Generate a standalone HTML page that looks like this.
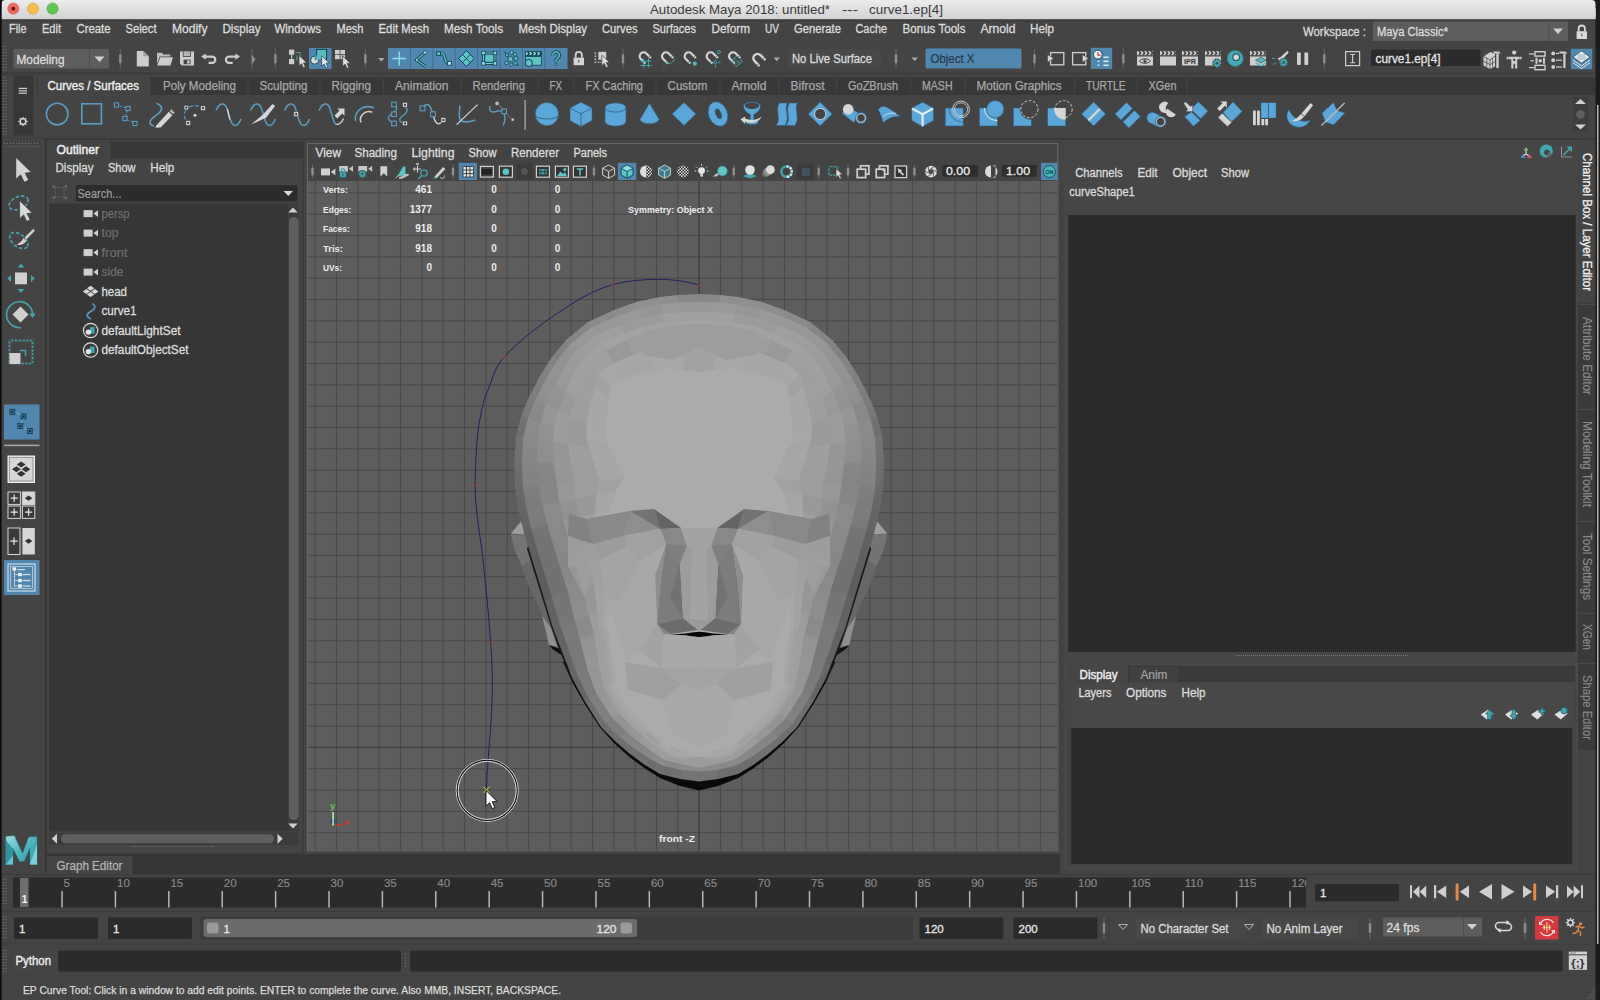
<!DOCTYPE html>
<html><head><meta charset="utf-8"><title>Autodesk Maya 2018</title>
<style>
html,body{margin:0;padding:0;width:1600px;height:1000px;overflow:hidden;background:#444}
svg{display:block;font-family:"Liberation Sans",sans-serif}
text{white-space:pre}
</style></head><body>
<svg width="1600" height="1000" viewBox="0 0 1600 1000">
<defs><linearGradient id="tg" x1="0" y1="0" x2="0" y2="1"><stop offset="0" stop-color="#ececec"/><stop offset="1" stop-color="#d2d2d2"/></linearGradient><linearGradient id="tg2" x1="0" y1="0" x2="0" y2="1"><stop offset="0" stop-color="#e1e1e1"/><stop offset="1" stop-color="#d2d2d2"/></linearGradient></defs>
<rect x="0" y="0" width="1600" height="20" fill="#1c1c1c"/>
<rect x="1.5" y="0" width="1594" height="19.5" fill="url(#tg)" rx="4"/>
<rect x="1.5" y="10" width="1594" height="9.5" fill="#d6d6d6"/>
<rect x="1.5" y="8" width="1594" height="11.5" fill="url(#tg2)"/>
<rect x="0" y="19.3" width="1600" height="1.2" fill="#333"/>
<circle cx="13.3" cy="8.6" r="5.6" fill="#ee6a5f" stroke="#d9554b" stroke-width="0.6"/>
<circle cx="13.3" cy="8.7" r="1.9" fill="#6b0d08"/>
<circle cx="33" cy="8.6" r="5.6" fill="#f5bd4f" stroke="#dca13a" stroke-width="0.6"/>
<circle cx="52.5" cy="8.6" r="5.6" fill="#61c454" stroke="#4aa73c" stroke-width="0.6"/>
<text x="650" y="13.6" font-size="13" fill="#3a3a3a" textLength="180" lengthAdjust="spacingAndGlyphs">Autodesk Maya 2018: untitled*</text>
<text x="842" y="13.6" font-size="13" fill="#3a3a3a" textLength="16" lengthAdjust="spacingAndGlyphs">---</text>
<text x="869" y="13.6" font-size="13" fill="#3a3a3a" textLength="74" lengthAdjust="spacingAndGlyphs">curve1.ep[4]</text>
<text x="9" y="32.6" font-size="12" fill="#dcdcdc" textLength="17.5" lengthAdjust="spacingAndGlyphs" stroke="#dcdcdc" stroke-width="0.3">File</text>
<text x="42" y="32.6" font-size="12" fill="#dcdcdc" textLength="19" lengthAdjust="spacingAndGlyphs" stroke="#dcdcdc" stroke-width="0.3">Edit</text>
<text x="76.5" y="32.6" font-size="12" fill="#dcdcdc" textLength="34" lengthAdjust="spacingAndGlyphs" stroke="#dcdcdc" stroke-width="0.3">Create</text>
<text x="125.5" y="32.6" font-size="12" fill="#dcdcdc" textLength="31" lengthAdjust="spacingAndGlyphs" stroke="#dcdcdc" stroke-width="0.3">Select</text>
<text x="172" y="32.6" font-size="12" fill="#dcdcdc" textLength="35.5" lengthAdjust="spacingAndGlyphs" stroke="#dcdcdc" stroke-width="0.3">Modify</text>
<text x="222.5" y="32.6" font-size="12" fill="#dcdcdc" textLength="38" lengthAdjust="spacingAndGlyphs" stroke="#dcdcdc" stroke-width="0.3">Display</text>
<text x="274.5" y="32.6" font-size="12" fill="#dcdcdc" textLength="46.5" lengthAdjust="spacingAndGlyphs" stroke="#dcdcdc" stroke-width="0.3">Windows</text>
<text x="336.5" y="32.6" font-size="12" fill="#dcdcdc" textLength="27" lengthAdjust="spacingAndGlyphs" stroke="#dcdcdc" stroke-width="0.3">Mesh</text>
<text x="378.5" y="32.6" font-size="12" fill="#dcdcdc" textLength="50.5" lengthAdjust="spacingAndGlyphs" stroke="#dcdcdc" stroke-width="0.3">Edit Mesh</text>
<text x="444" y="32.6" font-size="12" fill="#dcdcdc" textLength="59" lengthAdjust="spacingAndGlyphs" stroke="#dcdcdc" stroke-width="0.3">Mesh Tools</text>
<text x="518.5" y="32.6" font-size="12" fill="#dcdcdc" textLength="68.5" lengthAdjust="spacingAndGlyphs" stroke="#dcdcdc" stroke-width="0.3">Mesh Display</text>
<text x="602" y="32.6" font-size="12" fill="#dcdcdc" textLength="35.5" lengthAdjust="spacingAndGlyphs" stroke="#dcdcdc" stroke-width="0.3">Curves</text>
<text x="652.5" y="32.6" font-size="12" fill="#dcdcdc" textLength="43.5" lengthAdjust="spacingAndGlyphs" stroke="#dcdcdc" stroke-width="0.3">Surfaces</text>
<text x="711.5" y="32.6" font-size="12" fill="#dcdcdc" textLength="38.5" lengthAdjust="spacingAndGlyphs" stroke="#dcdcdc" stroke-width="0.3">Deform</text>
<text x="765" y="32.6" font-size="12" fill="#dcdcdc" textLength="14" lengthAdjust="spacingAndGlyphs" stroke="#dcdcdc" stroke-width="0.3">UV</text>
<text x="794" y="32.6" font-size="12" fill="#dcdcdc" textLength="47" lengthAdjust="spacingAndGlyphs" stroke="#dcdcdc" stroke-width="0.3">Generate</text>
<text x="855.5" y="32.6" font-size="12" fill="#dcdcdc" textLength="31.5" lengthAdjust="spacingAndGlyphs" stroke="#dcdcdc" stroke-width="0.3">Cache</text>
<text x="902.5" y="32.6" font-size="12" fill="#dcdcdc" textLength="63" lengthAdjust="spacingAndGlyphs" stroke="#dcdcdc" stroke-width="0.3">Bonus Tools</text>
<text x="980.5" y="32.6" font-size="12" fill="#dcdcdc" textLength="35" lengthAdjust="spacingAndGlyphs" stroke="#dcdcdc" stroke-width="0.3">Arnold</text>
<text x="1030" y="32.6" font-size="12" fill="#dcdcdc" textLength="24" lengthAdjust="spacingAndGlyphs" stroke="#dcdcdc" stroke-width="0.3">Help</text>
<text x="1303" y="36.3" font-size="12" fill="#dcdcdc" textLength="63" lengthAdjust="spacingAndGlyphs" stroke="#dcdcdc" stroke-width="0.3">Workspace :</text>
<rect x="1373" y="21.5" width="195" height="20.5" fill="#5d5d5d" rx="1.5"/>
<text x="1377" y="36.3" font-size="12" fill="#dcdcdc" textLength="71" lengthAdjust="spacingAndGlyphs" stroke="#dcdcdc" stroke-width="0.3">Maya Classic*</text>
<rect x="1548.5" y="22" width="0.8" height="19.5" fill="#4a4a4a"/>
<path d="M1553 28.5h10l-5 5.5z" fill="#d0d0d0"/>
<path d="M1576.6 31.2h10.4v7.8h-10.4z" fill="#d8d8d8"/>
<path d="M1578.7 31.2v-2.6a3.1 3.1 0 0 1 6.2 0v2.6" fill="none" stroke="#d8d8d8" stroke-width="1.8"/>
<rect x="1581.3" y="33.6" width="1" height="2.6" fill="#444"/>
<rect x="2" y="41" width="1596" height="1" fill="#424242"/>
<rect x="13.5" y="49" width="95.5" height="19.5" fill="#5d5d5d" rx="1.5"/>
<rect x="89" y="49.5" width="0.8" height="18.5" fill="#4a4a4a"/>
<text x="16.5" y="63.6" font-size="12" fill="#dcdcdc" textLength="48" lengthAdjust="spacingAndGlyphs" stroke="#dcdcdc" stroke-width="0.3">Modeling</text>
<path d="M94.5 56.5h10l-5 5.5z" fill="#d0d0d0"/>
<rect x="119.8" y="48.6" width="1" height="19.8" fill="#686868"/>
<rect x="119.1" y="54" width="2.4" height="9.5" fill="#8e8e8e" rx="1.2"/>
<rect x="274.9" y="48.6" width="1" height="19.8" fill="#686868"/>
<rect x="274.2" y="54" width="2.4" height="9.5" fill="#8e8e8e" rx="1.2"/>
<rect x="364.9" y="48.6" width="1" height="19.8" fill="#686868"/>
<rect x="364.2" y="54" width="2.4" height="9.5" fill="#8e8e8e" rx="1.2"/>
<rect x="622.5" y="48.6" width="1" height="19.8" fill="#686868"/>
<rect x="621.8" y="54" width="2.4" height="9.5" fill="#8e8e8e" rx="1.2"/>
<rect x="895.5" y="48.6" width="1" height="19.8" fill="#686868"/>
<rect x="894.8" y="54" width="2.4" height="9.5" fill="#8e8e8e" rx="1.2"/>
<rect x="1034.0" y="48.6" width="1" height="19.8" fill="#686868"/>
<rect x="1033.3" y="54" width="2.4" height="9.5" fill="#8e8e8e" rx="1.2"/>
<rect x="1122.8" y="48.6" width="1" height="19.8" fill="#686868"/>
<rect x="1122.1" y="54" width="2.4" height="9.5" fill="#8e8e8e" rx="1.2"/>
<rect x="1323.8" y="48.6" width="1" height="19.8" fill="#686868"/>
<rect x="1323.1" y="54" width="2.4" height="9.5" fill="#8e8e8e" rx="1.2"/>
<rect x="388" y="48" width="179.5" height="21" fill="#5187ae"/>
<rect x="410.0" y="48" width="0.8" height="21" fill="#3f6a87"/>
<rect x="432.40000000000003" y="48" width="0.8" height="21" fill="#3f6a87"/>
<rect x="454.8" y="48" width="0.8" height="21" fill="#3f6a87"/>
<rect x="477.20000000000005" y="48" width="0.8" height="21" fill="#3f6a87"/>
<rect x="499.6" y="48" width="0.8" height="21" fill="#3f6a87"/>
<rect x="522.0" y="48" width="0.8" height="21" fill="#3f6a87"/>
<rect x="544.4" y="48" width="0.8" height="21" fill="#3f6a87"/>
<rect x="309" y="48" width="22.5" height="21" fill="#5187ae"/>
<rect x="788" y="49" width="93" height="19.5" fill="#494949" rx="1.5"/>
<text x="792" y="63" font-size="12" fill="#dcdcdc" textLength="80" lengthAdjust="spacingAndGlyphs" stroke="#dcdcdc" stroke-width="0.3">No Live Surface</text>
<rect x="925.5" y="48.5" width="96" height="20" fill="#5187ae" rx="1.5"/>
<text x="930.5" y="63" font-size="12" fill="#223a4c" textLength="44" lengthAdjust="spacingAndGlyphs" stroke="#223a4c" stroke-width="0.2">Object X</text>
<rect x="1371" y="49.5" width="109.5" height="16.5" fill="#2b2b2b" rx="1.5"/>
<text x="1375.5" y="62.6" font-size="12" fill="#e4e4e4" textLength="65" lengthAdjust="spacingAndGlyphs" stroke="#e4e4e4" stroke-width="0.3">curve1.ep[4]</text>
<rect x="1570.8" y="48.8" width="21.4" height="20.4" fill="#5187ae"/>
<rect x="2" y="72.6" width="1594" height="1.8" fill="#3b3b3b"/>
<rect x="13.5" y="75.5" width="20" height="60" fill="#373737"/>
<rect x="37" y="77" width="1558.5" height="18" fill="#383838"/>
<rect x="38" y="77" width="112.5" height="19" fill="#444"/>
<text x="47.5" y="90.3" font-size="12" fill="#f0f0f0" textLength="91.5" lengthAdjust="spacingAndGlyphs" stroke="#f0f0f0" stroke-width="0.35">Curves / Surfaces</text>
<text x="163" y="90.3" font-size="12" fill="#a8a8a8" textLength="73" lengthAdjust="spacingAndGlyphs" stroke="#a8a8a8" stroke-width="0.25">Poly Modeling</text>
<text x="259.5" y="90.3" font-size="12" fill="#a8a8a8" textLength="48" lengthAdjust="spacingAndGlyphs" stroke="#a8a8a8" stroke-width="0.25">Sculpting</text>
<text x="331.5" y="90.3" font-size="12" fill="#a8a8a8" textLength="39.5" lengthAdjust="spacingAndGlyphs" stroke="#a8a8a8" stroke-width="0.25">Rigging</text>
<text x="395" y="90.3" font-size="12" fill="#a8a8a8" textLength="53.5" lengthAdjust="spacingAndGlyphs" stroke="#a8a8a8" stroke-width="0.25">Animation</text>
<text x="472.5" y="90.3" font-size="12" fill="#a8a8a8" textLength="52.5" lengthAdjust="spacingAndGlyphs" stroke="#a8a8a8" stroke-width="0.25">Rendering</text>
<text x="549.5" y="90.3" font-size="12" fill="#a8a8a8" textLength="12.5" lengthAdjust="spacingAndGlyphs" stroke="#a8a8a8" stroke-width="0.25">FX</text>
<text x="585.5" y="90.3" font-size="12" fill="#a8a8a8" textLength="57.5" lengthAdjust="spacingAndGlyphs" stroke="#a8a8a8" stroke-width="0.25">FX Caching</text>
<text x="667.5" y="90.3" font-size="12" fill="#a8a8a8" textLength="40" lengthAdjust="spacingAndGlyphs" stroke="#a8a8a8" stroke-width="0.25">Custom</text>
<text x="731.5" y="90.3" font-size="12" fill="#a8a8a8" textLength="35" lengthAdjust="spacingAndGlyphs" stroke="#a8a8a8" stroke-width="0.25">Arnold</text>
<text x="790.5" y="90.3" font-size="12" fill="#a8a8a8" textLength="34" lengthAdjust="spacingAndGlyphs" stroke="#a8a8a8" stroke-width="0.25">Bifrost</text>
<text x="848" y="90.3" font-size="12" fill="#a8a8a8" textLength="50" lengthAdjust="spacingAndGlyphs" stroke="#a8a8a8" stroke-width="0.25">GoZBrush</text>
<text x="922" y="90.3" font-size="12" fill="#a8a8a8" textLength="30.5" lengthAdjust="spacingAndGlyphs" stroke="#a8a8a8" stroke-width="0.25">MASH</text>
<text x="976.5" y="90.3" font-size="12" fill="#a8a8a8" textLength="85" lengthAdjust="spacingAndGlyphs" stroke="#a8a8a8" stroke-width="0.25">Motion Graphics</text>
<text x="1086" y="90.3" font-size="12" fill="#a8a8a8" textLength="39.5" lengthAdjust="spacingAndGlyphs" stroke="#a8a8a8" stroke-width="0.25">TURTLE</text>
<text x="1148.5" y="90.3" font-size="12" fill="#a8a8a8" textLength="28" lengthAdjust="spacingAndGlyphs" stroke="#a8a8a8" stroke-width="0.25">XGen</text>
<rect x="247.5" y="78" width="1" height="16" fill="#444"/>
<rect x="319.5" y="78" width="1" height="16" fill="#444"/>
<rect x="383.0" y="78" width="1" height="16" fill="#444"/>
<rect x="460.5" y="78" width="1" height="16" fill="#444"/>
<rect x="537.5" y="78" width="1" height="16" fill="#444"/>
<rect x="573.5" y="78" width="1" height="16" fill="#444"/>
<rect x="655.5" y="78" width="1" height="16" fill="#444"/>
<rect x="719.5" y="78" width="1" height="16" fill="#444"/>
<rect x="778.5" y="78" width="1" height="16" fill="#444"/>
<rect x="836.0" y="78" width="1" height="16" fill="#444"/>
<rect x="910.0" y="78" width="1" height="16" fill="#444"/>
<rect x="964.5" y="78" width="1" height="16" fill="#444"/>
<rect x="1074.0" y="78" width="1" height="16" fill="#444"/>
<rect x="1136.5" y="78" width="1" height="16" fill="#444"/>
<rect x="1186.5" y="78" width="1" height="16" fill="#444"/>
<rect x="37" y="95" width="1555" height="42" fill="#444"/>
<rect x="2" y="138.2" width="1594" height="1.6" fill="#383838"/>
<rect x="18.7" y="87.8" width="8.3" height="1.2" fill="#cfcfcf"/>
<rect x="18.7" y="90.2" width="8.3" height="1.2" fill="#cfcfcf"/>
<rect x="18.7" y="92.6" width="8.3" height="1.2" fill="#cfcfcf"/>
<circle cx="23" cy="121.5" r="2.8" fill="none" stroke="#cfcfcf" stroke-width="1.5"/>
<line x1="26.2" y1="121.5" x2="27.6" y2="121.5" stroke="#cfcfcf" stroke-width="1.4" />
<line x1="25.26274169979695" y1="123.76274169979695" x2="26.25269119345812" y2="124.75269119345812" stroke="#cfcfcf" stroke-width="1.4" />
<line x1="23.0" y1="124.7" x2="23.0" y2="126.1" stroke="#cfcfcf" stroke-width="1.4" />
<line x1="20.73725830020305" y1="123.76274169979695" x2="19.74730880654188" y2="124.75269119345812" stroke="#cfcfcf" stroke-width="1.4" />
<line x1="19.8" y1="121.5" x2="18.4" y2="121.5" stroke="#cfcfcf" stroke-width="1.4" />
<line x1="20.73725830020305" y1="119.23725830020305" x2="19.74730880654188" y2="118.24730880654188" stroke="#cfcfcf" stroke-width="1.4" />
<line x1="23.0" y1="118.3" x2="23.0" y2="116.9" stroke="#cfcfcf" stroke-width="1.4" />
<line x1="25.26274169979695" y1="119.23725830020305" x2="26.25269119345812" y2="118.24730880654188" stroke="#cfcfcf" stroke-width="1.4" />
<rect x="1573.5" y="97" width="14.5" height="34" fill="#3d3d3d"/>
<path d="M1575 104h11l-5.5-5z" fill="#cfcfcf"/>
<circle cx="1580.5" cy="114.5" r="4.4" fill="#5e5e5e"/>
<path d="M1575 124.5h11l-5.5 5z" fill="#cfcfcf"/>
<rect x="524.2" y="100" width="1.8" height="30" fill="#8c8c8c"/>
<rect x="2.8" y="46" width="1" height="1" fill="#7a7a7a"/>
<rect x="5.4" y="46" width="1" height="1" fill="#7a7a7a"/>
<rect x="2.8" y="49" width="1" height="1" fill="#7a7a7a"/>
<rect x="5.4" y="49" width="1" height="1" fill="#7a7a7a"/>
<rect x="2.8" y="52" width="1" height="1" fill="#7a7a7a"/>
<rect x="5.4" y="52" width="1" height="1" fill="#7a7a7a"/>
<rect x="2.8" y="55" width="1" height="1" fill="#7a7a7a"/>
<rect x="5.4" y="55" width="1" height="1" fill="#7a7a7a"/>
<rect x="2.8" y="58" width="1" height="1" fill="#7a7a7a"/>
<rect x="5.4" y="58" width="1" height="1" fill="#7a7a7a"/>
<rect x="2.8" y="61" width="1" height="1" fill="#7a7a7a"/>
<rect x="5.4" y="61" width="1" height="1" fill="#7a7a7a"/>
<rect x="2.8" y="64" width="1" height="1" fill="#7a7a7a"/>
<rect x="5.4" y="64" width="1" height="1" fill="#7a7a7a"/>
<rect x="2.8" y="67" width="1" height="1" fill="#7a7a7a"/>
<rect x="5.4" y="67" width="1" height="1" fill="#7a7a7a"/>
<rect x="2.8" y="70" width="1" height="1" fill="#7a7a7a"/>
<rect x="5.4" y="70" width="1" height="1" fill="#7a7a7a"/>
<rect x="2.8" y="77" width="1" height="1" fill="#7a7a7a"/>
<rect x="5.4" y="77" width="1" height="1" fill="#7a7a7a"/>
<rect x="2.8" y="80" width="1" height="1" fill="#7a7a7a"/>
<rect x="5.4" y="80" width="1" height="1" fill="#7a7a7a"/>
<rect x="2.8" y="83" width="1" height="1" fill="#7a7a7a"/>
<rect x="5.4" y="83" width="1" height="1" fill="#7a7a7a"/>
<rect x="2.8" y="86" width="1" height="1" fill="#7a7a7a"/>
<rect x="5.4" y="86" width="1" height="1" fill="#7a7a7a"/>
<rect x="2.8" y="89" width="1" height="1" fill="#7a7a7a"/>
<rect x="5.4" y="89" width="1" height="1" fill="#7a7a7a"/>
<rect x="2.8" y="92" width="1" height="1" fill="#7a7a7a"/>
<rect x="5.4" y="92" width="1" height="1" fill="#7a7a7a"/>
<rect x="2.8" y="95" width="1" height="1" fill="#7a7a7a"/>
<rect x="5.4" y="95" width="1" height="1" fill="#7a7a7a"/>
<rect x="2.8" y="98" width="1" height="1" fill="#7a7a7a"/>
<rect x="5.4" y="98" width="1" height="1" fill="#7a7a7a"/>
<rect x="2.8" y="101" width="1" height="1" fill="#7a7a7a"/>
<rect x="5.4" y="101" width="1" height="1" fill="#7a7a7a"/>
<rect x="2.8" y="104" width="1" height="1" fill="#7a7a7a"/>
<rect x="5.4" y="104" width="1" height="1" fill="#7a7a7a"/>
<rect x="2.8" y="107" width="1" height="1" fill="#7a7a7a"/>
<rect x="5.4" y="107" width="1" height="1" fill="#7a7a7a"/>
<rect x="2.8" y="110" width="1" height="1" fill="#7a7a7a"/>
<rect x="5.4" y="110" width="1" height="1" fill="#7a7a7a"/>
<rect x="2.8" y="113" width="1" height="1" fill="#7a7a7a"/>
<rect x="5.4" y="113" width="1" height="1" fill="#7a7a7a"/>
<rect x="2.8" y="116" width="1" height="1" fill="#7a7a7a"/>
<rect x="5.4" y="116" width="1" height="1" fill="#7a7a7a"/>
<rect x="2.8" y="119" width="1" height="1" fill="#7a7a7a"/>
<rect x="5.4" y="119" width="1" height="1" fill="#7a7a7a"/>
<rect x="2.8" y="122" width="1" height="1" fill="#7a7a7a"/>
<rect x="5.4" y="122" width="1" height="1" fill="#7a7a7a"/>
<rect x="2.8" y="125" width="1" height="1" fill="#7a7a7a"/>
<rect x="5.4" y="125" width="1" height="1" fill="#7a7a7a"/>
<rect x="2.8" y="128" width="1" height="1" fill="#7a7a7a"/>
<rect x="5.4" y="128" width="1" height="1" fill="#7a7a7a"/>
<rect x="2.8" y="131" width="1" height="1" fill="#7a7a7a"/>
<rect x="5.4" y="131" width="1" height="1" fill="#7a7a7a"/>
<rect x="2.8" y="134" width="1" height="1" fill="#7a7a7a"/>
<rect x="5.4" y="134" width="1" height="1" fill="#7a7a7a"/>
<rect x="2" y="138.5" width="41.5" height="735" fill="#444"/>
<rect x="43.2" y="140" width="1" height="733" fill="#4e4e4e"/>
<rect x="44.2" y="140" width="2.8" height="733" fill="#3a3a3a"/>
<rect x="4" y="143" width="1" height="1" fill="#777"/>
<rect x="5.5" y="146" width="1" height="1" fill="#777"/>
<rect x="7" y="143" width="1" height="1" fill="#777"/>
<rect x="8.5" y="146" width="1" height="1" fill="#777"/>
<rect x="10" y="143" width="1" height="1" fill="#777"/>
<rect x="11.5" y="146" width="1" height="1" fill="#777"/>
<rect x="13" y="143" width="1" height="1" fill="#777"/>
<rect x="14.5" y="146" width="1" height="1" fill="#777"/>
<rect x="16" y="143" width="1" height="1" fill="#777"/>
<rect x="17.5" y="146" width="1" height="1" fill="#777"/>
<rect x="19" y="143" width="1" height="1" fill="#777"/>
<rect x="20.5" y="146" width="1" height="1" fill="#777"/>
<rect x="22" y="143" width="1" height="1" fill="#777"/>
<rect x="23.5" y="146" width="1" height="1" fill="#777"/>
<rect x="25" y="143" width="1" height="1" fill="#777"/>
<rect x="26.5" y="146" width="1" height="1" fill="#777"/>
<rect x="28" y="143" width="1" height="1" fill="#777"/>
<rect x="29.5" y="146" width="1" height="1" fill="#777"/>
<rect x="31" y="143" width="1" height="1" fill="#777"/>
<rect x="32.5" y="146" width="1" height="1" fill="#777"/>
<rect x="34" y="143" width="1" height="1" fill="#777"/>
<rect x="35.5" y="146" width="1" height="1" fill="#777"/>
<rect x="37" y="143" width="1" height="1" fill="#777"/>
<rect x="38.5" y="146" width="1" height="1" fill="#777"/>
<rect x="4" y="404.5" width="35.5" height="35" fill="#5187ae"/>
<rect x="4" y="444.6" width="35.5" height="1.6" fill="#a9a199"/>
<rect x="4" y="560" width="35.5" height="35" fill="#5187ae"/>
<rect x="47" y="140" width="257" height="712" fill="#444"/>
<rect x="47" y="141.5" width="257" height="17" fill="#383838"/>
<rect x="47" y="141.5" width="63.5" height="17.5" fill="#444"/>
<text x="56.5" y="154.4" font-size="12" fill="#f2f2f2" textLength="42.5" lengthAdjust="spacingAndGlyphs" stroke="#f2f2f2" stroke-width="0.4">Outliner</text>
<text x="55.5" y="172.3" font-size="12" fill="#dcdcdc" textLength="38" lengthAdjust="spacingAndGlyphs" stroke="#dcdcdc" stroke-width="0.3">Display</text>
<text x="108" y="172.3" font-size="12" fill="#dcdcdc" textLength="27.5" lengthAdjust="spacingAndGlyphs" stroke="#dcdcdc" stroke-width="0.3">Show</text>
<text x="150.3" y="172.3" font-size="12" fill="#dcdcdc" textLength="24" lengthAdjust="spacingAndGlyphs" stroke="#dcdcdc" stroke-width="0.3">Help</text>
<rect x="76" y="185" width="221.5" height="16.5" fill="#2c2c2c" rx="1.5"/>
<text x="77.5" y="197.6" font-size="12" fill="#9c9c9c" textLength="44" lengthAdjust="spacingAndGlyphs" stroke="#9c9c9c" stroke-width="0.2">Search...</text>
<path d="M283.5 191h9.5l-4.75 5z" fill="#d8d8d8"/>
<rect x="302.6" y="140" width="4.4" height="713" fill="#3b3b3b"/>
<rect x="49" y="203.5" width="239.5" height="628" fill="#363636"/>
<rect x="288.5" y="203.5" width="10.5" height="628" fill="#3c3c3c"/>
<rect x="289" y="217" width="9.6" height="603" fill="#5e5e5e" rx="4.5"/>
<path d="M288.3 212.5h9.4l-4.7-5z" fill="#cfcfcf"/>
<path d="M288.3 823.5h9.4l-4.7 5z" fill="#cfcfcf"/>
<rect x="49" y="832.5" width="249.5" height="12.5" fill="#3c3c3c"/>
<rect x="61" y="834.3" width="213" height="9" fill="#5e5e5e" rx="4.5"/>
<path d="M57 833.8v10l-5.2-5z" fill="#cfcfcf"/>
<path d="M277.5 833.8v10l5.2-5z" fill="#cfcfcf"/>
<rect x="131" y="846" width="1" height="1" fill="#707070"/>
<rect x="133" y="846" width="1" height="1" fill="#707070"/>
<rect x="135" y="846" width="1" height="1" fill="#707070"/>
<rect x="137" y="846" width="1" height="1" fill="#707070"/>
<rect x="139" y="846" width="1" height="1" fill="#707070"/>
<rect x="141" y="846" width="1" height="1" fill="#707070"/>
<rect x="143" y="846" width="1" height="1" fill="#707070"/>
<rect x="145" y="846" width="1" height="1" fill="#707070"/>
<rect x="147" y="846" width="1" height="1" fill="#707070"/>
<rect x="149" y="846" width="1" height="1" fill="#707070"/>
<rect x="151" y="846" width="1" height="1" fill="#707070"/>
<rect x="153" y="846" width="1" height="1" fill="#707070"/>
<rect x="155" y="846" width="1" height="1" fill="#707070"/>
<rect x="157" y="846" width="1" height="1" fill="#707070"/>
<rect x="159" y="846" width="1" height="1" fill="#707070"/>
<rect x="161" y="846" width="1" height="1" fill="#707070"/>
<rect x="163" y="846" width="1" height="1" fill="#707070"/>
<rect x="165" y="846" width="1" height="1" fill="#707070"/>
<rect x="167" y="846" width="1" height="1" fill="#707070"/>
<rect x="169" y="846" width="1" height="1" fill="#707070"/>
<rect x="171" y="846" width="1" height="1" fill="#707070"/>
<rect x="173" y="846" width="1" height="1" fill="#707070"/>
<rect x="175" y="846" width="1" height="1" fill="#707070"/>
<rect x="177" y="846" width="1" height="1" fill="#707070"/>
<rect x="179" y="846" width="1" height="1" fill="#707070"/>
<rect x="181" y="846" width="1" height="1" fill="#707070"/>
<rect x="183" y="846" width="1" height="1" fill="#707070"/>
<rect x="185" y="846" width="1" height="1" fill="#707070"/>
<rect x="187" y="846" width="1" height="1" fill="#707070"/>
<rect x="189" y="846" width="1" height="1" fill="#707070"/>
<rect x="191" y="846" width="1" height="1" fill="#707070"/>
<rect x="193" y="846" width="1" height="1" fill="#707070"/>
<rect x="195" y="846" width="1" height="1" fill="#707070"/>
<rect x="197" y="846" width="1" height="1" fill="#707070"/>
<rect x="199" y="846" width="1" height="1" fill="#707070"/>
<rect x="201" y="846" width="1" height="1" fill="#707070"/>
<rect x="203" y="846" width="1" height="1" fill="#707070"/>
<rect x="205" y="846" width="1" height="1" fill="#707070"/>
<rect x="207" y="846" width="1" height="1" fill="#707070"/>
<rect x="209" y="846" width="1" height="1" fill="#707070"/>
<rect x="211" y="846" width="1" height="1" fill="#707070"/>
<rect x="213" y="846" width="1" height="1" fill="#707070"/>
<text x="101.5" y="217.7" font-size="12" fill="#6f6f6f" textLength="28" lengthAdjust="spacingAndGlyphs" stroke="#6f6f6f" stroke-width="0.2">persp</text>
<text x="101.5" y="237.2" font-size="12" fill="#6f6f6f" textLength="17" lengthAdjust="spacingAndGlyphs" stroke="#6f6f6f" stroke-width="0.2">top</text>
<text x="101.5" y="256.7" font-size="12" fill="#6f6f6f" textLength="26" lengthAdjust="spacingAndGlyphs" stroke="#6f6f6f" stroke-width="0.2">front</text>
<text x="101.5" y="276.2" font-size="12" fill="#6f6f6f" textLength="22" lengthAdjust="spacingAndGlyphs" stroke="#6f6f6f" stroke-width="0.2">side</text>
<text x="101.5" y="295.7" font-size="12" fill="#dedede" textLength="25.5" lengthAdjust="spacingAndGlyphs" stroke="#dedede" stroke-width="0.3">head</text>
<text x="101.5" y="315.2" font-size="12" fill="#dedede" textLength="35" lengthAdjust="spacingAndGlyphs" stroke="#dedede" stroke-width="0.3">curve1</text>
<text x="101.5" y="334.7" font-size="12" fill="#dedede" textLength="79" lengthAdjust="spacingAndGlyphs" stroke="#dedede" stroke-width="0.3">defaultLightSet</text>
<text x="101.5" y="354.2" font-size="12" fill="#dedede" textLength="87" lengthAdjust="spacingAndGlyphs" stroke="#dedede" stroke-width="0.3">defaultObjectSet</text>
<defs><linearGradient id="mg" x1="0" y1="0" x2="1" y2="1"><stop offset="0" stop-color="#9fdde2"/><stop offset="0.5" stop-color="#4fb6c0"/><stop offset="1" stop-color="#2e93a1"/></linearGradient></defs>
<path d="M5.8 836.2l8.600-0.600 8.200 17.600 6-16.200 8.400-0.400v28h-7v-16.600l-5.800 13.400h-4.900l-6.300-12.800v16h-7.200z" fill="url(#mg)" stroke="#2a6f7a" stroke-width="0.6"/>
<path d="M5.8 840l7.200 9v15.600h-7.200z" fill="#2f93a0"/>
<path d="M5.8 864.600l7.200-9v9z" fill="#63c2cb"/>
<path d="M37 840l-7 9v15.600h7z" fill="#3fa9b5"/>
<path d="M30 864.600l7-20v20z" fill="#7fd0d7"/>
<rect x="47" y="853.5" width="1013" height="21" fill="#353535"/>
<rect x="47" y="856" width="85.5" height="18.5" fill="#444"/>
<text x="56.5" y="869.6" font-size="12" fill="#b4b4b4" textLength="66" lengthAdjust="spacingAndGlyphs" stroke="#b4b4b4" stroke-width="0.25">Graph Editor</text>
<rect x="304" y="140" width="758" height="714" fill="#444"/>
<rect x="307.4" y="143.6" width="750.4" height="707.2" fill="#444" rx="0" stroke="#6c6c6c" stroke-width="1"/>
<text x="315.5" y="156.5" font-size="12" fill="#dcdcdc" textLength="25.5" lengthAdjust="spacingAndGlyphs" stroke="#dcdcdc" stroke-width="0.3">View</text>
<text x="354.5" y="156.5" font-size="12" fill="#dcdcdc" textLength="42.5" lengthAdjust="spacingAndGlyphs" stroke="#dcdcdc" stroke-width="0.3">Shading</text>
<text x="411.5" y="156.5" font-size="12" fill="#dcdcdc" textLength="43" lengthAdjust="spacingAndGlyphs" stroke="#dcdcdc" stroke-width="0.3">Lighting</text>
<text x="468.5" y="156.5" font-size="12" fill="#dcdcdc" textLength="28" lengthAdjust="spacingAndGlyphs" stroke="#dcdcdc" stroke-width="0.3">Show</text>
<text x="511" y="156.5" font-size="12" fill="#dcdcdc" textLength="48" lengthAdjust="spacingAndGlyphs" stroke="#dcdcdc" stroke-width="0.3">Renderer</text>
<text x="573.5" y="156.5" font-size="12" fill="#dcdcdc" textLength="33.5" lengthAdjust="spacingAndGlyphs" stroke="#dcdcdc" stroke-width="0.3">Panels</text>
<rect x="308" y="162" width="749" height="19" fill="#444"/>
<clipPath id="vp"><rect x="308" y="181" width="749.2" height="669.3"/></clipPath>
<g clip-path="url(#vp)">
<rect x="307" y="181" width="752" height="670" fill="#5d5d5d"/>
<path d="M293.83 181V851M315.16 181V851M336.49 181V851M357.82 181V851M379.15 181V851M400.48 181V851M421.81 181V851M443.14 181V851M464.47 181V851M485.80 181V851M507.13 181V851M528.46 181V851M549.79 181V851M571.12 181V851M592.45 181V851M613.78 181V851M635.11 181V851M656.44 181V851M677.77 181V851M699.10 181V851M720.43 181V851M741.76 181V851M763.09 181V851M784.42 181V851M805.75 181V851M827.08 181V851M848.41 181V851M869.74 181V851M891.07 181V851M912.40 181V851M933.73 181V851M955.06 181V851M976.39 181V851M997.72 181V851M1019.05 181V851M1040.38 181V851M1061.71 181V851M307 171.49H1059M307 192.82H1059M307 214.15H1059M307 235.48H1059M307 256.81H1059M307 278.14H1059M307 299.47H1059M307 320.80H1059M307 342.13H1059M307 363.46H1059M307 384.79H1059M307 406.12H1059M307 427.45H1059M307 448.78H1059M307 470.11H1059M307 491.44H1059M307 512.77H1059M307 534.10H1059M307 555.43H1059M307 576.76H1059M307 598.09H1059M307 619.42H1059M307 640.75H1059M307 662.08H1059M307 683.41H1059M307 704.74H1059M307 726.07H1059M307 747.40H1059M307 768.73H1059M307 790.06H1059M307 811.39H1059M307 832.72H1059M307 854.05H1059" fill="none" stroke="#484848" stroke-width="1"/>
<path d="M699.1 181V851M307 747.4H1059" fill="none" stroke="#404040" stroke-width="1.25"/>
<defs><linearGradient id="h0" gradientUnits="userSpaceOnUse" x1="0" y1="294" x2="0" y2="782"><stop offset="0.000" stop-color="#8e8e8e"/><stop offset="0.094" stop-color="#888888"/><stop offset="0.217" stop-color="#7c7c7c"/><stop offset="0.320" stop-color="#6e6e6e"/><stop offset="0.463" stop-color="#646464"/><stop offset="0.627" stop-color="#5f5f5f"/><stop offset="0.832" stop-color="#6a6a6a"/><stop offset="1.000" stop-color="#727272"/></linearGradient><linearGradient id="h1" gradientUnits="userSpaceOnUse" x1="0" y1="302" x2="0" y2="772"><stop offset="0.000" stop-color="#999999"/><stop offset="0.123" stop-color="#939393"/><stop offset="0.251" stop-color="#8b8b8b"/><stop offset="0.379" stop-color="#808080"/><stop offset="0.506" stop-color="#767676"/><stop offset="0.634" stop-color="#747474"/><stop offset="0.847" stop-color="#7c7c7c"/><stop offset="1.000" stop-color="#8a8a8a"/></linearGradient><linearGradient id="h2" gradientUnits="userSpaceOnUse" x1="0" y1="312" x2="0" y2="767"><stop offset="0.000" stop-color="#a0a0a0"/><stop offset="0.149" stop-color="#999999"/><stop offset="0.303" stop-color="#8e8e8e"/><stop offset="0.369" stop-color="#8a8a8a"/><stop offset="0.545" stop-color="#878787"/><stop offset="0.743" stop-color="#929292"/><stop offset="1.000" stop-color="#9c9c9c"/></linearGradient><linearGradient id="h3" gradientUnits="userSpaceOnUse" x1="0" y1="320" x2="0" y2="763"><stop offset="0.000" stop-color="#a2a2a2"/><stop offset="0.181" stop-color="#9d9d9d"/><stop offset="0.361" stop-color="#959595"/><stop offset="0.542" stop-color="#959595"/><stop offset="0.677" stop-color="#9c9c9c"/><stop offset="1.000" stop-color="#a2a2a2"/></linearGradient><linearGradient id="h4" gradientUnits="userSpaceOnUse" x1="0" y1="324" x2="0" y2="761"><stop offset="0.000" stop-color="#9d9d9d"/><stop offset="0.174" stop-color="#9e9e9e"/><stop offset="0.357" stop-color="#9d9d9d"/><stop offset="0.540" stop-color="#9e9e9e"/><stop offset="0.677" stop-color="#a3a3a3"/><stop offset="1.000" stop-color="#a6a6a6"/></linearGradient><linearGradient id="h5" gradientUnits="userSpaceOnUse" x1="0" y1="347" x2="0" y2="758"><stop offset="0.000" stop-color="#a7a7a7"/><stop offset="0.324" stop-color="#a5a5a5"/><stop offset="0.518" stop-color="#a5a5a5"/><stop offset="0.664" stop-color="#a8a8a8"/><stop offset="1.000" stop-color="#a9a9a9"/></linearGradient></defs>
<polygon points="521.0,521.0 511.0,533.5 514.0,548.0 521.0,566.0 529.0,587.0 541.0,612.0 547.0,634.0 549.0,645.5 559.0,648.5 566.0,660.0 545.0,600.0 530.0,555.0" fill="#676767"/>
<polygon points="877.2,521.0 887.2,533.5 884.2,548.0 877.2,566.0 869.2,587.0 857.2,612.0 851.2,634.0 849.2,645.5 839.2,648.5 832.2,660.0 853.2,600.0 868.2,555.0" fill="#676767"/>
<polygon points="521.0,521.5 511.0,533.5 526.0,534.5" fill="#9e9e9e"/>
<polygon points="877.2,521.5 887.2,533.5 872.2,534.5" fill="#9e9e9e"/>
<polygon points="511.0,534.5 526.0,535.5 531.0,560.0 522.0,566.0 514.0,548.0" fill="#747474"/>
<polygon points="887.2,534.5 872.2,535.5 867.2,560.0 876.2,566.0 884.2,548.0" fill="#747474"/>
<polygon points="542.0,616.0 546.0,632.0 549.0,645.5 557.0,646.5 551.0,628.0" fill="#8f8f8f"/>
<polygon points="856.2,616.0 852.2,632.0 849.2,645.5 841.2,646.5 847.2,628.0" fill="#8f8f8f"/>
<polygon points="549.0,645.0 559.0,648.5 563.0,656.0 553.0,649.5" fill="#111"/>
<polygon points="849.2,645.0 839.2,648.5 835.2,656.0 845.2,649.5" fill="#111"/>
<polygon points="563.0,662.0 573.0,683.5 585.0,704.5 600.0,727.5 614.0,743.0 630.0,757.5 645.0,768.5 660.0,778.0 680.0,786.0 699.3,790.5 699.3,770.0 620.0,730.0 592.0,700.0 570.0,660.0" fill="#0a0a0a"/>
<polygon points="835.2,662.0 825.2,683.5 813.2,704.5 798.2,727.5 784.2,743.0 768.2,757.5 753.2,768.5 738.2,778.0 718.2,786.0 698.9,790.5 698.9,770.0 778.2,730.0 806.2,700.0 828.2,660.0" fill="#0a0a0a"/>
<polygon points="699.3,294.0 678.0,295.0 660.0,297.0 636.0,302.0 614.0,310.0 588.0,322.0 566.0,340.0 552.0,357.0 540.0,376.0 529.0,397.0 521.2,416.0 516.0,436.0 514.2,462.0 515.0,488.0 518.5,510.0 523.8,532.0 532.0,560.0 544.0,599.0 553.0,628.0 560.0,646.0 572.0,678.0 584.0,700.0 601.0,727.0 616.0,742.0 630.0,754.0 645.0,765.0 660.0,774.0 680.0,779.0 699.3,781.5" fill="url(#h0)"/>
<polygon points="698.9,294.0 720.2,295.0 738.2,297.0 762.2,302.0 784.2,310.0 810.2,322.0 832.2,340.0 846.2,357.0 858.2,376.0 869.2,397.0 877.0,416.0 882.2,436.0 884.0,462.0 883.2,488.0 879.7,510.0 874.4,532.0 866.2,560.0 854.2,599.0 845.2,628.0 838.2,646.0 826.2,678.0 814.2,700.0 797.2,727.0 782.2,742.0 768.2,754.0 753.2,765.0 738.2,774.0 718.2,779.0 698.9,781.5" fill="url(#h0)"/>
<polygon points="699.3,302.0 678.6,302.6 661.2,304.2 637.9,308.7 616.6,316.2 591.4,327.4 570.2,344.3 557.1,360.7 545.7,379.3 535.2,399.9 528.0,418.3 523.3,437.1 521.9,462.1 523.0,487.3 526.3,508.4 531.5,529.9 539.7,557.7 551.6,596.6 560.1,625.6 566.5,643.5 577.5,675.6 588.3,697.5 605.5,723.6 620.3,737.4 634.3,748.5 649.3,758.6 663.2,766.1 681.7,769.9 699.3,771.5" fill="url(#h1)"/>
<polygon points="698.9,302.0 719.6,302.6 737.0,304.2 760.3,308.7 781.6,316.2 806.8,327.4 828.0,344.3 841.1,360.7 852.5,379.3 863.0,399.9 870.2,418.3 874.9,437.1 876.3,462.1 875.2,487.3 871.9,508.4 866.7,529.9 858.5,557.7 846.6,596.6 838.1,625.6 831.7,643.5 820.7,675.6 809.9,697.5 792.7,723.6 777.9,737.4 763.9,748.5 748.9,758.6 735.0,766.1 716.5,769.9 698.9,771.5" fill="url(#h1)"/>
<polygon points="699.3,312.0 679.3,312.4 662.8,313.8 640.5,317.9 620.2,324.8 596.2,335.1 576.5,350.8 565.2,366.5 555.2,384.8 546.1,405.0 540.3,422.4 537.2,439.2 536.9,462.4 538.9,485.9 542.3,505.2 547.5,525.6 555.7,552.9 567.9,591.6 574.8,620.6 579.6,638.5 588.0,670.9 596.0,692.9 612.4,718.3 626.0,731.3 639.3,742.2 653.3,752.6 665.5,760.3 682.7,764.6 699.3,767.0" fill="url(#h2)"/>
<polygon points="698.9,312.0 718.9,312.4 735.4,313.8 757.7,317.9 778.0,324.8 802.0,335.1 821.7,350.8 833.0,366.5 843.0,384.8 852.1,405.0 857.9,422.4 861.0,439.2 861.3,462.4 859.3,485.9 855.9,505.2 850.7,525.6 842.5,552.9 830.3,591.6 823.4,620.6 818.6,638.5 810.2,670.9 802.2,692.9 785.8,718.3 772.2,731.3 758.9,742.2 744.9,752.6 732.7,760.3 715.5,764.6 698.9,767.0" fill="url(#h2)"/>
<polygon points="699.3,320.0 680.0,320.8 664.2,322.3 642.9,326.5 623.7,333.4 601.3,343.3 583.4,357.9 574.2,373.1 565.9,390.9 558.2,410.7 554.1,427.0 552.7,441.6 553.8,462.8 556.8,484.3 559.2,501.9 563.4,521.3 570.8,548.3 582.2,587.2 589.0,615.8 593.7,633.2 599.0,666.0 603.8,688.3 619.0,713.3 631.2,725.7 643.7,736.8 656.7,747.4 667.5,755.2 683.6,760.0 699.3,763.0" fill="url(#h3)"/>
<polygon points="698.9,320.0 718.2,320.8 734.0,322.3 755.3,326.5 774.5,333.4 796.9,343.3 814.8,357.9 824.0,373.1 832.3,390.9 840.0,410.7 844.1,427.0 845.5,441.6 844.4,462.8 841.4,484.3 839.0,501.9 834.8,521.3 827.4,548.3 816.0,587.2 809.2,615.8 804.5,633.2 799.2,666.0 794.4,688.3 779.2,713.3 767.0,725.7 754.5,736.8 741.5,747.4 730.7,755.2 714.6,760.0 698.9,763.0" fill="url(#h3)"/>
<polygon points="699.3,324.0 680.3,325.6 665.2,327.9 644.7,332.8 626.6,340.2 605.7,350.3 589.7,364.4 582.6,379.1 575.9,396.7 569.9,416.2 567.5,431.4 568.0,443.9 570.5,463.1 574.8,482.6 575.4,498.6 577.9,517.4 583.7,544.4 593.7,583.7 597.5,612.9 599.3,631.1 603.5,664.0 607.2,686.2 621.9,711.0 633.5,723.2 645.5,734.4 658.2,745.1 668.4,752.9 684.1,757.8 699.3,761.0" fill="url(#h4)"/>
<polygon points="698.9,324.0 717.9,325.6 733.0,327.9 753.5,332.8 771.6,340.2 792.5,350.3 808.5,364.4 815.6,379.1 822.3,396.7 828.3,416.2 830.7,431.4 830.2,443.9 827.7,463.1 823.4,482.6 822.8,498.6 820.3,517.4 814.5,544.4 804.5,583.7 800.7,612.9 798.9,631.1 794.7,664.0 791.0,686.2 776.3,711.0 764.7,723.2 752.7,734.4 740.0,745.1 729.8,752.9 714.1,757.8 698.9,761.0" fill="url(#h4)"/>
<polygon points="699.3,347.0 682.0,346.8 668.4,347.3 649.6,350.1 632.8,355.2 613.4,362.7 598.8,373.7 594.5,387.7 590.2,404.8 586.3,423.9 586.4,437.7 589.3,447.2 593.8,463.5 599.7,480.4 596.2,494.5 594.8,512.8 596.9,540.4 603.2,580.7 604.6,610.4 603.9,629.3 608.1,662.0 611.5,683.7 625.7,708.2 636.4,720.0 648.0,731.3 660.3,742.0 669.7,749.6 684.7,754.6 699.3,758.0" fill="url(#h5)"/>
<polygon points="698.9,347.0 716.2,346.8 729.8,347.3 748.6,350.1 765.4,355.2 784.8,362.7 799.4,373.7 803.7,387.7 808.0,404.8 811.9,423.9 811.8,437.7 808.9,447.2 804.4,463.5 798.5,480.4 802.0,494.5 803.4,512.8 801.3,540.4 795.0,580.7 793.6,610.4 794.3,629.3 790.1,662.0 786.7,683.7 772.5,708.2 761.8,720.0 750.2,731.3 737.9,742.0 728.5,749.6 713.5,754.6 698.9,758.0" fill="url(#h5)"/>
<polygon points="699.3,372.0 683.8,370.4 672.1,369.3 655.3,370.3 640.4,373.4 623.2,378.3 610.6,385.9 609.2,398.3 606.9,414.5 604.8,432.6 606.9,444.6 611.8,450.6 617.6,464.0 624.6,478.2 616.1,490.5 609.7,508.8 607.2,537.3 609.0,578.9 609.3,608.8 607.7,627.9 611.8,660.3 615.0,681.7 628.8,705.8 639.2,717.1 650.5,728.1 662.4,738.9 671.0,746.4 685.3,751.4 699.3,755.0" fill="#ababab"/>
<polygon points="698.9,372.0 714.4,370.4 726.1,369.3 742.9,370.3 757.8,373.4 775.0,378.3 787.6,385.9 789.0,398.3 791.3,414.5 793.4,432.6 791.3,444.6 786.4,450.6 780.6,464.0 773.6,478.2 782.1,490.5 788.5,508.8 791.0,537.3 789.2,578.9 788.9,608.8 790.5,627.9 786.4,660.3 783.2,681.7 769.4,705.8 759.0,717.1 747.7,728.1 735.8,738.9 727.2,746.4 712.9,751.4 698.9,755.0" fill="#ababab"/>
<polygon points="699.3,294.0 678.0,295.0 678.6,302.6 699.3,302.0" fill="#000" fill-opacity="0.03"/>
<polygon points="698.9,294.0 720.2,295.0 719.6,302.6 698.9,302.0" fill="#000" fill-opacity="0.03"/>
<polygon points="678.0,295.0 660.0,297.0 661.2,304.2 678.6,302.6" fill="#fff" fill-opacity="0.025"/>
<polygon points="720.2,295.0 738.2,297.0 737.0,304.2 719.6,302.6" fill="#fff" fill-opacity="0.025"/>
<polygon points="660.0,297.0 636.0,302.0 637.9,308.7 661.2,304.2" fill="#fff" fill-opacity="0.02"/>
<polygon points="738.2,297.0 762.2,302.0 760.3,308.7 737.0,304.2" fill="#fff" fill-opacity="0.02"/>
<polygon points="636.0,302.0 614.0,310.0 616.6,316.2 637.9,308.7" fill="#fff" fill-opacity="0.012"/>
<polygon points="762.2,302.0 784.2,310.0 781.6,316.2 760.3,308.7" fill="#fff" fill-opacity="0.012"/>
<polygon points="588.0,322.0 566.0,340.0 570.2,344.3 591.4,327.4" fill="#000" fill-opacity="0.02"/>
<polygon points="810.2,322.0 832.2,340.0 828.0,344.3 806.8,327.4" fill="#000" fill-opacity="0.02"/>
<polygon points="566.0,340.0 552.0,357.0 557.1,360.7 570.2,344.3" fill="#000" fill-opacity="0.025"/>
<polygon points="832.2,340.0 846.2,357.0 841.1,360.7 828.0,344.3" fill="#000" fill-opacity="0.025"/>
<polygon points="552.0,357.0 540.0,376.0 545.7,379.3 557.1,360.7" fill="#fff" fill-opacity="0.015"/>
<polygon points="846.2,357.0 858.2,376.0 852.5,379.3 841.1,360.7" fill="#fff" fill-opacity="0.015"/>
<polygon points="521.2,416.0 516.0,436.0 523.3,437.1 528.0,418.3" fill="#000" fill-opacity="0.03"/>
<polygon points="877.0,416.0 882.2,436.0 874.9,437.1 870.2,418.3" fill="#000" fill-opacity="0.03"/>
<polygon points="516.0,436.0 514.2,462.0 521.9,462.1 523.3,437.1" fill="#fff" fill-opacity="0.025"/>
<polygon points="882.2,436.0 884.0,462.0 876.3,462.1 874.9,437.1" fill="#fff" fill-opacity="0.025"/>
<polygon points="514.2,462.0 515.0,488.0 523.0,487.3 521.9,462.1" fill="#fff" fill-opacity="0.02"/>
<polygon points="884.0,462.0 883.2,488.0 875.2,487.3 876.3,462.1" fill="#fff" fill-opacity="0.02"/>
<polygon points="515.0,488.0 518.5,510.0 526.3,508.4 523.0,487.3" fill="#fff" fill-opacity="0.012"/>
<polygon points="883.2,488.0 879.7,510.0 871.9,508.4 875.2,487.3" fill="#fff" fill-opacity="0.012"/>
<polygon points="523.8,532.0 532.0,560.0 539.7,557.7 531.5,529.9" fill="#000" fill-opacity="0.02"/>
<polygon points="874.4,532.0 866.2,560.0 858.5,557.7 866.7,529.9" fill="#000" fill-opacity="0.02"/>
<polygon points="532.0,560.0 544.0,599.0 551.6,596.6 539.7,557.7" fill="#000" fill-opacity="0.025"/>
<polygon points="866.2,560.0 854.2,599.0 846.6,596.6 858.5,557.7" fill="#000" fill-opacity="0.025"/>
<polygon points="544.0,599.0 553.0,628.0 560.1,625.6 551.6,596.6" fill="#fff" fill-opacity="0.015"/>
<polygon points="854.2,599.0 845.2,628.0 838.1,625.6 846.6,596.6" fill="#fff" fill-opacity="0.015"/>
<polygon points="572.0,678.0 584.0,700.0 588.3,697.5 577.5,675.6" fill="#000" fill-opacity="0.03"/>
<polygon points="826.2,678.0 814.2,700.0 809.9,697.5 820.7,675.6" fill="#000" fill-opacity="0.03"/>
<polygon points="584.0,700.0 601.0,727.0 605.5,723.6 588.3,697.5" fill="#fff" fill-opacity="0.025"/>
<polygon points="814.2,700.0 797.2,727.0 792.7,723.6 809.9,697.5" fill="#fff" fill-opacity="0.025"/>
<polygon points="601.0,727.0 616.0,742.0 620.3,737.4 605.5,723.6" fill="#fff" fill-opacity="0.02"/>
<polygon points="797.2,727.0 782.2,742.0 777.9,737.4 792.7,723.6" fill="#fff" fill-opacity="0.02"/>
<polygon points="616.0,742.0 630.0,754.0 634.3,748.5 620.3,737.4" fill="#fff" fill-opacity="0.012"/>
<polygon points="782.2,742.0 768.2,754.0 763.9,748.5 777.9,737.4" fill="#fff" fill-opacity="0.012"/>
<polygon points="645.0,765.0 660.0,774.0 663.2,766.1 649.3,758.6" fill="#000" fill-opacity="0.02"/>
<polygon points="753.2,765.0 738.2,774.0 735.0,766.1 748.9,758.6" fill="#000" fill-opacity="0.02"/>
<polygon points="660.0,774.0 680.0,779.0 681.7,769.9 663.2,766.1" fill="#000" fill-opacity="0.025"/>
<polygon points="738.2,774.0 718.2,779.0 716.5,769.9 735.0,766.1" fill="#000" fill-opacity="0.025"/>
<polygon points="680.0,779.0 699.3,781.5 699.3,771.5 681.7,769.9" fill="#fff" fill-opacity="0.015"/>
<polygon points="718.2,779.0 698.9,781.5 698.9,771.5 716.5,769.9" fill="#fff" fill-opacity="0.015"/>
<polygon points="678.6,302.6 661.2,304.2 662.8,313.8 679.3,312.4" fill="#fff" fill-opacity="0.015"/>
<polygon points="719.6,302.6 737.0,304.2 735.4,313.8 718.9,312.4" fill="#fff" fill-opacity="0.015"/>
<polygon points="661.2,304.2 637.9,308.7 640.5,317.9 662.8,313.8" fill="#000" fill-opacity="0.02"/>
<polygon points="737.0,304.2 760.3,308.7 757.7,317.9 735.4,313.8" fill="#000" fill-opacity="0.02"/>
<polygon points="637.9,308.7 616.6,316.2 620.2,324.8 640.5,317.9" fill="#fff" fill-opacity="0.012"/>
<polygon points="760.3,308.7 781.6,316.2 778.0,324.8 757.7,317.9" fill="#fff" fill-opacity="0.012"/>
<polygon points="616.6,316.2 591.4,327.4 596.2,335.1 620.2,324.8" fill="#fff" fill-opacity="0.012"/>
<polygon points="781.6,316.2 806.8,327.4 802.0,335.1 778.0,324.8" fill="#fff" fill-opacity="0.012"/>
<polygon points="591.4,327.4 570.2,344.3 576.5,350.8 596.2,335.1" fill="#fff" fill-opacity="0.025"/>
<polygon points="806.8,327.4 828.0,344.3 821.7,350.8 802.0,335.1" fill="#fff" fill-opacity="0.025"/>
<polygon points="557.1,360.7 545.7,379.3 555.2,384.8 565.2,366.5" fill="#fff" fill-opacity="0.015"/>
<polygon points="841.1,360.7 852.5,379.3 843.0,384.8 833.0,366.5" fill="#fff" fill-opacity="0.015"/>
<polygon points="545.7,379.3 535.2,399.9 546.1,405.0 555.2,384.8" fill="#fff" fill-opacity="0.015"/>
<polygon points="852.5,379.3 863.0,399.9 852.1,405.0 843.0,384.8" fill="#fff" fill-opacity="0.015"/>
<polygon points="535.2,399.9 528.0,418.3 540.3,422.4 546.1,405.0" fill="#000" fill-opacity="0.02"/>
<polygon points="863.0,399.9 870.2,418.3 857.9,422.4 852.1,405.0" fill="#000" fill-opacity="0.02"/>
<polygon points="528.0,418.3 523.3,437.1 537.2,439.2 540.3,422.4" fill="#fff" fill-opacity="0.012"/>
<polygon points="870.2,418.3 874.9,437.1 861.0,439.2 857.9,422.4" fill="#fff" fill-opacity="0.012"/>
<polygon points="523.3,437.1 521.9,462.1 536.9,462.4 537.2,439.2" fill="#fff" fill-opacity="0.025"/>
<polygon points="874.9,437.1 876.3,462.1 861.3,462.4 861.0,439.2" fill="#fff" fill-opacity="0.025"/>
<polygon points="521.9,462.1 523.0,487.3 538.9,485.9 536.9,462.4" fill="#fff" fill-opacity="0.025"/>
<polygon points="876.3,462.1 875.2,487.3 859.3,485.9 861.3,462.4" fill="#fff" fill-opacity="0.025"/>
<polygon points="526.3,508.4 531.5,529.9 547.5,525.6 542.3,505.2" fill="#fff" fill-opacity="0.015"/>
<polygon points="871.9,508.4 866.7,529.9 850.7,525.6 855.9,505.2" fill="#fff" fill-opacity="0.015"/>
<polygon points="531.5,529.9 539.7,557.7 555.7,552.9 547.5,525.6" fill="#000" fill-opacity="0.02"/>
<polygon points="866.7,529.9 858.5,557.7 842.5,552.9 850.7,525.6" fill="#000" fill-opacity="0.02"/>
<polygon points="539.7,557.7 551.6,596.6 567.9,591.6 555.7,552.9" fill="#000" fill-opacity="0.02"/>
<polygon points="858.5,557.7 846.6,596.6 830.3,591.6 842.5,552.9" fill="#000" fill-opacity="0.02"/>
<polygon points="551.6,596.6 560.1,625.6 574.8,620.6 567.9,591.6" fill="#fff" fill-opacity="0.012"/>
<polygon points="846.6,596.6 838.1,625.6 823.4,620.6 830.3,591.6" fill="#fff" fill-opacity="0.012"/>
<polygon points="560.1,625.6 566.5,643.5 579.6,638.5 574.8,620.6" fill="#fff" fill-opacity="0.025"/>
<polygon points="838.1,625.6 831.7,643.5 818.6,638.5 823.4,620.6" fill="#fff" fill-opacity="0.025"/>
<polygon points="588.3,697.5 605.5,723.6 612.4,718.3 596.0,692.9" fill="#fff" fill-opacity="0.015"/>
<polygon points="809.9,697.5 792.7,723.6 785.8,718.3 802.2,692.9" fill="#fff" fill-opacity="0.015"/>
<polygon points="605.5,723.6 620.3,737.4 626.0,731.3 612.4,718.3" fill="#000" fill-opacity="0.02"/>
<polygon points="792.7,723.6 777.9,737.4 772.2,731.3 785.8,718.3" fill="#000" fill-opacity="0.02"/>
<polygon points="620.3,737.4 634.3,748.5 639.3,742.2 626.0,731.3" fill="#fff" fill-opacity="0.012"/>
<polygon points="777.9,737.4 763.9,748.5 758.9,742.2 772.2,731.3" fill="#fff" fill-opacity="0.012"/>
<polygon points="634.3,748.5 649.3,758.6 653.3,752.6 639.3,742.2" fill="#fff" fill-opacity="0.012"/>
<polygon points="763.9,748.5 748.9,758.6 744.9,752.6 758.9,742.2" fill="#fff" fill-opacity="0.012"/>
<polygon points="649.3,758.6 663.2,766.1 665.5,760.3 653.3,752.6" fill="#fff" fill-opacity="0.025"/>
<polygon points="748.9,758.6 735.0,766.1 732.7,760.3 744.9,752.6" fill="#fff" fill-opacity="0.025"/>
<polygon points="681.7,769.9 699.3,771.5 699.3,767.0 682.7,764.6" fill="#fff" fill-opacity="0.015"/>
<polygon points="716.5,769.9 698.9,771.5 698.9,767.0 715.5,764.6" fill="#fff" fill-opacity="0.015"/>
<polygon points="679.3,312.4 662.8,313.8 664.2,322.3 680.0,320.8" fill="#fff" fill-opacity="0.012"/>
<polygon points="718.9,312.4 735.4,313.8 734.0,322.3 718.2,320.8" fill="#fff" fill-opacity="0.012"/>
<polygon points="662.8,313.8 640.5,317.9 642.9,326.5 664.2,322.3" fill="#000" fill-opacity="0.03"/>
<polygon points="735.4,313.8 757.7,317.9 755.3,326.5 734.0,322.3" fill="#000" fill-opacity="0.03"/>
<polygon points="640.5,317.9 620.2,324.8 623.7,333.4 642.9,326.5" fill="#000" fill-opacity="0.02"/>
<polygon points="757.7,317.9 778.0,324.8 774.5,333.4 755.3,326.5" fill="#000" fill-opacity="0.02"/>
<polygon points="620.2,324.8 596.2,335.1 601.3,343.3 623.7,333.4" fill="#fff" fill-opacity="0.02"/>
<polygon points="778.0,324.8 802.0,335.1 796.9,343.3 774.5,333.4" fill="#fff" fill-opacity="0.02"/>
<polygon points="596.2,335.1 576.5,350.8 583.4,357.9 601.3,343.3" fill="#fff" fill-opacity="0.015"/>
<polygon points="802.0,335.1 821.7,350.8 814.8,357.9 796.9,343.3" fill="#fff" fill-opacity="0.015"/>
<polygon points="555.2,384.8 546.1,405.0 558.2,410.7 565.9,390.9" fill="#000" fill-opacity="0.025"/>
<polygon points="843.0,384.8 852.1,405.0 840.0,410.7 832.3,390.9" fill="#000" fill-opacity="0.025"/>
<polygon points="546.1,405.0 540.3,422.4 554.1,427.0 558.2,410.7" fill="#fff" fill-opacity="0.025"/>
<polygon points="852.1,405.0 857.9,422.4 844.1,427.0 840.0,410.7" fill="#fff" fill-opacity="0.025"/>
<polygon points="537.2,439.2 536.9,462.4 553.8,462.8 552.7,441.6" fill="#fff" fill-opacity="0.012"/>
<polygon points="861.0,439.2 861.3,462.4 844.4,462.8 845.5,441.6" fill="#fff" fill-opacity="0.012"/>
<polygon points="536.9,462.4 538.9,485.9 556.8,484.3 553.8,462.8" fill="#000" fill-opacity="0.03"/>
<polygon points="861.3,462.4 859.3,485.9 841.4,484.3 844.4,462.8" fill="#000" fill-opacity="0.03"/>
<polygon points="538.9,485.9 542.3,505.2 559.2,501.9 556.8,484.3" fill="#000" fill-opacity="0.02"/>
<polygon points="859.3,485.9 855.9,505.2 839.0,501.9 841.4,484.3" fill="#000" fill-opacity="0.02"/>
<polygon points="542.3,505.2 547.5,525.6 563.4,521.3 559.2,501.9" fill="#fff" fill-opacity="0.02"/>
<polygon points="855.9,505.2 850.7,525.6 834.8,521.3 839.0,501.9" fill="#fff" fill-opacity="0.02"/>
<polygon points="547.5,525.6 555.7,552.9 570.8,548.3 563.4,521.3" fill="#fff" fill-opacity="0.015"/>
<polygon points="850.7,525.6 842.5,552.9 827.4,548.3 834.8,521.3" fill="#fff" fill-opacity="0.015"/>
<polygon points="574.8,620.6 579.6,638.5 593.7,633.2 589.0,615.8" fill="#000" fill-opacity="0.025"/>
<polygon points="823.4,620.6 818.6,638.5 804.5,633.2 809.2,615.8" fill="#000" fill-opacity="0.025"/>
<polygon points="579.6,638.5 588.0,670.9 599.0,666.0 593.7,633.2" fill="#fff" fill-opacity="0.025"/>
<polygon points="818.6,638.5 810.2,670.9 799.2,666.0 804.5,633.2" fill="#fff" fill-opacity="0.025"/>
<polygon points="596.0,692.9 612.4,718.3 619.0,713.3 603.8,688.3" fill="#fff" fill-opacity="0.012"/>
<polygon points="802.2,692.9 785.8,718.3 779.2,713.3 794.4,688.3" fill="#fff" fill-opacity="0.012"/>
<polygon points="612.4,718.3 626.0,731.3 631.2,725.7 619.0,713.3" fill="#000" fill-opacity="0.03"/>
<polygon points="785.8,718.3 772.2,731.3 767.0,725.7 779.2,713.3" fill="#000" fill-opacity="0.03"/>
<polygon points="626.0,731.3 639.3,742.2 643.7,736.8 631.2,725.7" fill="#000" fill-opacity="0.02"/>
<polygon points="772.2,731.3 758.9,742.2 754.5,736.8 767.0,725.7" fill="#000" fill-opacity="0.02"/>
<polygon points="639.3,742.2 653.3,752.6 656.7,747.4 643.7,736.8" fill="#fff" fill-opacity="0.02"/>
<polygon points="758.9,742.2 744.9,752.6 741.5,747.4 754.5,736.8" fill="#fff" fill-opacity="0.02"/>
<polygon points="653.3,752.6 665.5,760.3 667.5,755.2 656.7,747.4" fill="#fff" fill-opacity="0.015"/>
<polygon points="744.9,752.6 732.7,760.3 730.7,755.2 741.5,747.4" fill="#fff" fill-opacity="0.015"/>
<polygon points="699.3,320.0 680.0,320.8 680.3,325.6 699.3,324.0" fill="#fff" fill-opacity="0.015"/>
<polygon points="698.9,320.0 718.2,320.8 717.9,325.6 698.9,324.0" fill="#fff" fill-opacity="0.015"/>
<polygon points="664.2,322.3 642.9,326.5 644.7,332.8 665.2,327.9" fill="#fff" fill-opacity="0.012"/>
<polygon points="734.0,322.3 755.3,326.5 753.5,332.8 733.0,327.9" fill="#fff" fill-opacity="0.012"/>
<polygon points="642.9,326.5 623.7,333.4 626.6,340.2 644.7,332.8" fill="#fff" fill-opacity="0.015"/>
<polygon points="755.3,326.5 774.5,333.4 771.6,340.2 753.5,332.8" fill="#fff" fill-opacity="0.015"/>
<polygon points="623.7,333.4 601.3,343.3 605.7,350.3 626.6,340.2" fill="#fff" fill-opacity="0.025"/>
<polygon points="774.5,333.4 796.9,343.3 792.5,350.3 771.6,340.2" fill="#fff" fill-opacity="0.025"/>
<polygon points="601.3,343.3 583.4,357.9 589.7,364.4 605.7,350.3" fill="#fff" fill-opacity="0.012"/>
<polygon points="796.9,343.3 814.8,357.9 808.5,364.4 792.5,350.3" fill="#fff" fill-opacity="0.012"/>
<polygon points="583.4,357.9 574.2,373.1 582.6,379.1 589.7,364.4" fill="#fff" fill-opacity="0.015"/>
<polygon points="814.8,357.9 824.0,373.1 815.6,379.1 808.5,364.4" fill="#fff" fill-opacity="0.015"/>
<polygon points="574.2,373.1 565.9,390.9 575.9,396.7 582.6,379.1" fill="#fff" fill-opacity="0.025"/>
<polygon points="824.0,373.1 832.3,390.9 822.3,396.7 815.6,379.1" fill="#fff" fill-opacity="0.025"/>
<polygon points="565.9,390.9 558.2,410.7 569.9,416.2 575.9,396.7" fill="#000" fill-opacity="0.02"/>
<polygon points="832.3,390.9 840.0,410.7 828.3,416.2 822.3,396.7" fill="#000" fill-opacity="0.02"/>
<polygon points="558.2,410.7 554.1,427.0 567.5,431.4 569.9,416.2" fill="#fff" fill-opacity="0.015"/>
<polygon points="840.0,410.7 844.1,427.0 830.7,431.4 828.3,416.2" fill="#fff" fill-opacity="0.015"/>
<polygon points="554.1,427.0 552.7,441.6 568.0,443.9 567.5,431.4" fill="#fff" fill-opacity="0.025"/>
<polygon points="844.1,427.0 845.5,441.6 830.2,443.9 830.7,431.4" fill="#fff" fill-opacity="0.025"/>
<polygon points="552.7,441.6 553.8,462.8 570.5,463.1 568.0,443.9" fill="#000" fill-opacity="0.02"/>
<polygon points="845.5,441.6 844.4,462.8 827.7,463.1 830.2,443.9" fill="#000" fill-opacity="0.02"/>
<polygon points="556.8,484.3 559.2,501.9 575.4,498.6 574.8,482.6" fill="#fff" fill-opacity="0.025"/>
<polygon points="841.4,484.3 839.0,501.9 822.8,498.6 823.4,482.6" fill="#fff" fill-opacity="0.025"/>
<polygon points="559.2,501.9 563.4,521.3 577.9,517.4 575.4,498.6" fill="#000" fill-opacity="0.02"/>
<polygon points="839.0,501.9 834.8,521.3 820.3,517.4 822.8,498.6" fill="#000" fill-opacity="0.02"/>
<polygon points="570.8,548.3 582.2,587.2 593.7,583.7 583.7,544.4" fill="#fff" fill-opacity="0.012"/>
<polygon points="827.4,548.3 816.0,587.2 804.5,583.7 814.5,544.4" fill="#fff" fill-opacity="0.012"/>
<polygon points="582.2,587.2 589.0,615.8 597.5,612.9 593.7,583.7" fill="#000" fill-opacity="0.02"/>
<polygon points="816.0,587.2 809.2,615.8 800.7,612.9 804.5,583.7" fill="#000" fill-opacity="0.02"/>
<polygon points="593.7,633.2 599.0,666.0 603.5,664.0 599.3,631.1" fill="#fff" fill-opacity="0.012"/>
<polygon points="804.5,633.2 799.2,666.0 794.7,664.0 798.9,631.1" fill="#fff" fill-opacity="0.012"/>
<polygon points="599.0,666.0 603.8,688.3 607.2,686.2 603.5,664.0" fill="#fff" fill-opacity="0.015"/>
<polygon points="799.2,666.0 794.4,688.3 791.0,686.2 794.7,664.0" fill="#fff" fill-opacity="0.015"/>
<polygon points="619.0,713.3 631.2,725.7 633.5,723.2 621.9,711.0" fill="#fff" fill-opacity="0.012"/>
<polygon points="779.2,713.3 767.0,725.7 764.7,723.2 776.3,711.0" fill="#fff" fill-opacity="0.012"/>
<polygon points="631.2,725.7 643.7,736.8 645.5,734.4 633.5,723.2" fill="#fff" fill-opacity="0.015"/>
<polygon points="767.0,725.7 754.5,736.8 752.7,734.4 764.7,723.2" fill="#fff" fill-opacity="0.015"/>
<polygon points="643.7,736.8 656.7,747.4 658.2,745.1 645.5,734.4" fill="#fff" fill-opacity="0.025"/>
<polygon points="754.5,736.8 741.5,747.4 740.0,745.1 752.7,734.4" fill="#fff" fill-opacity="0.025"/>
<polygon points="656.7,747.4 667.5,755.2 668.4,752.9 658.2,745.1" fill="#fff" fill-opacity="0.012"/>
<polygon points="741.5,747.4 730.7,755.2 729.8,752.9 740.0,745.1" fill="#fff" fill-opacity="0.012"/>
<polygon points="667.5,755.2 683.6,760.0 684.1,757.8 668.4,752.9" fill="#fff" fill-opacity="0.015"/>
<polygon points="730.7,755.2 714.6,760.0 714.1,757.8 729.8,752.9" fill="#fff" fill-opacity="0.015"/>
<polygon points="683.6,760.0 699.3,763.0 699.3,761.0 684.1,757.8" fill="#fff" fill-opacity="0.025"/>
<polygon points="714.6,760.0 698.9,763.0 698.9,761.0 714.1,757.8" fill="#fff" fill-opacity="0.025"/>
<polygon points="699.3,324.0 680.3,325.6 682.0,346.8 699.3,347.0" fill="#000" fill-opacity="0.025"/>
<polygon points="698.9,324.0 717.9,325.6 716.2,346.8 698.9,347.0" fill="#000" fill-opacity="0.025"/>
<polygon points="680.3,325.6 665.2,327.9 668.4,347.3 682.0,346.8" fill="#fff" fill-opacity="0.015"/>
<polygon points="717.9,325.6 733.0,327.9 729.8,347.3 716.2,346.8" fill="#fff" fill-opacity="0.015"/>
<polygon points="626.6,340.2 605.7,350.3 613.4,362.7 632.8,355.2" fill="#000" fill-opacity="0.03"/>
<polygon points="771.6,340.2 792.5,350.3 784.8,362.7 765.4,355.2" fill="#000" fill-opacity="0.03"/>
<polygon points="605.7,350.3 589.7,364.4 598.8,373.7 613.4,362.7" fill="#fff" fill-opacity="0.025"/>
<polygon points="792.5,350.3 808.5,364.4 799.4,373.7 784.8,362.7" fill="#fff" fill-opacity="0.025"/>
<polygon points="589.7,364.4 582.6,379.1 594.5,387.7 598.8,373.7" fill="#fff" fill-opacity="0.02"/>
<polygon points="808.5,364.4 815.6,379.1 803.7,387.7 799.4,373.7" fill="#fff" fill-opacity="0.02"/>
<polygon points="582.6,379.1 575.9,396.7 590.2,404.8 594.5,387.7" fill="#fff" fill-opacity="0.012"/>
<polygon points="815.6,379.1 822.3,396.7 808.0,404.8 803.7,387.7" fill="#fff" fill-opacity="0.012"/>
<polygon points="569.9,416.2 567.5,431.4 586.4,437.7 586.3,423.9" fill="#000" fill-opacity="0.02"/>
<polygon points="828.3,416.2 830.7,431.4 811.8,437.7 811.9,423.9" fill="#000" fill-opacity="0.02"/>
<polygon points="567.5,431.4 568.0,443.9 589.3,447.2 586.4,437.7" fill="#000" fill-opacity="0.025"/>
<polygon points="830.7,431.4 830.2,443.9 808.9,447.2 811.8,437.7" fill="#000" fill-opacity="0.025"/>
<polygon points="568.0,443.9 570.5,463.1 593.8,463.5 589.3,447.2" fill="#fff" fill-opacity="0.015"/>
<polygon points="830.2,443.9 827.7,463.1 804.4,463.5 808.9,447.2" fill="#fff" fill-opacity="0.015"/>
<polygon points="575.4,498.6 577.9,517.4 594.8,512.8 596.2,494.5" fill="#000" fill-opacity="0.03"/>
<polygon points="822.8,498.6 820.3,517.4 803.4,512.8 802.0,494.5" fill="#000" fill-opacity="0.03"/>
<polygon points="577.9,517.4 583.7,544.4 596.9,540.4 594.8,512.8" fill="#fff" fill-opacity="0.025"/>
<polygon points="820.3,517.4 814.5,544.4 801.3,540.4 803.4,512.8" fill="#fff" fill-opacity="0.025"/>
<polygon points="583.7,544.4 593.7,583.7 603.2,580.7 596.9,540.4" fill="#fff" fill-opacity="0.02"/>
<polygon points="814.5,544.4 804.5,583.7 795.0,580.7 801.3,540.4" fill="#fff" fill-opacity="0.02"/>
<polygon points="593.7,583.7 597.5,612.9 604.6,610.4 603.2,580.7" fill="#fff" fill-opacity="0.012"/>
<polygon points="804.5,583.7 800.7,612.9 793.6,610.4 795.0,580.7" fill="#fff" fill-opacity="0.012"/>
<polygon points="599.3,631.1 603.5,664.0 608.1,662.0 603.9,629.3" fill="#000" fill-opacity="0.02"/>
<polygon points="798.9,631.1 794.7,664.0 790.1,662.0 794.3,629.3" fill="#000" fill-opacity="0.02"/>
<polygon points="603.5,664.0 607.2,686.2 611.5,683.7 608.1,662.0" fill="#000" fill-opacity="0.025"/>
<polygon points="794.7,664.0 791.0,686.2 786.7,683.7 790.1,662.0" fill="#000" fill-opacity="0.025"/>
<polygon points="607.2,686.2 621.9,711.0 625.7,708.2 611.5,683.7" fill="#fff" fill-opacity="0.015"/>
<polygon points="791.0,686.2 776.3,711.0 772.5,708.2 786.7,683.7" fill="#fff" fill-opacity="0.015"/>
<polygon points="645.5,734.4 658.2,745.1 660.3,742.0 648.0,731.3" fill="#000" fill-opacity="0.03"/>
<polygon points="752.7,734.4 740.0,745.1 737.9,742.0 750.2,731.3" fill="#000" fill-opacity="0.03"/>
<polygon points="658.2,745.1 668.4,752.9 669.7,749.6 660.3,742.0" fill="#fff" fill-opacity="0.025"/>
<polygon points="740.0,745.1 729.8,752.9 728.5,749.6 737.9,742.0" fill="#fff" fill-opacity="0.025"/>
<polygon points="668.4,752.9 684.1,757.8 684.7,754.6 669.7,749.6" fill="#fff" fill-opacity="0.02"/>
<polygon points="729.8,752.9 714.1,757.8 713.5,754.6 728.5,749.6" fill="#fff" fill-opacity="0.02"/>
<polygon points="684.1,757.8 699.3,761.0 699.3,758.0 684.7,754.6" fill="#fff" fill-opacity="0.012"/>
<polygon points="714.1,757.8 698.9,761.0 698.9,758.0 713.5,754.6" fill="#fff" fill-opacity="0.012"/>
<polygon points="699.3,347.0 682.0,346.8 683.8,370.4 699.3,372.0" fill="#000" fill-opacity="0.02"/>
<polygon points="698.9,347.0 716.2,346.8 714.4,370.4 698.9,372.0" fill="#000" fill-opacity="0.02"/>
<polygon points="682.0,346.8 668.4,347.3 672.1,369.3 683.8,370.4" fill="#fff" fill-opacity="0.012"/>
<polygon points="716.2,346.8 729.8,347.3 726.1,369.3 714.4,370.4" fill="#fff" fill-opacity="0.012"/>
<polygon points="668.4,347.3 649.6,350.1 655.3,370.3 672.1,369.3" fill="#fff" fill-opacity="0.025"/>
<polygon points="729.8,347.3 748.6,350.1 742.9,370.3 726.1,369.3" fill="#fff" fill-opacity="0.025"/>
<polygon points="613.4,362.7 598.8,373.7 610.6,385.9 623.2,378.3" fill="#fff" fill-opacity="0.015"/>
<polygon points="784.8,362.7 799.4,373.7 787.6,385.9 775.0,378.3" fill="#fff" fill-opacity="0.015"/>
<polygon points="598.8,373.7 594.5,387.7 609.2,398.3 610.6,385.9" fill="#000" fill-opacity="0.02"/>
<polygon points="799.4,373.7 803.7,387.7 789.0,398.3 787.6,385.9" fill="#000" fill-opacity="0.02"/>
<polygon points="594.5,387.7 590.2,404.8 606.9,414.5 609.2,398.3" fill="#fff" fill-opacity="0.012"/>
<polygon points="803.7,387.7 808.0,404.8 791.3,414.5 789.0,398.3" fill="#fff" fill-opacity="0.012"/>
<polygon points="590.2,404.8 586.3,423.9 604.8,432.6 606.9,414.5" fill="#fff" fill-opacity="0.012"/>
<polygon points="808.0,404.8 811.9,423.9 793.4,432.6 791.3,414.5" fill="#fff" fill-opacity="0.012"/>
<polygon points="586.3,423.9 586.4,437.7 606.9,444.6 604.8,432.6" fill="#fff" fill-opacity="0.025"/>
<polygon points="811.9,423.9 811.8,437.7 791.3,444.6 793.4,432.6" fill="#fff" fill-opacity="0.025"/>
<polygon points="589.3,447.2 593.8,463.5 617.6,464.0 611.8,450.6" fill="#fff" fill-opacity="0.015"/>
<polygon points="808.9,447.2 804.4,463.5 780.6,464.0 786.4,450.6" fill="#fff" fill-opacity="0.015"/>
<polygon points="593.8,463.5 599.7,480.4 624.6,478.2 617.6,464.0" fill="#fff" fill-opacity="0.015"/>
<polygon points="804.4,463.5 798.5,480.4 773.6,478.2 780.6,464.0" fill="#fff" fill-opacity="0.015"/>
<polygon points="599.7,480.4 596.2,494.5 616.1,490.5 624.6,478.2" fill="#000" fill-opacity="0.02"/>
<polygon points="798.5,480.4 802.0,494.5 782.1,490.5 773.6,478.2" fill="#000" fill-opacity="0.02"/>
<polygon points="596.2,494.5 594.8,512.8 609.7,508.8 616.1,490.5" fill="#fff" fill-opacity="0.012"/>
<polygon points="802.0,494.5 803.4,512.8 788.5,508.8 782.1,490.5" fill="#fff" fill-opacity="0.012"/>
<polygon points="594.8,512.8 596.9,540.4 607.2,537.3 609.7,508.8" fill="#fff" fill-opacity="0.025"/>
<polygon points="803.4,512.8 801.3,540.4 791.0,537.3 788.5,508.8" fill="#fff" fill-opacity="0.025"/>
<polygon points="596.9,540.4 603.2,580.7 609.0,578.9 607.2,537.3" fill="#fff" fill-opacity="0.025"/>
<polygon points="801.3,540.4 795.0,580.7 789.2,578.9 791.0,537.3" fill="#fff" fill-opacity="0.025"/>
<polygon points="604.6,610.4 603.9,629.3 607.7,627.9 609.3,608.8" fill="#fff" fill-opacity="0.015"/>
<polygon points="793.6,610.4 794.3,629.3 790.5,627.9 788.9,608.8" fill="#fff" fill-opacity="0.015"/>
<polygon points="603.9,629.3 608.1,662.0 611.8,660.3 607.7,627.9" fill="#000" fill-opacity="0.02"/>
<polygon points="794.3,629.3 790.1,662.0 786.4,660.3 790.5,627.9" fill="#000" fill-opacity="0.02"/>
<polygon points="608.1,662.0 611.5,683.7 615.0,681.7 611.8,660.3" fill="#000" fill-opacity="0.02"/>
<polygon points="790.1,662.0 786.7,683.7 783.2,681.7 786.4,660.3" fill="#000" fill-opacity="0.02"/>
<polygon points="611.5,683.7 625.7,708.2 628.8,705.8 615.0,681.7" fill="#fff" fill-opacity="0.012"/>
<polygon points="786.7,683.7 772.5,708.2 769.4,705.8 783.2,681.7" fill="#fff" fill-opacity="0.012"/>
<polygon points="625.7,708.2 636.4,720.0 639.2,717.1 628.8,705.8" fill="#fff" fill-opacity="0.025"/>
<polygon points="772.5,708.2 761.8,720.0 759.0,717.1 769.4,705.8" fill="#fff" fill-opacity="0.025"/>
<polygon points="660.3,742.0 669.7,749.6 671.0,746.4 662.4,738.9" fill="#fff" fill-opacity="0.015"/>
<polygon points="737.9,742.0 728.5,749.6 727.2,746.4 735.8,738.9" fill="#fff" fill-opacity="0.015"/>
<polygon points="669.7,749.6 684.7,754.6 685.3,751.4 671.0,746.4" fill="#000" fill-opacity="0.02"/>
<polygon points="728.5,749.6 713.5,754.6 712.9,751.4 727.2,746.4" fill="#000" fill-opacity="0.02"/>
<polygon points="684.7,754.6 699.3,758.0 699.3,755.0 685.3,751.4" fill="#fff" fill-opacity="0.012"/>
<polygon points="713.5,754.6 698.9,758.0 698.9,755.0 712.9,751.4" fill="#fff" fill-opacity="0.012"/>
<polygon points="699.3,324.0 699.3,347.5 672.5,360.0 642.5,355.0 646.0,330.0 670.0,327.0" fill="#9d9d9d"/>
<polygon points="698.9,324.0 698.9,347.5 725.7,360.0 755.7,355.0 752.2,330.0 728.2,327.0" fill="#9d9d9d"/>
<polygon points="528.0,546.0 540.0,585.0 553.0,628.0 560.0,646.0 572.0,678.0 571.0,679.0 558.6,648.0 551.5,628.0 538.8,587.0 527.0,549.0" fill="#1a1a1a"/>
<polygon points="870.2,546.0 858.2,585.0 845.2,628.0 838.2,646.0 826.2,678.0 827.2,679.0 839.6,648.0 846.7,628.0 859.4,587.0 871.2,549.0" fill="#1a1a1a"/>
<polygon points="569.0,514.0 587.0,519.0 593.0,544.0 568.0,536.0" fill="#828282"/>
<polygon points="829.2,514.0 811.2,519.0 805.2,544.0 830.2,536.0" fill="#828282"/>
<polygon points="587.0,519.0 630.0,511.0 660.0,529.0 624.0,536.0 593.0,544.0" fill="#8e8e8e"/>
<polygon points="811.2,519.0 768.2,511.0 738.2,529.0 774.2,536.0 805.2,544.0" fill="#8e8e8e"/>
<polygon points="587.0,519.0 630.0,511.0 624.0,536.0 593.0,544.0" fill="#898989"/>
<polygon points="811.2,519.0 768.2,511.0 774.2,536.0 805.2,544.0" fill="#898989"/>
<polygon points="593.0,544.0 624.0,536.0 628.0,546.0 600.0,560.0 568.0,566.0 568.0,536.0" fill="#9c9c9c"/>
<polygon points="805.2,544.0 774.2,536.0 770.2,546.0 798.2,560.0 830.2,566.0 830.2,536.0" fill="#9c9c9c"/>
<polygon points="593.0,544.0 600.0,560.0 584.0,596.0 568.0,566.0" fill="#a0a0a0" fill-opacity="0.7"/>
<polygon points="805.2,544.0 798.2,560.0 814.2,596.0 830.2,566.0" fill="#a0a0a0" fill-opacity="0.7"/>
<polygon points="630.0,511.0 654.0,509.0 660.0,529.0" fill="#737373"/>
<polygon points="768.2,511.0 744.2,509.0 738.2,529.0" fill="#737373"/>
<polygon points="654.0,509.0 681.0,528.0 660.0,529.0" fill="#646464"/>
<polygon points="744.2,509.0 717.2,528.0 738.2,529.0" fill="#646464"/>
<polygon points="660.0,529.0 681.0,528.0 687.0,546.0 680.0,564.0 666.0,544.0" fill="#888888"/>
<polygon points="738.2,529.0 717.2,528.0 711.2,546.0 718.2,564.0 732.2,544.0" fill="#888888"/>
<polygon points="666.0,544.0 687.0,546.0 680.0,564.0" fill="#7f7f7f"/>
<polygon points="732.2,544.0 711.2,546.0 718.2,564.0" fill="#7f7f7f"/>
<polygon points="666.0,544.0 680.0,564.0 683.0,618.0 657.0,624.0 660.0,586.0" fill="#7c7c7c"/>
<polygon points="732.2,544.0 718.2,564.0 715.2,618.0 741.2,624.0 738.2,586.0" fill="#7c7c7c"/>
<polygon points="666.0,544.0 660.0,586.0 657.0,624.0 655.0,575.0" fill="#8e8e8e"/>
<polygon points="732.2,544.0 738.2,586.0 741.2,624.0 743.2,575.0" fill="#8e8e8e"/>
<polygon points="680.0,564.0 683.0,618.0 670.0,598.0" fill="#727272"/>
<polygon points="718.2,564.0 715.2,618.0 728.2,598.0" fill="#727272"/>
<polygon points="681.0,528.0 699.3,528.0 699.3,620.0 683.0,618.0 680.0,564.0 687.0,546.0" fill="#9c9c9c"/>
<polygon points="717.2,528.0 698.9,528.0 698.9,620.0 715.2,618.0 718.2,564.0 711.2,546.0" fill="#9c9c9c"/>
<polygon points="692.0,548.0 699.3,543.0 699.3,620.0 690.0,619.0" fill="#a3a3a3"/>
<polygon points="706.2,548.0 698.9,543.0 698.9,620.0 708.2,619.0" fill="#a3a3a3"/>
<polygon points="681.0,528.0 699.3,528.0 699.3,543.0 692.0,548.0 687.0,546.0" fill="#a2a2a2"/>
<polygon points="717.2,528.0 698.9,528.0 698.9,543.0 706.2,548.0 711.2,546.0" fill="#a2a2a2"/>
<polygon points="657.0,624.0 683.0,618.0 698.0,630.0 670.0,634.0" fill="#6c6c6c"/>
<polygon points="741.2,624.0 715.2,618.0 700.2,630.0 728.2,634.0" fill="#6c6c6c"/>
<polygon points="657.0,624.0 670.0,634.0 664.0,634.5" fill="#858585"/>
<polygon points="741.2,624.0 728.2,634.0 734.2,634.5" fill="#858585"/>
<polygon points="683.0,618.0 699.3,620.0 699.3,631.0" fill="#9a9a9a"/>
<polygon points="715.2,618.0 698.9,620.0 698.9,631.0" fill="#9a9a9a"/>
<polygon points="624.0,536.0 660.0,529.0 666.0,544.0 655.0,575.0 657.0,624.0 640.0,650.0 628.0,660.0 606.0,598.0 600.0,560.0 628.0,546.0" fill="#a8a8a8"/>
<polygon points="774.2,536.0 738.2,529.0 732.2,544.0 743.2,575.0 741.2,624.0 758.2,650.0 770.2,660.0 792.2,598.0 798.2,560.0 770.2,546.0" fill="#a8a8a8"/>
<polygon points="624.0,536.0 660.0,529.0 666.0,544.0 640.0,560.0 628.0,546.0" fill="#a1a1a1"/>
<polygon points="774.2,536.0 738.2,529.0 732.2,544.0 758.2,560.0 770.2,546.0" fill="#a1a1a1"/>
<polygon points="600.0,560.0 628.0,546.0 640.0,560.0 620.0,600.0 606.0,598.0" fill="#a4a4a4"/>
<polygon points="798.2,560.0 770.2,546.0 758.2,560.0 778.2,600.0 792.2,598.0" fill="#a4a4a4"/>
<path d="M670 634.4L686 633.5L692 632.5L699.3 631.7L706.6 632.5L712.6 633.5L728.6 634.4L712.6 635.3L706 636.4L699.3 637.3L692.6 636.4L686 635.3Z" fill="#050505"/>
<polygon points="657.0,624.0 664.0,634.5 662.0,668.0 640.0,650.0" fill="#a3a3a3"/>
<polygon points="741.2,624.0 734.2,634.5 736.2,668.0 758.2,650.0" fill="#a3a3a3"/>
<polygon points="664.0,634.5 699.3,637.0 699.3,668.0 662.0,668.0" fill="#a9a9a9"/>
<polygon points="734.2,634.5 698.9,637.0 698.9,668.0 736.2,668.0" fill="#a9a9a9"/>
<polygon points="625.0,662.0 662.0,668.0 682.0,684.0 664.0,700.0 628.0,690.0" fill="#9e9e9e" fill-opacity="0.8"/>
<polygon points="773.2,662.0 736.2,668.0 716.2,684.0 734.2,700.0 770.2,690.0" fill="#9e9e9e" fill-opacity="0.8"/>
<polygon points="662.0,668.0 699.3,668.0 699.3,690.0 682.0,684.0" fill="#a4a4a4"/>
<polygon points="736.2,668.0 698.9,668.0 698.9,690.0 716.2,684.0" fill="#a4a4a4"/>
<polygon points="664.0,700.0 682.0,684.0 699.3,690.0 699.3,748.0 672.0,735.0" fill="#a9a9a9" fill-opacity="0.9"/>
<polygon points="734.2,700.0 716.2,684.0 698.9,690.0 698.9,748.0 726.2,735.0" fill="#a9a9a9" fill-opacity="0.9"/>
<polygon points="673.8,761.0 699.3,756.5 699.3,768.0" fill="#9b9b9b"/>
<polygon points="724.5,761.0 698.9,756.5 698.9,768.0" fill="#9b9b9b"/>
</g>
<text x="323" y="193.2" font-size="9.3" fill="#ececec" textLength="25" lengthAdjust="spacingAndGlyphs" font-weight="bold">Verts:</text>
<text x="432" y="193.3" font-size="10" fill="#ececec" font-weight="bold" text-anchor="end">461</text>
<text x="494" y="193.3" font-size="10" fill="#ececec" font-weight="bold" text-anchor="middle">0</text>
<text x="557.5" y="193.3" font-size="10" fill="#ececec" font-weight="bold" text-anchor="middle">0</text>
<text x="323" y="212.7" font-size="9.3" fill="#ececec" textLength="28.4" lengthAdjust="spacingAndGlyphs" font-weight="bold">Edges:</text>
<text x="432" y="212.8" font-size="10" fill="#ececec" font-weight="bold" text-anchor="end">1377</text>
<text x="494" y="212.8" font-size="10" fill="#ececec" font-weight="bold" text-anchor="middle">0</text>
<text x="557.5" y="212.8" font-size="10" fill="#ececec" font-weight="bold" text-anchor="middle">0</text>
<text x="323" y="232.2" font-size="9.3" fill="#ececec" textLength="26.8" lengthAdjust="spacingAndGlyphs" font-weight="bold">Faces:</text>
<text x="432" y="232.3" font-size="10" fill="#ececec" font-weight="bold" text-anchor="end">918</text>
<text x="494" y="232.3" font-size="10" fill="#ececec" font-weight="bold" text-anchor="middle">0</text>
<text x="557.5" y="232.3" font-size="10" fill="#ececec" font-weight="bold" text-anchor="middle">0</text>
<text x="323" y="251.7" font-size="9.3" fill="#ececec" textLength="20" lengthAdjust="spacingAndGlyphs" font-weight="bold">Tris:</text>
<text x="432" y="251.8" font-size="10" fill="#ececec" font-weight="bold" text-anchor="end">918</text>
<text x="494" y="251.8" font-size="10" fill="#ececec" font-weight="bold" text-anchor="middle">0</text>
<text x="557.5" y="251.8" font-size="10" fill="#ececec" font-weight="bold" text-anchor="middle">0</text>
<text x="323" y="271.2" font-size="9.3" fill="#ececec" textLength="19" lengthAdjust="spacingAndGlyphs" font-weight="bold">UVs:</text>
<text x="432" y="271.3" font-size="10" fill="#ececec" font-weight="bold" text-anchor="end">0</text>
<text x="494" y="271.3" font-size="10" fill="#ececec" font-weight="bold" text-anchor="middle">0</text>
<text x="557.5" y="271.3" font-size="10" fill="#ececec" font-weight="bold" text-anchor="middle">0</text>
<text x="628" y="212.6" font-size="9.6" fill="#ececec" textLength="85" lengthAdjust="spacingAndGlyphs" font-weight="bold">Symmetry: Object X</text>
<text x="659" y="841.6" font-size="9.6" fill="#ececec" textLength="36" lengthAdjust="spacingAndGlyphs" font-weight="bold">front -Z</text>
<path d="M698.75 285C685 281 670 279 655.6 279.4C641 279.5 627 281 613.4 284.4C597 289 580 298 565 308.4C545 321 522 338 504 357C496 366 493 376 490 385C485 396 482 406 480.6 416C477 430 475.5 460 475 485C475.5 510 479 530 482 550.6C485 580 488.5 610 490.6 642.4C492.5 665 493 690 491.2 719C489.5 745 487 770 486.4 789.7" fill="none" stroke="#202062" stroke-width="1"/>
<path d="M696.75 283l4 4M700.75 283l-4 4" fill="none" stroke="#a33" stroke-width="0.7"/>
<path d="M611.4 282.4l4 4M615.4 282.4l-4 4" fill="none" stroke="#a33" stroke-width="0.7"/>
<path d="M502 355l4 4M506 355l-4 4" fill="none" stroke="#a33" stroke-width="0.7"/>
<path d="M473 483l4 4M477 483l-4 4" fill="none" stroke="#a33" stroke-width="0.7"/>
<path d="M488.6 640.4l4 4M492.6 640.4l-4 4" fill="none" stroke="#a33" stroke-width="0.7"/>
<path d="M483.5 786.8l6 6M489.5 786.8l-6 6" fill="none" stroke="#d8d83a" stroke-width="1"/>
<circle cx="487.2" cy="790.4" r="31" fill="none" stroke="#ececec" stroke-width="0.9"/>
<circle cx="487.2" cy="790.4" r="30" fill="none" stroke="#151515" stroke-width="1.1"/>
<circle cx="487.2" cy="790.4" r="29" fill="none" stroke="#ececec" stroke-width="0.9"/>
<path d="M486 790.5v15.5l3.6-3.3 2.6 6 2.6-1.1-2.6-5.9 4.9-0.2z" fill="#fff" stroke="#111" stroke-width="0.9"/>
<rect x="332.2" y="812" width="1.8" height="13.5" fill="#a8e0a0"/>
<rect x="331.2" y="819" width="1" height="4.5" fill="#1f3f9a"/>
<rect x="334" y="819" width="1" height="4.5" fill="#1f3f9a"/>
<path d="M334.500 825.200l11.500-1.200" fill="none" stroke="#c8352a" stroke-width="1.3"/>
<text x="330" y="808.5" font-size="9.5" fill="#62c552" font-weight="bold">y</text>
<text x="345" y="823.5" font-size="8" fill="#d8382c" font-weight="bold">x</text>
<rect x="1062" y="139" width="536" height="1" fill="#3a3a3a"/>
<rect x="1064" y="140" width="514" height="730" fill="#464646"/>
<text x="1075.2" y="176.5" font-size="12" fill="#dcdcdc" textLength="47.5" lengthAdjust="spacingAndGlyphs" stroke="#dcdcdc" stroke-width="0.3">Channels</text>
<text x="1137.5" y="176.5" font-size="12" fill="#dcdcdc" textLength="20" lengthAdjust="spacingAndGlyphs" stroke="#dcdcdc" stroke-width="0.3">Edit</text>
<text x="1172.5" y="176.5" font-size="12" fill="#dcdcdc" textLength="34.5" lengthAdjust="spacingAndGlyphs" stroke="#dcdcdc" stroke-width="0.3">Object</text>
<text x="1221" y="176.5" font-size="12" fill="#dcdcdc" textLength="28" lengthAdjust="spacingAndGlyphs" stroke="#dcdcdc" stroke-width="0.3">Show</text>
<text x="1069.3" y="195.8" font-size="12" fill="#dcdcdc" textLength="65.5" lengthAdjust="spacingAndGlyphs" stroke="#dcdcdc" stroke-width="0.3">curveShape1</text>
<rect x="1068.2" y="215" width="507.5" height="437" fill="#2b2b2b"/>
<rect x="1235" y="655" width="1" height="1" fill="#777"/>
<rect x="1237" y="655" width="1" height="1" fill="#777"/>
<rect x="1239" y="655" width="1" height="1" fill="#777"/>
<rect x="1241" y="655" width="1" height="1" fill="#777"/>
<rect x="1243" y="655" width="1" height="1" fill="#777"/>
<rect x="1245" y="655" width="1" height="1" fill="#777"/>
<rect x="1247" y="655" width="1" height="1" fill="#777"/>
<rect x="1249" y="655" width="1" height="1" fill="#777"/>
<rect x="1251" y="655" width="1" height="1" fill="#777"/>
<rect x="1253" y="655" width="1" height="1" fill="#777"/>
<rect x="1255" y="655" width="1" height="1" fill="#777"/>
<rect x="1257" y="655" width="1" height="1" fill="#777"/>
<rect x="1259" y="655" width="1" height="1" fill="#777"/>
<rect x="1261" y="655" width="1" height="1" fill="#777"/>
<rect x="1263" y="655" width="1" height="1" fill="#777"/>
<rect x="1265" y="655" width="1" height="1" fill="#777"/>
<rect x="1267" y="655" width="1" height="1" fill="#777"/>
<rect x="1269" y="655" width="1" height="1" fill="#777"/>
<rect x="1271" y="655" width="1" height="1" fill="#777"/>
<rect x="1273" y="655" width="1" height="1" fill="#777"/>
<rect x="1275" y="655" width="1" height="1" fill="#777"/>
<rect x="1277" y="655" width="1" height="1" fill="#777"/>
<rect x="1279" y="655" width="1" height="1" fill="#777"/>
<rect x="1281" y="655" width="1" height="1" fill="#777"/>
<rect x="1283" y="655" width="1" height="1" fill="#777"/>
<rect x="1285" y="655" width="1" height="1" fill="#777"/>
<rect x="1287" y="655" width="1" height="1" fill="#777"/>
<rect x="1289" y="655" width="1" height="1" fill="#777"/>
<rect x="1291" y="655" width="1" height="1" fill="#777"/>
<rect x="1293" y="655" width="1" height="1" fill="#777"/>
<rect x="1295" y="655" width="1" height="1" fill="#777"/>
<rect x="1297" y="655" width="1" height="1" fill="#777"/>
<rect x="1299" y="655" width="1" height="1" fill="#777"/>
<rect x="1301" y="655" width="1" height="1" fill="#777"/>
<rect x="1303" y="655" width="1" height="1" fill="#777"/>
<rect x="1305" y="655" width="1" height="1" fill="#777"/>
<rect x="1307" y="655" width="1" height="1" fill="#777"/>
<rect x="1309" y="655" width="1" height="1" fill="#777"/>
<rect x="1311" y="655" width="1" height="1" fill="#777"/>
<rect x="1313" y="655" width="1" height="1" fill="#777"/>
<rect x="1315" y="655" width="1" height="1" fill="#777"/>
<rect x="1317" y="655" width="1" height="1" fill="#777"/>
<rect x="1319" y="655" width="1" height="1" fill="#777"/>
<rect x="1321" y="655" width="1" height="1" fill="#777"/>
<rect x="1323" y="655" width="1" height="1" fill="#777"/>
<rect x="1325" y="655" width="1" height="1" fill="#777"/>
<rect x="1327" y="655" width="1" height="1" fill="#777"/>
<rect x="1329" y="655" width="1" height="1" fill="#777"/>
<rect x="1331" y="655" width="1" height="1" fill="#777"/>
<rect x="1333" y="655" width="1" height="1" fill="#777"/>
<rect x="1335" y="655" width="1" height="1" fill="#777"/>
<rect x="1337" y="655" width="1" height="1" fill="#777"/>
<rect x="1339" y="655" width="1" height="1" fill="#777"/>
<rect x="1341" y="655" width="1" height="1" fill="#777"/>
<rect x="1343" y="655" width="1" height="1" fill="#777"/>
<rect x="1345" y="655" width="1" height="1" fill="#777"/>
<rect x="1347" y="655" width="1" height="1" fill="#777"/>
<rect x="1349" y="655" width="1" height="1" fill="#777"/>
<rect x="1351" y="655" width="1" height="1" fill="#777"/>
<rect x="1353" y="655" width="1" height="1" fill="#777"/>
<rect x="1355" y="655" width="1" height="1" fill="#777"/>
<rect x="1357" y="655" width="1" height="1" fill="#777"/>
<rect x="1359" y="655" width="1" height="1" fill="#777"/>
<rect x="1361" y="655" width="1" height="1" fill="#777"/>
<rect x="1363" y="655" width="1" height="1" fill="#777"/>
<rect x="1365" y="655" width="1" height="1" fill="#777"/>
<rect x="1367" y="655" width="1" height="1" fill="#777"/>
<rect x="1369" y="655" width="1" height="1" fill="#777"/>
<rect x="1371" y="655" width="1" height="1" fill="#777"/>
<rect x="1373" y="655" width="1" height="1" fill="#777"/>
<rect x="1375" y="655" width="1" height="1" fill="#777"/>
<rect x="1377" y="655" width="1" height="1" fill="#777"/>
<rect x="1379" y="655" width="1" height="1" fill="#777"/>
<rect x="1381" y="655" width="1" height="1" fill="#777"/>
<rect x="1383" y="655" width="1" height="1" fill="#777"/>
<rect x="1385" y="655" width="1" height="1" fill="#777"/>
<rect x="1387" y="655" width="1" height="1" fill="#777"/>
<rect x="1389" y="655" width="1" height="1" fill="#777"/>
<rect x="1391" y="655" width="1" height="1" fill="#777"/>
<rect x="1393" y="655" width="1" height="1" fill="#777"/>
<rect x="1395" y="655" width="1" height="1" fill="#777"/>
<rect x="1397" y="655" width="1" height="1" fill="#777"/>
<rect x="1399" y="655" width="1" height="1" fill="#777"/>
<rect x="1401" y="655" width="1" height="1" fill="#777"/>
<rect x="1403" y="655" width="1" height="1" fill="#777"/>
<rect x="1405" y="655" width="1" height="1" fill="#777"/>
<rect x="1407" y="655" width="1" height="1" fill="#777"/>
<rect x="1066" y="664" width="511" height="204" fill="#444" stroke="#4f4f4f" stroke-width="1"/>
<rect x="1068" y="666" width="507" height="16" fill="#3a3a3a"/>
<rect x="1068" y="666" width="60" height="16.5" fill="#464646"/>
<rect x="1129.5" y="667" width="48.5" height="15" fill="#404040"/>
<text x="1079.6" y="679.2" font-size="12" fill="#f0f0f0" textLength="38" lengthAdjust="spacingAndGlyphs" stroke="#f0f0f0" stroke-width="0.4">Display</text>
<text x="1140.4" y="679.2" font-size="12" fill="#a4a4a4" textLength="27" lengthAdjust="spacingAndGlyphs" stroke="#a4a4a4" stroke-width="0.2">Anim</text>
<rect x="1068" y="682.5" width="507" height="45" fill="#484848"/>
<text x="1078.4" y="697" font-size="12" fill="#dcdcdc" textLength="33" lengthAdjust="spacingAndGlyphs" stroke="#dcdcdc" stroke-width="0.3">Layers</text>
<text x="1126" y="697" font-size="12" fill="#dcdcdc" textLength="40.5" lengthAdjust="spacingAndGlyphs" stroke="#dcdcdc" stroke-width="0.3">Options</text>
<text x="1181.6" y="697" font-size="12" fill="#dcdcdc" textLength="24" lengthAdjust="spacingAndGlyphs" stroke="#dcdcdc" stroke-width="0.3">Help</text>
<rect x="1071.2" y="728" width="501" height="136" fill="#2b2b2b"/>
<rect x="1578" y="139" width="20" height="735" fill="#3c3c3c"/>
<rect x="1578" y="140" width="19" height="163" fill="#444"/>
<rect x="1578.5" y="305" width="18" height="102.5" fill="#3a3a3a"/>
<rect x="1578.5" y="304" width="18" height="1" fill="#4a4a4a"/>
<rect x="1578.5" y="410" width="18" height="109.5" fill="#3a3a3a"/>
<rect x="1578.5" y="409" width="18" height="1" fill="#4a4a4a"/>
<rect x="1578.5" y="522" width="18" height="89.5" fill="#3a3a3a"/>
<rect x="1578.5" y="521" width="18" height="1" fill="#4a4a4a"/>
<rect x="1578.5" y="614" width="18" height="47.5" fill="#3a3a3a"/>
<rect x="1578.5" y="613" width="18" height="1" fill="#4a4a4a"/>
<rect x="1578.5" y="664" width="18" height="85.5" fill="#3a3a3a"/>
<rect x="1578.5" y="663" width="18" height="1" fill="#4a4a4a"/>
<rect x="1578" y="750" width="20" height="124" fill="#444"/>
<text transform="translate(1582.8 153) rotate(90)" font-size="12" fill="#eeeeee" stroke="#eeeeee" stroke-width="0.3" textLength="138" lengthAdjust="spacingAndGlyphs">Channel Box / Layer Editor</text>
<text transform="translate(1582.8 317) rotate(90)" font-size="12" fill="#8a8a8a" stroke="#8a8a8a" stroke-width="0.15" textLength="78" lengthAdjust="spacingAndGlyphs">Attribute Editor</text>
<text transform="translate(1582.8 421) rotate(90)" font-size="12" fill="#8a8a8a" stroke="#8a8a8a" stroke-width="0.15" textLength="86" lengthAdjust="spacingAndGlyphs">Modeling Toolkit</text>
<text transform="translate(1582.8 533) rotate(90)" font-size="12" fill="#8a8a8a" stroke="#8a8a8a" stroke-width="0.15" textLength="67" lengthAdjust="spacingAndGlyphs">Tool Settings</text>
<text transform="translate(1582.8 624) rotate(90)" font-size="12" fill="#8a8a8a" stroke="#8a8a8a" stroke-width="0.15" textLength="26" lengthAdjust="spacingAndGlyphs">XGen</text>
<text transform="translate(1582.8 675) rotate(90)" font-size="12" fill="#8a8a8a" stroke="#8a8a8a" stroke-width="0.15" textLength="65" lengthAdjust="spacingAndGlyphs">Shape Editor</text>
<rect x="2" y="874" width="1596" height="1" fill="#3a3a3a"/>
<rect x="13" y="877.5" width="1293" height="30" fill="#2b2b2b"/>
<rect x="20" y="878" width="8.5" height="29" fill="#6e6e6e"/>
<text x="21.5" y="903" font-size="11" fill="#f0f0f0" font-weight="bold">1</text>
<rect x="61.3" y="891" width="1.5" height="16.5" fill="#b8b8b8"/>
<text x="63.6" y="887.4" font-size="11.5" fill="#8c8c8c" stroke="#8c8c8c" stroke-width="0.15">5</text>
<rect x="114.69" y="891" width="1.5" height="16.5" fill="#b8b8b8"/>
<text x="116.99" y="887.4" font-size="11.5" fill="#8c8c8c" stroke="#8c8c8c" stroke-width="0.15">10</text>
<rect x="168.08" y="891" width="1.5" height="16.5" fill="#b8b8b8"/>
<text x="170.38" y="887.4" font-size="11.5" fill="#8c8c8c" stroke="#8c8c8c" stroke-width="0.15">15</text>
<rect x="221.47000000000003" y="891" width="1.5" height="16.5" fill="#b8b8b8"/>
<text x="223.77" y="887.4" font-size="11.5" fill="#8c8c8c" stroke="#8c8c8c" stroke-width="0.15">20</text>
<rect x="274.86" y="891" width="1.5" height="16.5" fill="#b8b8b8"/>
<text x="277.16" y="887.4" font-size="11.5" fill="#8c8c8c" stroke="#8c8c8c" stroke-width="0.15">25</text>
<rect x="328.25" y="891" width="1.5" height="16.5" fill="#b8b8b8"/>
<text x="330.55" y="887.4" font-size="11.5" fill="#8c8c8c" stroke="#8c8c8c" stroke-width="0.15">30</text>
<rect x="381.64000000000004" y="891" width="1.5" height="16.5" fill="#b8b8b8"/>
<text x="383.94000000000005" y="887.4" font-size="11.5" fill="#8c8c8c" stroke="#8c8c8c" stroke-width="0.15">35</text>
<rect x="435.03000000000003" y="891" width="1.5" height="16.5" fill="#b8b8b8"/>
<text x="437.33000000000004" y="887.4" font-size="11.5" fill="#8c8c8c" stroke="#8c8c8c" stroke-width="0.15">40</text>
<rect x="488.42" y="891" width="1.5" height="16.5" fill="#b8b8b8"/>
<text x="490.72" y="887.4" font-size="11.5" fill="#8c8c8c" stroke="#8c8c8c" stroke-width="0.15">45</text>
<rect x="541.81" y="891" width="1.5" height="16.5" fill="#b8b8b8"/>
<text x="544.11" y="887.4" font-size="11.5" fill="#8c8c8c" stroke="#8c8c8c" stroke-width="0.15">50</text>
<rect x="595.1999999999999" y="891" width="1.5" height="16.5" fill="#b8b8b8"/>
<text x="597.5" y="887.4" font-size="11.5" fill="#8c8c8c" stroke="#8c8c8c" stroke-width="0.15">55</text>
<rect x="648.5899999999999" y="891" width="1.5" height="16.5" fill="#b8b8b8"/>
<text x="650.89" y="887.4" font-size="11.5" fill="#8c8c8c" stroke="#8c8c8c" stroke-width="0.15">60</text>
<rect x="701.98" y="891" width="1.5" height="16.5" fill="#b8b8b8"/>
<text x="704.2800000000001" y="887.4" font-size="11.5" fill="#8c8c8c" stroke="#8c8c8c" stroke-width="0.15">65</text>
<rect x="755.37" y="891" width="1.5" height="16.5" fill="#b8b8b8"/>
<text x="757.6700000000001" y="887.4" font-size="11.5" fill="#8c8c8c" stroke="#8c8c8c" stroke-width="0.15">70</text>
<rect x="808.76" y="891" width="1.5" height="16.5" fill="#b8b8b8"/>
<text x="811.0600000000001" y="887.4" font-size="11.5" fill="#8c8c8c" stroke="#8c8c8c" stroke-width="0.15">75</text>
<rect x="862.15" y="891" width="1.5" height="16.5" fill="#b8b8b8"/>
<text x="864.45" y="887.4" font-size="11.5" fill="#8c8c8c" stroke="#8c8c8c" stroke-width="0.15">80</text>
<rect x="915.54" y="891" width="1.5" height="16.5" fill="#b8b8b8"/>
<text x="917.84" y="887.4" font-size="11.5" fill="#8c8c8c" stroke="#8c8c8c" stroke-width="0.15">85</text>
<rect x="968.93" y="891" width="1.5" height="16.5" fill="#b8b8b8"/>
<text x="971.23" y="887.4" font-size="11.5" fill="#8c8c8c" stroke="#8c8c8c" stroke-width="0.15">90</text>
<rect x="1022.3199999999999" y="891" width="1.5" height="16.5" fill="#b8b8b8"/>
<text x="1024.62" y="887.4" font-size="11.5" fill="#8c8c8c" stroke="#8c8c8c" stroke-width="0.15">95</text>
<rect x="1075.7099999999998" y="891" width="1.5" height="16.5" fill="#b8b8b8"/>
<text x="1078.0099999999998" y="887.4" font-size="11.5" fill="#8c8c8c" stroke="#8c8c8c" stroke-width="0.15">100</text>
<rect x="1129.1" y="891" width="1.5" height="16.5" fill="#b8b8b8"/>
<text x="1131.3999999999999" y="887.4" font-size="11.5" fill="#8c8c8c" stroke="#8c8c8c" stroke-width="0.15">105</text>
<rect x="1182.49" y="891" width="1.5" height="16.5" fill="#b8b8b8"/>
<text x="1184.79" y="887.4" font-size="11.5" fill="#8c8c8c" stroke="#8c8c8c" stroke-width="0.15">110</text>
<rect x="1235.8799999999999" y="891" width="1.5" height="16.5" fill="#b8b8b8"/>
<text x="1238.1799999999998" y="887.4" font-size="11.5" fill="#8c8c8c" stroke="#8c8c8c" stroke-width="0.15">115</text>
<rect x="1289.27" y="891" width="1.5" height="16.5" fill="#b8b8b8"/>
<clipPath id="c120"><rect x="1280" y="870" width="26" height="30"/></clipPath><g clip-path="url(#c120)">
<text x="1291.57" y="887.4" font-size="11.5" fill="#8c8c8c" stroke="#8c8c8c" stroke-width="0.15">120</text>
</g>
<rect x="2.8" y="879" width="1" height="1" fill="#7a7a7a"/>
<rect x="5.4" y="879" width="1" height="1" fill="#7a7a7a"/>
<rect x="2.8" y="882" width="1" height="1" fill="#7a7a7a"/>
<rect x="5.4" y="882" width="1" height="1" fill="#7a7a7a"/>
<rect x="2.8" y="885" width="1" height="1" fill="#7a7a7a"/>
<rect x="5.4" y="885" width="1" height="1" fill="#7a7a7a"/>
<rect x="2.8" y="888" width="1" height="1" fill="#7a7a7a"/>
<rect x="5.4" y="888" width="1" height="1" fill="#7a7a7a"/>
<rect x="2.8" y="891" width="1" height="1" fill="#7a7a7a"/>
<rect x="5.4" y="891" width="1" height="1" fill="#7a7a7a"/>
<rect x="2.8" y="894" width="1" height="1" fill="#7a7a7a"/>
<rect x="5.4" y="894" width="1" height="1" fill="#7a7a7a"/>
<rect x="2.8" y="897" width="1" height="1" fill="#7a7a7a"/>
<rect x="5.4" y="897" width="1" height="1" fill="#7a7a7a"/>
<rect x="2.8" y="900" width="1" height="1" fill="#7a7a7a"/>
<rect x="5.4" y="900" width="1" height="1" fill="#7a7a7a"/>
<rect x="2.8" y="903" width="1" height="1" fill="#7a7a7a"/>
<rect x="5.4" y="903" width="1" height="1" fill="#7a7a7a"/>
<rect x="1315" y="884" width="84" height="17.5" fill="#2b2b2b" rx="1.5"/>
<text x="1320" y="896.6" font-size="11.5" fill="#e8e8e8" stroke="#e8e8e8" stroke-width="0.3">1</text>
<rect x="14" y="917.5" width="84" height="21.5" fill="#2b2b2b" rx="1.5"/>
<text x="19" y="932.5" font-size="11.5" fill="#e8e8e8" stroke="#e8e8e8" stroke-width="0.3">1</text>
<rect x="108" y="917.5" width="84" height="21.5" fill="#2b2b2b" rx="1.5"/>
<text x="113" y="932.5" font-size="11.5" fill="#e8e8e8" stroke="#e8e8e8" stroke-width="0.3">1</text>
<rect x="919.5" y="917.5" width="84" height="21.5" fill="#2b2b2b" rx="1.5"/>
<text x="924.5" y="932.5" font-size="11.5" fill="#e8e8e8" stroke="#e8e8e8" stroke-width="0.3">120</text>
<rect x="1013.5" y="917.5" width="84" height="21.5" fill="#2b2b2b" rx="1.5"/>
<text x="1018.5" y="932.5" font-size="11.5" fill="#e8e8e8" stroke="#e8e8e8" stroke-width="0.3">200</text>
<rect x="200" y="916.5" width="713" height="23.5" fill="#3d3d3d"/>
<rect x="203.5" y="919" width="433.5" height="18" fill="#6b6b6b" rx="3"/>
<rect x="207" y="922.5" width="11.5" height="11" fill="#9a9a9a" rx="2.5"/>
<rect x="620.5" y="922.5" width="11.5" height="11" fill="#9a9a9a" rx="2.5"/>
<text x="223.5" y="932.8" font-size="11.5" fill="#e8e8e8" stroke="#e8e8e8" stroke-width="0.3">1</text>
<text x="596.5" y="932.8" font-size="11.5" fill="#e8e8e8" textLength="20" lengthAdjust="spacingAndGlyphs" stroke="#e8e8e8" stroke-width="0.3">120</text>
<rect x="1103.5" y="918" width="1" height="21" fill="#686868"/>
<rect x="1102.8" y="923" width="2.4" height="10" fill="#8e8e8e" rx="1.2"/>
<rect x="1369.5" y="918" width="1" height="21" fill="#686868"/>
<rect x="1368.8" y="923" width="2.4" height="10" fill="#8e8e8e" rx="1.2"/>
<rect x="1524.5" y="918" width="1" height="21" fill="#686868"/>
<rect x="1523.8" y="923" width="2.4" height="10" fill="#8e8e8e" rx="1.2"/>
<rect x="1136" y="918" width="110" height="21" fill="#484848"/>
<rect x="1262" y="918" width="96" height="21" fill="#484848"/>
<path d="M1118.5 924.5h9l-4.5 5z" fill="none" stroke="#b0b0b0" stroke-width="1"/>
<path d="M1244.5 924.5h9l-4.5 5z" fill="none" stroke="#b0b0b0" stroke-width="1"/>
<text x="1140.5" y="932.5" font-size="12" fill="#dcdcdc" textLength="88" lengthAdjust="spacingAndGlyphs" stroke="#dcdcdc" stroke-width="0.3">No Character Set</text>
<text x="1266.5" y="932.5" font-size="12" fill="#dcdcdc" textLength="76" lengthAdjust="spacingAndGlyphs" stroke="#dcdcdc" stroke-width="0.3">No Anim Layer</text>
<rect x="1383" y="917.5" width="99" height="19" fill="#5d5d5d" rx="1.5"/>
<rect x="1463" y="918" width="0.8" height="18" fill="#4a4a4a"/>
<text x="1386.5" y="931.5" font-size="12" fill="#dcdcdc" textLength="33" lengthAdjust="spacingAndGlyphs" stroke="#dcdcdc" stroke-width="0.3">24 fps</text>
<path d="M1467 924h10l-5 5.5z" fill="#d0d0d0"/>
<rect x="1535" y="916" width="23.5" height="23.5" fill="#d33a3f"/>
<text x="15.5" y="964.6" font-size="12" fill="#efefef" textLength="35.5" lengthAdjust="spacingAndGlyphs" stroke="#efefef" stroke-width="0.35">Python</text>
<rect x="58" y="950.5" width="343" height="21" fill="#2b2b2b" rx="1.5"/>
<rect x="410" y="950.5" width="1152.5" height="21" fill="#2b2b2b" rx="1.5"/>
<rect x="405" y="954" width="1" height="1" fill="#777"/>
<rect x="405" y="957" width="1" height="1" fill="#777"/>
<rect x="405" y="960" width="1" height="1" fill="#777"/>
<rect x="405" y="963" width="1" height="1" fill="#777"/>
<rect x="405" y="966" width="1" height="1" fill="#777"/>
<rect x="2" y="975.5" width="1596" height="1" fill="#3c3c3c"/>
<text x="23" y="993.5" font-size="11" fill="#dcdcdc" textLength="538" lengthAdjust="spacingAndGlyphs" stroke="#dcdcdc" stroke-width="0.25">EP Curve Tool: Click in a window to add edit points. ENTER to complete the curve. Also MMB, INSERT, BACKSPACE.</text>
<rect x="2.8" y="916" width="1" height="1" fill="#7a7a7a"/>
<rect x="5.4" y="916" width="1" height="1" fill="#7a7a7a"/>
<rect x="2.8" y="919" width="1" height="1" fill="#7a7a7a"/>
<rect x="5.4" y="919" width="1" height="1" fill="#7a7a7a"/>
<rect x="2.8" y="922" width="1" height="1" fill="#7a7a7a"/>
<rect x="5.4" y="922" width="1" height="1" fill="#7a7a7a"/>
<rect x="2.8" y="925" width="1" height="1" fill="#7a7a7a"/>
<rect x="5.4" y="925" width="1" height="1" fill="#7a7a7a"/>
<rect x="2.8" y="928" width="1" height="1" fill="#7a7a7a"/>
<rect x="5.4" y="928" width="1" height="1" fill="#7a7a7a"/>
<rect x="2.8" y="931" width="1" height="1" fill="#7a7a7a"/>
<rect x="5.4" y="931" width="1" height="1" fill="#7a7a7a"/>
<rect x="2.8" y="934" width="1" height="1" fill="#7a7a7a"/>
<rect x="5.4" y="934" width="1" height="1" fill="#7a7a7a"/>
<rect x="2.8" y="937" width="1" height="1" fill="#7a7a7a"/>
<rect x="5.4" y="937" width="1" height="1" fill="#7a7a7a"/>
<rect x="2.8" y="950" width="1" height="1" fill="#7a7a7a"/>
<rect x="5.4" y="950" width="1" height="1" fill="#7a7a7a"/>
<rect x="2.8" y="953" width="1" height="1" fill="#7a7a7a"/>
<rect x="5.4" y="953" width="1" height="1" fill="#7a7a7a"/>
<rect x="2.8" y="956" width="1" height="1" fill="#7a7a7a"/>
<rect x="5.4" y="956" width="1" height="1" fill="#7a7a7a"/>
<rect x="2.8" y="959" width="1" height="1" fill="#7a7a7a"/>
<rect x="5.4" y="959" width="1" height="1" fill="#7a7a7a"/>
<rect x="2.8" y="962" width="1" height="1" fill="#7a7a7a"/>
<rect x="5.4" y="962" width="1" height="1" fill="#7a7a7a"/>
<rect x="2.8" y="965" width="1" height="1" fill="#7a7a7a"/>
<rect x="5.4" y="965" width="1" height="1" fill="#7a7a7a"/>
<rect x="2.8" y="968" width="1" height="1" fill="#7a7a7a"/>
<rect x="5.4" y="968" width="1" height="1" fill="#7a7a7a"/>
<rect x="2.8" y="971" width="1" height="1" fill="#7a7a7a"/>
<rect x="5.4" y="971" width="1" height="1" fill="#7a7a7a"/>
<rect x="2" y="911" width="1594" height="1" fill="#3c3c3c"/>
<rect x="2" y="943.5" width="1594" height="1" fill="#3c3c3c"/>
<rect x="0" y="0" width="1.6" height="1000" fill="#0c0c0c"/>
<rect x="1595.5" y="19.5" width="4.5" height="981" fill="#1c1c1c"/>
<rect x="1597" y="105" width="1.5" height="839" fill="#b4b4b4"/>
<path d="M136.8 51h6.4l5.6 5.2v10.3h-12z" fill="#cdcdcd"/>
<path d="M143.2 51v5.2h5.6z" fill="#9e9e9e"/>
<path d="M157 52.8h5l1.3 1.6h7v2.2h-10.6l-2.7 7.4z" fill="#bdbdbd"/>
<path d="M160.2 57.2h12.8l-2.6 8.4h-13.2z" fill="#cdcdcd"/>
<path d="M180 51.5h14v14h-12.2l-1.8-1.8z" fill="#cdcdcd"/>
<rect x="182.8" y="51.5" width="8.2" height="5.4" fill="#444"/>
<rect x="183.6" y="51.5" width="6.6" height="4.6" fill="#b5b5b5"/>
<rect x="183.6" y="59.6" width="7" height="4.6" fill="#444"/>
<rect x="187.2" y="60.4" width="2.4" height="3.2" fill="#cdcdcd"/>
<path d="M205.800 53.500v2h6.400a4.200 4.200 0 0 1 0 8.400h-3.600v-2.200h3.600a2 2 0 0 0 0-4h-6.400v2l-4.600-3.100z" fill="#cdcdcd"/>
<path d="M235.400 53.500v2h-6.400a4.200 4.200 0 0 0 0 8.400h3.600v-2.200h-3.600a2 2 0 0 1 0-4h6.400v2l4.600-3.100z" fill="#cdcdcd"/>
<rect x="251.6" y="48.6" width="1" height="19.8" fill="#686868"/>
<path d="M251.6 54.5l4 5-4 5z" fill="#8e8e8e"/>
<rect x="289" y="49.6" width="5.2" height="5.2" fill="#cdcdcd"/>
<rect x="289" y="59" width="5.2" height="5.2" fill="#cdcdcd"/>
<rect x="291" y="55" width="1.2" height="3.6" fill="#cdcdcd"/>
<path d="M295.5 52.5h4.5v6M297 55.5v5" fill="none" stroke="#4f9ea3" stroke-width="1.1"/>
<path d="M299 55.5v10.5l2.5 -2.3 1.9 4.2 2 -0.9 -1.9 -4.1 3.3 -0.2z" fill="#dcdcdc" stroke="#3a3a3a" stroke-width="0.7"/>
<rect x="316.6" y="49.4" width="10" height="10.2" fill="#5bbcc0" stroke="#12414f" stroke-width="1"/>
<circle cx="314.6" cy="60.2" r="4" fill="#d8d8d8" stroke="#12414f" stroke-width="0.9"/>
<path d="M314.6 60.2v-4.6h2.2v4.6z" fill="#5187ae"/>
<rect x="316.6" y="55.2" width="4.4" height="4.4" fill="#5bbcc0"/>
<path d="M321.6 55.8v10.5l2.5 -2.3 1.9 4.2 2 -0.9 -1.9 -4.1 3.3 -0.2z" fill="#e2e2e2" stroke="#12414f" stroke-width="0.7"/>
<rect x="335" y="50" width="4.6" height="4.2" fill="#d4cccc"/>
<rect x="335" y="55" width="4.6" height="4.2" fill="#d4cccc"/>
<rect x="340.4" y="50" width="4.6" height="4.2" fill="#d4cccc"/>
<rect x="340.4" y="55" width="4.6" height="4.2" fill="#d4cccc"/>
<path d="M340.5 56h3" fill="none" stroke="#4f9ea3" stroke-width="1.2"/>
<path d="M342.6 56v10.5l2.5 -2.3 1.9 4.2 2 -0.9 -1.9 -4.1 3.3 -0.2z" fill="#dcdcdc" stroke="#3a3a3a" stroke-width="0.7"/>
<path d="M378.2 58h6.4l-3.2 3.8z" fill="#a8a8a8"/>
<path d="M911.5 57.5h6.4l-3.2 3.8z" fill="#a8a8a8"/>
<path d="M773.5 57.5h6.4l-3.2 3.8z" fill="#a8a8a8"/>
<path d="M399.2 51.5v14M392.5 58.5h13.4" fill="none" stroke="#8fe3e6" stroke-width="1.3"/>
<path d="M425 52.5l-8.5 7.5 9 6.5" fill="none" stroke="#12414f" stroke-width="3"/>
<path d="M425 52.5l-8.5 7.5 9 6.5" fill="none" stroke="#5ec4c6" stroke-width="1.2"/>
<circle cx="425" cy="52.5" r="1.7" fill="#bfe9ea" stroke="#12414f" stroke-width="0.8"/>
<circle cx="416.8" cy="60" r="1.5" fill="#bfe9ea" stroke="#12414f" stroke-width="0.8"/>
<path d="M438.5 53.5h3.5c4 0 2 9.5 5.5 9.5h2.5" fill="none" stroke="#12414f" stroke-width="3.2"/>
<path d="M438.5 53.5h3.5c4 0 2 9.5 5.5 9.5h2.5" fill="none" stroke="#5ec4c6" stroke-width="1.4"/>
<rect x="436.7" y="51.8" width="3.8" height="3.8" fill="#5ec4c6" stroke="#12414f" stroke-width="0.9"/>
<rect x="447.6" y="61.4" width="3.8" height="3.8" fill="#bfe9ea" stroke="#12414f" stroke-width="0.9"/>
<path d="M466.4 50.5l7.8 8-7.8 8-7.8-8z" fill="#5ec4c6" stroke="#12414f" stroke-width="1"/>
<path d="M462.5 54.5l7.8 8M470.3 54.5l-7.8 8" fill="none" stroke="#12414f" stroke-width="0.9"/>
<rect x="483.5" y="53" width="11.5" height="10.5" fill="none" stroke="#12414f" stroke-width="2.6"/>
<rect x="483.5" y="53" width="11.5" height="10.5" fill="none" stroke="#79c9cb" stroke-width="1"/>
<rect x="485.5" y="55" width="7.5" height="6.5" fill="#5ec4c6"/>
<rect x="481.6" y="51.2" width="3.6" height="3.6" fill="#8fd8da" stroke="#12414f" stroke-width="0.8"/>
<rect x="493.2" y="51.2" width="3.6" height="3.6" fill="#8fd8da" stroke="#12414f" stroke-width="0.8"/>
<rect x="481.6" y="61.6" width="3.6" height="3.6" fill="#8fd8da" stroke="#12414f" stroke-width="0.8"/>
<rect x="493.2" y="61.6" width="3.6" height="3.6" fill="#8fd8da" stroke="#12414f" stroke-width="0.8"/>
<circle cx="507" cy="55" r="1.6" fill="#5ec4c6" stroke="#12414f" stroke-width="0.8"/>
<circle cx="511.5" cy="52.5" r="1.9" fill="#5ec4c6" stroke="#12414f" stroke-width="0.8"/>
<circle cx="515" cy="54.5" r="1.7" fill="#5ec4c6" stroke="#12414f" stroke-width="0.8"/>
<circle cx="510.5" cy="59" r="2.6" fill="#5ec4c6" stroke="#12414f" stroke-width="0.8"/>
<circle cx="516" cy="58.5" r="2" fill="#5ec4c6" stroke="#12414f" stroke-width="0.8"/>
<circle cx="506.5" cy="63" r="1.8" fill="#5ec4c6" stroke="#12414f" stroke-width="0.8"/>
<circle cx="511.5" cy="64.5" r="1.5" fill="#5ec4c6" stroke="#12414f" stroke-width="0.8"/>
<circle cx="515.5" cy="63.5" r="1.7" fill="#5ec4c6" stroke="#12414f" stroke-width="0.8"/>
<path d="M504 51.5l2 2M516.5 64l2.2 2" fill="none" stroke="#12414f" stroke-width="1"/>
<rect x="525.6" y="51.4" width="16" height="4" fill="#8fd8da" stroke="#12414f" stroke-width="0.8"/>
<path d="M526.6 51.4h2l1.5 2-1.5 2h-2l1.5-2z" fill="#12414f"/>
<path d="M530.6 51.4h2l1.5 2-1.5 2h-2l1.5-2z" fill="#12414f"/>
<path d="M534.6 51.4h2l1.5 2-1.5 2h-2l1.5-2z" fill="#12414f"/>
<path d="M538.6 51.4h2l1.5 2-1.5 2h-2l1.5-2z" fill="#12414f"/>
<rect x="525.6" y="56.6" width="16" height="8.6" fill="#5ec4c6" stroke="#12414f" stroke-width="0.8"/>
<circle cx="528.8" cy="63" r="3.6" fill="#5ec4c6" stroke="#12414f" stroke-width="1"/>
<path d="M552.8 55.2a3.3 3.3 0 1 1 5 2.8c-1.3 0.9-1.8 1.4-1.8 3.2" fill="none" stroke="#12414f" stroke-width="3.3"/>
<path d="M552.8 55.2a3.3 3.3 0 1 1 5 2.8c-1.3 0.9-1.8 1.4-1.8 3.2" fill="none" stroke="#5ec4c6" stroke-width="1.5"/>
<circle cx="556" cy="64.3" r="1.3" fill="#5ec4c6" stroke="#12414f" stroke-width="0.8"/>
<path d="M573.6 57.6h10.4v7.6h-10.4z" fill="#d4d4d4"/>
<path d="M575.7 57.6v-2.7a3.1 3.1 0 0 1 6.2 0v2.7" fill="none" stroke="#d4d4d4" stroke-width="1.8"/>
<rect x="578.3" y="59.8" width="1" height="2.6" fill="#444"/>
<rect x="598.4" y="51.8" width="7.8" height="8" fill="#cfcfcf"/>
<rect x="594.6" y="52.5" width="1.6" height="1.6" fill="#bdbdbd"/>
<rect x="594.6" y="55.5" width="1.6" height="1.6" fill="#bdbdbd"/>
<rect x="594.6" y="58.5" width="1.6" height="1.6" fill="#bdbdbd"/>
<rect x="594.6" y="61.5" width="1.6" height="1.6" fill="#bdbdbd"/>
<rect x="597.6" y="61.5" width="1.6" height="1.6" fill="#bdbdbd"/>
<rect x="600.6" y="61.5" width="1.6" height="1.6" fill="#bdbdbd"/>
<path d="M601.8 55.2v10.5l2.5 -2.3 1.9 4.2 2 -0.9 -1.9 -4.1 3.3 -0.2z" fill="#dcdcdc" stroke="#444" stroke-width="0.7"/>
<g transform="translate(643.6 56.2) rotate(-45) scale(1)"><path d="M-3.9 6.4V0A3.9 3.9 0 0 1 3.9 0V6.4" fill="none" stroke="#d2d2d2" stroke-width="2.3"/><path d="M-5.1 4.4h2.4M2.7 4.4h2.4" stroke="#444" stroke-width="0.7"/></g>
<g transform="translate(666 56.2) rotate(-45) scale(1)"><path d="M-3.9 6.4V0A3.9 3.9 0 0 1 3.9 0V6.4" fill="none" stroke="#d2d2d2" stroke-width="2.3"/><path d="M-5.1 4.4h2.4M2.7 4.4h2.4" stroke="#444" stroke-width="0.7"/></g>
<g transform="translate(688.6 56.2) rotate(-45) scale(1)"><path d="M-3.9 6.4V0A3.9 3.9 0 0 1 3.9 0V6.4" fill="none" stroke="#d2d2d2" stroke-width="2.3"/><path d="M-5.1 4.4h2.4M2.7 4.4h2.4" stroke="#444" stroke-width="0.7"/></g>
<g transform="translate(710.6 56.2) rotate(-45) scale(1)"><path d="M-3.9 6.4V0A3.9 3.9 0 0 1 3.9 0V6.4" fill="none" stroke="#d2d2d2" stroke-width="2.3"/><path d="M-5.1 4.4h2.4M2.7 4.4h2.4" stroke="#444" stroke-width="0.7"/></g>
<g transform="translate(733 56.2) rotate(-45) scale(1)"><path d="M-3.9 6.4V0A3.9 3.9 0 0 1 3.9 0V6.4" fill="none" stroke="#d2d2d2" stroke-width="2.3"/><path d="M-5.1 4.4h2.4M2.7 4.4h2.4" stroke="#444" stroke-width="0.7"/></g>
<g transform="translate(757.6 58.2) rotate(-45) scale(1.08)"><path d="M-3.9 6.4V0A3.9 3.9 0 0 1 3.9 0V6.4" fill="none" stroke="#d2d2d2" stroke-width="2.3"/><path d="M-5.1 4.4h2.4M2.7 4.4h2.4" stroke="#444" stroke-width="0.7"/></g>
<path d="M643.5 58.5v9M648.5 58.5v9M640.5 61h11M640.5 65.5h11" fill="none" stroke="#3fa7b0" stroke-width="1"/>
<path d="M663.5 66l1 1M667 63.5c3 0.6 6-1 7.4-4.6" fill="none" stroke="#3fa7b0" stroke-width="1"/>
<circle cx="694.8" cy="63.6" r="2.2" fill="#49b4b8"/>
<circle cx="718.8" cy="52" r="1.6" fill="none" stroke="#3fa7b0" stroke-width="1"/>
<circle cx="715.3" cy="62.2" r="1.6" fill="none" stroke="#3fa7b0" stroke-width="1"/>
<path d="M715.3 64.5v3M718 62.2h2.5" fill="none" stroke="#3fa7b0" stroke-width="1"/>
<path d="M731 60.5l6-4.5 5.5 5.5-6.5 5z" fill="none" stroke="#3fa7b0" stroke-width="0.9"/>
<path d="M734 58.3l5.6 5.4M736.5 63.5l3-2.4" fill="none" stroke="#3fa7b0" stroke-width="0.8"/>
<rect x="1050.6" y="52.6" width="13.2" height="12.2" fill="none" stroke="#d0d0d0" stroke-width="1.3"/>
<path d="M1047.6 54.8l6 3.7-6 3.7z" fill="#d8d8d8" stroke="#444" stroke-width="0.5"/>
<rect x="1072.6" y="52.6" width="13.2" height="12.2" fill="none" stroke="#d0d0d0" stroke-width="1.3"/>
<path d="M1082.4 54.8l6 3.7-6 3.7z" fill="#d8d8d8" stroke="#444" stroke-width="0.5"/>
<rect x="1090.8" y="47.8" width="21.4" height="21.2" fill="#5187ae"/>
<circle cx="1097.8" cy="54.6" r="4.4" fill="#ececec" stroke="#12414f" stroke-width="0.9"/>
<path d="M1098 52.3v2.8h2.4" fill="none" stroke="#c0392b" stroke-width="1.1"/>
<rect x="1103.4" y="56.5" width="5.2" height="1.6" fill="#cfe6ea"/>
<rect x="1103.4" y="60.5" width="5.2" height="1.6" fill="#cfe6ea"/>
<rect x="1103.4" y="64.5" width="5.2" height="1.6" fill="#cfe6ea"/>
<rect x="1097.5" y="60.5" width="1.8" height="1.6" fill="#cfe6ea"/>
<rect x="1097.5" y="64.4" width="1.8" height="1.6" fill="#cfe6ea"/>
<path d="M1137 51.0h16v4.2h-16z" fill="#cfcfcf"/>
<path d="M1138 51.0h2l1.6 2.1-1.6 2.1h-2l1.6-2.1z" fill="#444"/>
<path d="M1142 51.0h2l1.6 2.1-1.6 2.1h-2l1.6-2.1z" fill="#444"/>
<path d="M1146 51.0h2l1.6 2.1-1.6 2.1h-2l1.6-2.1z" fill="#444"/>
<path d="M1150 51.0h2l1.6 2.1-1.6 2.1h-2l1.6-2.1z" fill="#444"/>
<rect x="1137" y="56.5" width="16" height="9" fill="#cfcfcf"/>
<path d="M1139.5 61c1.8-3 9.2-3 11 0c-1.8 3-9.2 3-11 0z" fill="#cfcfcf" stroke="#333" stroke-width="0.9"/>
<circle cx="1145" cy="61" r="1.7" fill="#333"/>
<circle cx="1145.6" cy="60.4" r="0.6" fill="#cfcfcf"/>
<path d="M1160 51.0h16v4.2h-16z" fill="#cfcfcf"/>
<path d="M1161 51.0h2l1.6 2.1-1.6 2.1h-2l1.6-2.1z" fill="#444"/>
<path d="M1165 51.0h2l1.6 2.1-1.6 2.1h-2l1.6-2.1z" fill="#444"/>
<path d="M1169 51.0h2l1.6 2.1-1.6 2.1h-2l1.6-2.1z" fill="#444"/>
<path d="M1173 51.0h2l1.6 2.1-1.6 2.1h-2l1.6-2.1z" fill="#444"/>
<rect x="1160" y="56.5" width="16" height="9" fill="#cfcfcf"/>
<path d="M1182 51.0h16v4.2h-16z" fill="#cfcfcf"/>
<path d="M1183 51.0h2l1.6 2.1-1.6 2.1h-2l1.6-2.1z" fill="#444"/>
<path d="M1187 51.0h2l1.6 2.1-1.6 2.1h-2l1.6-2.1z" fill="#444"/>
<path d="M1191 51.0h2l1.6 2.1-1.6 2.1h-2l1.6-2.1z" fill="#444"/>
<path d="M1195 51.0h2l1.6 2.1-1.6 2.1h-2l1.6-2.1z" fill="#444"/>
<rect x="1182" y="56.5" width="16" height="9" fill="#cfcfcf"/>
<text x="1184" y="64.2" font-size="8" fill="#333" textLength="12" lengthAdjust="spacingAndGlyphs" font-weight="bold">IPR</text>
<path d="M1205 51.0h16v4.2h-16z" fill="#cfcfcf"/>
<path d="M1206 51.0h2l1.6 2.1-1.6 2.1h-2l1.6-2.1z" fill="#444"/>
<path d="M1210 51.0h2l1.6 2.1-1.6 2.1h-2l1.6-2.1z" fill="#444"/>
<path d="M1214 51.0h2l1.6 2.1-1.6 2.1h-2l1.6-2.1z" fill="#444"/>
<path d="M1218 51.0h2l1.6 2.1-1.6 2.1h-2l1.6-2.1z" fill="#444"/>
<rect x="1205" y="56.5" width="16" height="9" fill="#cfcfcf"/>
<circle cx="1217" cy="63.2" r="4.6" fill="#444"/>
<path d="M1219.32 63.20L1221.20 63.20M1218.64 64.84L1219.97 66.17M1217.00 65.52L1217.00 67.40M1215.36 64.84L1214.03 66.17M1214.68 63.20L1212.80 63.20M1215.36 61.56L1214.03 60.23M1217.00 60.88L1217.00 59.00M1218.64 61.56L1219.97 60.23" fill="none" stroke="#3fa7b0" stroke-width="1.7"/>
<circle cx="1217" cy="63.2" r="2.9" fill="#3fa7b0"/>
<circle cx="1217" cy="63.2" r="1.305" fill="#444"/>
<circle cx="1235.2" cy="58.4" r="8" fill="#45aab6" stroke="#2b7c88" stroke-width="0.8"/>
<circle cx="1236.2" cy="57.2" r="3.9" fill="#1f5f6b"/>
<circle cx="1236.2" cy="57.2" r="2.7" fill="#d9d2cf"/>
<path d="M1250 51.0h16v4.2h-16z" fill="#cfcfcf"/>
<path d="M1251 51.0h2l1.6 2.1-1.6 2.1h-2l1.6-2.1z" fill="#444"/>
<path d="M1255 51.0h2l1.6 2.1-1.6 2.1h-2l1.6-2.1z" fill="#444"/>
<path d="M1259 51.0h2l1.6 2.1-1.6 2.1h-2l1.6-2.1z" fill="#444"/>
<path d="M1263 51.0h2l1.6 2.1-1.6 2.1h-2l1.6-2.1z" fill="#444"/>
<rect x="1250" y="56.5" width="16" height="9" fill="#cfcfcf"/>
<path d="M1261 57.2l5.6 3-5.6 3-5.6-3z" fill="#4fb3bb" stroke="#444" stroke-width="0.6"/>
<path d="M1255.4 62.8l5.6 3 5.6-3" fill="none" stroke="#4fb3bb" stroke-width="1.3"/>
<path d="M1280.2 57.6l7-6.6 1.6 1.6-6.6 7z" fill="#d4d4d4"/>
<path d="M1277.6 58.4l2.8-1.2 2 2-1.8 2.6z" fill="#d4d4d4"/>
<circle cx="1283.6" cy="62.4" r="4.4" fill="#444"/>
<path d="M1285.84 62.40L1287.70 62.40M1285.18 63.98L1286.50 65.30M1283.60 64.64L1283.60 66.50M1282.02 63.98L1280.70 65.30M1281.36 62.40L1279.50 62.40M1282.02 60.82L1280.70 59.50M1283.60 60.16L1283.60 58.30M1285.18 60.82L1286.50 59.50" fill="none" stroke="#3fa7b0" stroke-width="1.7"/>
<circle cx="1283.6" cy="62.4" r="2.8" fill="#3fa7b0"/>
<circle cx="1283.6" cy="62.4" r="1.26" fill="#444"/>
<path d="M1272 58.5h2.6M1273.4 65l2.4-2.8" fill="none" stroke="#3fa7b0" stroke-width="1"/>
<rect x="1297" y="52.6" width="3.8" height="12.4" fill="#d2d2d2" rx="0.8"/>
<rect x="1304.4" y="52.6" width="3.8" height="12.4" fill="#d2d2d2" rx="0.8"/>
<rect x="1345.6" y="51.6" width="14" height="14" fill="none" stroke="#cfcfcf" stroke-width="1.2"/>
<path d="M1350.2 54.5h4.8M1350.2 62.8h4.8M1352.6 54.5v8.3" fill="none" stroke="#cfcfcf" stroke-width="1.1"/>
<circle cx="57.2" cy="114" r="10.8" fill="none" stroke="#5c9cc4" stroke-width="1.5"/>
<rect x="81.8" y="103.8" width="19.6" height="20" fill="none" stroke="#5c9cc4" stroke-width="1.6"/>
<path d="M116.5 105l11.5 3.5-3 10 10 5" fill="none" stroke="#5c9cc4" stroke-width="1" stroke-dasharray="2 1.6"/>
<rect x="114.4" y="102.9" width="4.2" height="4.2" fill="#444" stroke="#5c9cc4" stroke-width="1.1"/>
<rect x="125.9" y="106.4" width="4.2" height="4.2" fill="#444" stroke="#5c9cc4" stroke-width="1.1"/>
<rect x="122.9" y="116.4" width="4.2" height="4.2" fill="#444" stroke="#5c9cc4" stroke-width="1.1"/>
<rect x="132.9" y="121.4" width="4.2" height="4.2" fill="#444" stroke="#5c9cc4" stroke-width="1.1"/>
<path d="M156.5 103.2c8 3.5 5.5 8-1 12.5c-6 4.5-8 8.5-1.5 10.2" fill="none" stroke="#5c9cc4" stroke-width="1.6"/>
<path d="M157.2 124.4l11.6-12.6 3.6 3.4-11.8 12.4z" fill="#d6d6d6"/>
<path d="M155 127.6l2.2-3.2 3.4 3.2z" fill="#e8e8e8"/>
<path d="M169.6 110.9l1.5-1.6 3.6 3.4-1.5 1.6z" fill="#bcbcbc"/>
<path d="M186 110c-2.5 4-2.5 8 1.5 11M189 107c4-1.8 8-1.8 11.5-0.2" fill="none" stroke="#5c9cc4" stroke-width="1.2" stroke-dasharray="4 2"/>
<rect x="184.1" y="105.3" width="4.6" height="4.6" fill="#d9d9d9" stroke="#444" stroke-width="0.6"/>
<rect x="185.5" y="106.69999999999999" width="1.8" height="1.8" fill="#222"/>
<rect x="200.7" y="105.9" width="4.6" height="4.6" fill="#d9d9d9" stroke="#444" stroke-width="0.6"/>
<rect x="202.1" y="107.3" width="1.8" height="1.8" fill="#222"/>
<rect x="185.89999999999998" y="120.7" width="4.6" height="4.6" fill="#d9d9d9" stroke="#444" stroke-width="0.6"/>
<rect x="187.29999999999998" y="122.1" width="1.8" height="1.8" fill="#222"/>
<circle cx="195" cy="115.2" r="1.5" fill="#d6d6d6"/>
<path d="M216 110.5c3-7 8.5-9.5 11-2c2 6 3 12.5 5.5 15.5c3 3.5 6.5 0.5 8.5-5" fill="none" stroke="#5c9cc4" stroke-width="1.5"/>
<path d="M227.3 109l2.6 10.6" fill="none" stroke="#d6d6d6" stroke-width="1.3"/>
<path d="M250.5 110.5c3-7 8.5-9.5 11-2c2 6 3 12.5 5.5 15.5c3 3.5 6.5 0.5 8.5-5" fill="none" stroke="#5c9cc4" stroke-width="1.5"/>
<path d="M251 124.6l11.5-9.5 10-11.2 2.6 2.2-9 11.6z" fill="#d6d6d6"/>
<path d="M284.5 110.5c3-7 8.5-9.5 11-2c2 6 3 12.5 5.5 15.5c3 3.5 6.5 0.5 8.5-5" fill="none" stroke="#5c9cc4" stroke-width="1.5"/>
<rect x="293.8" y="111.8" width="4.8" height="4.8" fill="#d9d9d9" stroke="#444" stroke-width="0.6"/>
<rect x="295.3" y="113.3" width="1.8" height="1.8" fill="#222"/>
<path d="M319 110.5c3-7 8.5-9.5 11-2c2 6 3 12.5 5.5 15.5" fill="none" stroke="#5c9cc4" stroke-width="1.5"/>
<path d="M335.5 124c3 1.5 6.5-1.5 8-5.5" fill="none" stroke="#d6d6d6" stroke-width="1.3"/>
<path d="M334.5 115.6l5-5-2.3-2.2h7.3v7.3l-2.3-2.3-5 5z" fill="#d6d6d6"/>
<path d="M355.5 121c-1.5-9 7-17.5 18.5-13" fill="none" stroke="#5c9cc4" stroke-width="1.6"/>
<path d="M360.8 122.4c-2-6.5 4-12.6 11.4-10.2" fill="none" stroke="#d6d6d6" stroke-width="1.5"/>
<path d="M394 105c5 3 2 6-2 8.5c-5 3.5-5 6.5 2 10M404 106c6 4 2 7.5-1.5 10c-4 3-4 5.5 2 8" fill="none" stroke="#5c9cc4" stroke-width="1.3"/>
<rect x="391.7" y="102.2" width="4.6" height="4.6" fill="#444" stroke="#5c9cc4" stroke-width="1.1"/>
<rect x="391.7" y="111.9" width="4.6" height="4.6" fill="#444" stroke="#5c9cc4" stroke-width="1.1"/>
<rect x="391.7" y="121.2" width="4.6" height="4.6" fill="#444" stroke="#5c9cc4" stroke-width="1.1"/>
<rect x="402.7" y="102.5" width="4.6" height="4.6" fill="#d9d9d9" stroke="#444" stroke-width="0.6"/>
<rect x="404.1" y="103.89999999999999" width="1.8" height="1.8" fill="#222"/>
<rect x="402.7" y="121.10000000000001" width="4.6" height="4.6" fill="#d9d9d9" stroke="#444" stroke-width="0.6"/>
<rect x="404.1" y="122.5" width="1.8" height="1.8" fill="#222"/>
<path d="M422 108.5c5-7 8-4.5 10.5 4.5" fill="none" stroke="#5c9cc4" stroke-width="1.5"/>
<path d="M433 114.5c1.5 7 4.5 13 9.5 6.5" fill="none" stroke="#d6d6d6" stroke-width="1.3"/>
<rect x="420.1" y="106.0" width="4.8" height="4.8" fill="#444" stroke="#5c9cc4" stroke-width="1.1"/>
<rect x="430.6" y="111.8" width="4.8" height="4.8" fill="#444" stroke="#5c9cc4" stroke-width="1.1"/>
<rect x="441.0" y="117.6" width="4.8" height="4.8" fill="#d9d9d9" stroke="#444" stroke-width="0.6"/>
<rect x="442.5" y="119.1" width="1.8" height="1.8" fill="#222"/>
<path d="M460 105.5c-1 8-1.5 13 0.5 15c3 2 9 1.5 15-0.5" fill="none" stroke="#5c9cc4" stroke-width="1.6"/>
<path d="M456.6 124.6l21-20" fill="none" stroke="#d6d6d6" stroke-width="1.2"/>
<path d="M490 106c-1.5 5 1.5 7 6 5.5c4-1.6 7.5-0.5 8.5 3.5c1 4 0.5 7-1.5 10.5" fill="none" stroke="#5c9cc4" stroke-width="1.4"/>
<circle cx="497" cy="103.4" r="1.8" fill="#bdbdbd"/>
<path d="M498 104.5l6 5.5M506.5 113.5l5 5.5" fill="none" stroke="#bdbdbd" stroke-width="0.8" stroke-dasharray="1.5 1"/>
<rect x="501.9" y="109.10000000000001" width="4.6" height="4.6" fill="#444" stroke="#5c9cc4" stroke-width="1.1"/>
<rect x="511.1" y="118.1" width="3" height="3" fill="#d9d9d9" stroke="#444" stroke-width="0.6"/>
<circle cx="546.9" cy="114" r="11.6" fill="#5ba6d9" stroke="#2f5f80" stroke-width="0.6"/>
<path d="M535.6 116c3 4 19.5 4 22.6 0" fill="none" stroke="#2f5f80" stroke-width="0.9"/>
<path d="M581 102.2l11 5.8v12.5l-11 6-11-6v-12.5z" fill="#5ba6d9" stroke="#2f5f80" stroke-width="0.6"/>
<path d="M570 108l11 5.8 11-5.8M581 113.8v12.7" fill="none" stroke="#2f5f80" stroke-width="0.8"/>
<path d="M605 107.5a10.5 4.6 0 0 1 21 0v14a10.5 4.6 0 0 1-21 0z" fill="#5ba6d9" stroke="#2f5f80" stroke-width="0.6"/>
<path d="M605 107.5a10.5 4.6 0 0 0 21 0" fill="none" stroke="#2f5f80" stroke-width="0.8"/>
<path d="M649.5 103.2l9.6 16.3a9.8 5.2 0 0 1-19.2 0z" fill="#5ba6d9" stroke="#2f5f80" stroke-width="0.6"/>
<path d="M684 102.4l11.8 11.6-11.8 11.6-11.8-11.6z" fill="#5ba6d9" stroke="#2f5f80" stroke-width="0.6"/>
<g transform="translate(718 114) rotate(-22)"><ellipse rx="9.4" ry="12.6" fill="#5ba6d9" stroke="#2f5f80" stroke-width="0.6"/><ellipse cx="0.4" cy="0" rx="2.6" ry="5.2" fill="#444" stroke="#2f5f80" stroke-width="0.7"/></g>
<path d="M743.5 106a8.5 4 0 0 1 17 0c0 5-5 7.5-6.7 8.5v5.5c3 0.3 4.5 1.2 4.5 2.2 0 1.3-3 2.3-6.3 2.3s-6.3-1-6.3-2.3c0-1 1.5-1.9 4.5-2.2v-5.5c-1.700-1-6.7-3.500-6.7-8.500z" fill="#5ba6d9" stroke="#2f5f80" stroke-width="0.6"/>
<path d="M744.8 105.8a7.2 3.2 0 0 1 14.4 0a7.2 3.2 0 0 1-14.4 0z" fill="#444"/>
<path d="M740.5 119.2l4.6-2.700v2c6 2.5 12 1.5 16.5-2-2 5-8 8-16.5 5.2v2.200z" fill="#d6d6d6"/>
<path d="M779.5 103h8c-4 6 3 14-2.5 22.500h-9c6-7-1.500-15 3.500-22.500z" fill="#5ba6d9" stroke="#2f5f80" stroke-width="0.5"/>
<path d="M789.5 103h8c-4 6 3 14-2.5 22.500h-9c6-7-1.500-15 3.500-22.500z" fill="#5ba6d9" stroke="#2f5f80" stroke-width="0.5"/>
<path d="M820.2 102l12 12-12 12-12-12z" fill="#5ba6d9" stroke="#2f5f80" stroke-width="0.6"/>
<circle cx="820.2" cy="114" r="5.6" fill="#444" stroke="#d6d6d6" stroke-width="0.9"/>
<path d="M845 104.5l13 8.500-4 9.500-11.500-9z" fill="#5ba6d9"/>
<circle cx="848.2" cy="109.2" r="5.2" fill="#d6d6d6"/>
<circle cx="861" cy="118" r="5.6" fill="#5ba6d9" stroke="#2f5f80" stroke-width="0.6"/>
<circle cx="861" cy="118" r="4.2" fill="#444" stroke="#d6d6d6" stroke-width="0.8"/>
<path d="M851.5 104.8l12.5 8.400" fill="none" stroke="#2f5f80" stroke-width="0.7"/>
<path d="M878.2 109.6c2-4 6-3.500 8-2.500c5 2.500 9 5.500 14.5 9.700-6-1-12 0.500-17.500 6-1.500-5-2.500-9-5-13.200z" fill="#5ba6d9" stroke="#2f5f80" stroke-width="0.5"/>
<path d="M883.5 116.500c4-3.500 9-4 12.5-2.800" fill="none" stroke="#cfe4f2" stroke-width="0.9"/>
<path d="M922.6 102l11 6v12.500l-11 6.200-11-6.200v-12.500z" fill="#5ba6d9" stroke="#2f5f80" stroke-width="0.6"/>
<path d="M911.8 108.4l10.800 5.800 10.800-5.800M922.600 114.200v12.200" fill="none" stroke="#e6eef4" stroke-width="2.2"/>
<path d="M922.6 102l11 6v12.500l-11 6.200-11-6.200v-12.500z" fill="none" stroke="#2f5f80" stroke-width="0.6"/>
<rect x="945.2" y="108" width="18" height="18" fill="#5ba6d9" stroke="#2f5f80" stroke-width="0.6"/>
<path d="M949 108c0 8 6 14 14.200 14M952.500 108c0 6 4.500 10.500 10.700 10.500" fill="none" stroke="#2f5f80" stroke-width="0.7"/>
<circle cx="961" cy="109.4" r="8.4" fill="none" stroke="#d6d6d6" stroke-width="0.9"/>
<circle cx="961" cy="109.4" r="6.6" fill="none" stroke="#d6d6d6" stroke-width="0.8"/>
<rect x="979.4" y="108" width="18" height="18" fill="#5ba6d9" stroke="#2f5f80" stroke-width="0.6"/>
<circle cx="995.2" cy="109.2" r="8.6" fill="#5ba6d9" stroke="#2f5f80" stroke-width="0.6"/>
<path d="M984.5 108c0 7 5 12.500 12.900 12.500" fill="none" stroke="#dfeaf2" stroke-width="1"/>
<path d="M1013.4 108h6.500c0 7 4.500 11.500 11.500 11.500v6.500h-18z" fill="#5ba6d9" stroke="#2f5f80" stroke-width="0.6"/>
<circle cx="1029.4" cy="109.2" r="8.6" fill="none" stroke="#d6d6d6" stroke-width="1" stroke-dasharray="2.6 1.800"/>
<rect x="1047.6" y="108" width="18" height="18" fill="#5ba6d9" stroke="#2f5f80" stroke-width="0.6"/>
<path d="M1054 108h11.600v11.600c-7 0-11.600-4.600-11.600-11.600z" fill="#d6d6d6"/>
<circle cx="1063.6" cy="109.2" r="8.6" fill="none" stroke="#d6d6d6" stroke-width="1" stroke-dasharray="2.6 1.800"/>
<path d="M1093.6 102l12 12-12 12-12-12z" fill="#5ba6d9" stroke="#2f5f80" stroke-width="0.5"/>
<path d="M1087.6 119.6l11.400-11.400 1.600 1.600-11.400 11.400z" fill="#d6d6d6"/>
<path d="M1126.5 102.500l6 6-11.500 11.500-6-6z" fill="#5ba6d9" stroke="#2f5f80" stroke-width="0.5"/>
<path d="M1134.4 110.400l6 6-11.500 11.500-6-6z" fill="#5ba6d9" stroke="#2f5f80" stroke-width="0.5"/>
<path d="M1168.500 103.200a5.600 5.600 0 1 0-1.500 9.300a6.500 6.500 0 0 1 1.500-9.300z" fill="#d6d6d6"/>
<path d="M1167 108.600l8.800 5.800a5.600 5.600 0 0 1-9.600 0.200a7 7 0 0 1 0.800-6z" fill="#d6d6d6"/>
<path d="M1150 112.800a5.600 5.600 0 0 0-1 9.400l8.500 4.600 5-9.800-8-4.200a5.600 5.600 0 0 0-4.500 0z" fill="#5ba6d9" stroke="#2f5f80" stroke-width="0.5"/>
<circle cx="1160.6" cy="121.7" r="5.5" fill="#5ba6d9" stroke="#2f5f80" stroke-width="0.6"/>
<circle cx="1160.6" cy="121.7" r="4.2" fill="#444" stroke="#d6d6d6" stroke-width="0.8"/>
<path d="M1198.400 101.800l9.600 9.400-7.400 7.600-9.600-9.600z" fill="#5ba6d9" stroke="#2f5f80" stroke-width="0.6"/>
<path d="M1191.500 111.800l8.700 8.600-6.700 5.800-8.900-9.400z" fill="#5ba6d9" stroke="#2f5f80" stroke-width="0.6"/>
<path d="M1183.800 103.600l1.800-1.800 5 5 2-2v6.800h-6.800l2-2z" fill="#d6d6d6" stroke="#444" stroke-width="0.4"/>
<path d="M1233 101.800l9.200 9.600-10.700 10.600-8.500-9.500z" fill="#5ba6d9" stroke="#2f5f80" stroke-width="0.6"/>
<path d="M1222.200 113.200l9.600 9.400-4.400 4-9.400-9z" fill="#d6d6d6" stroke="#444" stroke-width="0.4"/>
<path d="M1217 108.400l5.200-5.200-2-2h6.800v6.800l-2-2-5.200 5.200z" fill="#d6d6d6" stroke="#444" stroke-width="0.4"/>
<rect x="1261" y="102.8" width="7.2" height="15.2" fill="#5ba6d9" stroke="#2f5f80" stroke-width="0.4"/>
<rect x="1268.8" y="102.8" width="7.2" height="15.2" fill="#5ba6d9" stroke="#2f5f80" stroke-width="0.4"/>
<rect x="1253" y="110.6" width="2.8" height="14.6" fill="#d6d6d6"/>
<rect x="1257" y="110.6" width="2.8" height="14.6" fill="#d6d6d6"/>
<rect x="1261.4" y="119" width="2.8" height="6.2" fill="#d6d6d6"/>
<rect x="1265.2" y="119" width="2.8" height="6.2" fill="#d6d6d6"/>
<path d="M1289 109.500c-5 7-1 16 8 17.500c6 1 11-2 13-7-6 3-16 1-21-10.500z" fill="#5ba6d9" stroke="#2f5f80" stroke-width="0.5"/>
<path d="M1301.500 113.500l9-10.500 2.600 2.200-8.600 11z" fill="#d6d6d6"/>
<path d="M1291.500 120.500c3-0.500 7-3.500 9.500-6.500l3 2.500c-2 3.500-7 6-12.500 4z" fill="#d6d6d6"/>
<path d="M1322 113l11.500-10.500 3.500 8 8 2.500-11.500 12-8-3z" fill="#5ba6d9" stroke="#2f5f80" stroke-width="0.5"/>
<path d="M1321.500 125.500l23-22.500" fill="none" stroke="#d6d6d6" stroke-width="1.1"/>
<path d="M1321.500 125.500l23-22.500" fill="none" stroke="#444" stroke-width="0.3"/>
<path d="M1483.5 56.5l7-4.5 4.5 2v12.500l-5 2.500-6.500-3.500z" fill="#d0d0d0"/>
<path d="M1483.500 56.500l6.500 3.200 5-3.500M1490 59.700v9.300M1483.500 61.200l6.500 3.400 5-2.800M1486.800 58v8.800M1492.500 58.200v9.400" fill="none" stroke="#444" stroke-width="0.7"/>
<path d="M1493.5 51.500h5.500l2 2h-7.500z" fill="#d0d0d0"/>
<rect x="1496.3" y="53.5" width="2.4" height="14.5" fill="#d0d0d0"/>
<circle cx="1514.2" cy="52.6" r="2.1" fill="#d0d0d0"/>
<path d="M1506.500 56.800h15.500v2.400h-4.800v9.300h-2.100v-4.800h-1.700v4.800h-2.100v-9.300h-4.800z" fill="#d0d0d0"/>
<rect x="1506.5" y="57" width="2" height="2" fill="#e8e8e8" stroke="#444" stroke-width="0.4"/>
<rect x="1519.8" y="57" width="2" height="2" fill="#e8e8e8" stroke="#444" stroke-width="0.4"/>
<rect x="1513.2" y="58.6" width="2" height="2.4" fill="#444"/>
<rect x="1529" y="53.400000000000006" width="5" height="1.2" fill="#d0d0d0"/>
<rect x="1535" y="51.7" width="10" height="4.4" fill="none" stroke="#d0d0d0" stroke-width="1.4"/>
<rect x="1529" y="67.0" width="5" height="1.2" fill="#d0d0d0"/>
<rect x="1535" y="65.3" width="10" height="4.4" fill="none" stroke="#d0d0d0" stroke-width="1.4"/>
<rect x="1530.5" y="60.2" width="3.5" height="1.2" fill="#d0d0d0"/>
<path d="M1535.500 57.800h2v6h-2zM1543 57.800h2v6h-2z" fill="#d0d0d0"/>
<circle cx="1540.2" cy="60.8" r="1.8" fill="#d0d0d0"/>
<circle cx="1553.2" cy="53.4" r="1.9" fill="#d0d0d0"/>
<circle cx="1553.2" cy="60.2" r="1.9" fill="#d0d0d0"/>
<circle cx="1553.2" cy="67" r="1.9" fill="#d0d0d0"/>
<rect x="1556" y="52.8" width="3.2" height="1.2" fill="#d0d0d0"/>
<rect x="1556" y="59.6" width="6" height="1.2" fill="#d0d0d0"/>
<rect x="1556" y="66.4" width="6" height="1.2" fill="#d0d0d0"/>
<path d="M1559.500 51.500h6l2 2h-8z" fill="#d0d0d0"/>
<rect x="1563.3" y="53.5" width="2.2" height="14.5" fill="#d0d0d0"/>
<path d="M1581.500 50.800l8.600 6.200-8.600 6.200-8.600-6.200z" fill="#e6e6e6" stroke="#1d4a5c" stroke-width="0.8"/>
<path d="M1573 60l8.500 6 8.500-6M1573 62.600l8.500 6 8.500-6" fill="none" stroke="#e6e6e6" stroke-width="1"/>
<path d="M1577.500 55h8" fill="none" stroke="#8fb6c6" stroke-width="1"/>
<path d="M1577.500 57h8" fill="none" stroke="#8fb6c6" stroke-width="1"/>
<path d="M1577.500 59h8" fill="none" stroke="#8fb6c6" stroke-width="1"/>
<path d="M16.2 158v20.5l4.6 -4.2 3.6 7.4 3.8 -1.8 -3.6 -7.2 6 -0.6z" fill="#d4d4d4"/>
<ellipse cx="18.6" cy="203" rx="10" ry="6.2" transform="rotate(-24 18.6 203)" fill="none" stroke="#45a3ad" stroke-width="1.700" stroke-dasharray="3.4 2"/>
<path d="M19.6 200.6v18.04l4.048 -3.696 3.168 6.5120000000000005 3.344 -1.584 -3.168 -6.336 5.28 -0.528z" fill="#d8d8d8" stroke="#444" stroke-width="0.8"/>
<ellipse cx="18.8" cy="240.5" rx="10.5" ry="6.2" transform="rotate(38 18.8 240.5)" fill="none" stroke="#45a3ad" stroke-width="1.700" stroke-dasharray="3.4 2"/>
<path d="M24.500 237.600l8.600-8.600 1.700 1.700-8.400 8.800z" fill="#d0d0d0"/>
<path d="M16 244.500c3-0.500 6-3.500 7.500-6.500l3 2.800c-2 3.500-6 5-10.500 3.700z" fill="#d0d0d0"/>
<rect x="15" y="272.5" width="12" height="11.8" fill="#d0d0d0"/>
<path d="M17.500 267.500h7l-3.500-3.800z" fill="#45a3ad"/>
<path d="M17.500 289h7l-3.500 3.800z" fill="#45a3ad"/>
<path d="M11 275v7l-3.800-3.500z" fill="#45a3ad"/>
<path d="M31 275v7l3.800-3.500z" fill="#45a3ad"/>
<path d="M20.500 306.500l8 8-8 8-8-8z" fill="#d0d0d0"/>
<path d="M21 327.600a13 13 0 1 1 11.600-12.600" fill="none" stroke="#45a3ad" stroke-width="1.6"/>
<path d="M29.400 313.500h6.400l-3.200 4.600z" fill="#45a3ad"/>
<rect x="9.5" y="340.5" width="23" height="23" fill="none" stroke="#45a3ad" stroke-width="1.7"/>
<rect x="9.5" y="340.5" width="23" height="23" fill="none" stroke="#444" stroke-width="1.9" stroke-dasharray="1.6 2.2"/>
<rect x="9.5" y="353" width="11" height="11" fill="#d0d0d0"/>
<path d="M20 350.500h5.500v5.500" fill="none" stroke="#45a3ad" stroke-width="1.5"/>
<rect x="9.9" y="409.3" width="5" height="5" fill="#3c6f8f" stroke="#1c3f55" stroke-width="0.9"/>
<rect x="11.5" y="410.90000000000003" width="1.8" height="1.8" fill="#10202c"/>
<rect x="21.0" y="413.9" width="5" height="5" fill="#3c6f8f" stroke="#1c3f55" stroke-width="0.9"/>
<rect x="22.6" y="415.5" width="1.8" height="1.8" fill="#10202c"/>
<rect x="17.9" y="423.5" width="5" height="5" fill="#3c6f8f" stroke="#1c3f55" stroke-width="0.9"/>
<rect x="19.5" y="425.1" width="1.8" height="1.8" fill="#10202c"/>
<rect x="27.3" y="428.5" width="5" height="5" fill="#3c6f8f" stroke="#1c3f55" stroke-width="0.9"/>
<rect x="28.900000000000002" y="430.1" width="1.8" height="1.8" fill="#10202c"/>
<path d="M15 411.800l6 3M23 419l-2 4.500M23 427.500l4.500 2.500" fill="none" stroke="#7fb3cf" stroke-width="0.7"/>
<rect x="8" y="456" width="26.5" height="26.5" fill="#d6d6d6" stroke="#f0f0f0" stroke-width="1"/>
<rect x="9.5" y="457.5" width="23.5" height="23.5" fill="none" stroke="#8a8a8a" stroke-width="0.8"/>
<path d="M21.2 461.6l4.400 3-4.400 3-4.400-3z" fill="#333"/>
<path d="M16.4 466.2l4.400 3-4.400 3-4.400-3z" fill="#333"/>
<path d="M26 466.2l4.400 3-4.400 3-4.400-3z" fill="#333"/>
<path d="M21.2 470.8l4.400 3-4.400 3-4.400-3z" fill="#333"/>
<rect x="8" y="492" width="12.4" height="12.4" fill="#3a3a3a" stroke="#d6d6d6" stroke-width="1"/>
<path d="M14.2 494.6v7.200M10.6 498.2h7.200" fill="none" stroke="#e6e6e6" stroke-width="1.2"/>
<rect x="22.4" y="492" width="12.4" height="12.4" fill="#d6d6d6" stroke="#d6d6d6" stroke-width="1"/>
<path d="M28.599999999999998 495.6l3.800 2.600-3.800 2.600-3.800-2.600z" fill="#333"/>
<rect x="8" y="506" width="12.4" height="12.4" fill="#3a3a3a" stroke="#d6d6d6" stroke-width="1"/>
<path d="M14.2 508.6v7.200M10.6 512.2h7.200" fill="none" stroke="#e6e6e6" stroke-width="1.2"/>
<rect x="22.4" y="506" width="12.4" height="12.4" fill="#3a3a3a" stroke="#d6d6d6" stroke-width="1"/>
<path d="M28.599999999999998 508.6v7.200M25.0 512.2h7.200" fill="none" stroke="#e6e6e6" stroke-width="1.2"/>
<rect x="8" y="528" width="12" height="26.5" fill="#3a3a3a" stroke="#d6d6d6" stroke-width="1"/>
<path d="M14 537.500v7.400M10.300 541.200h7.400" fill="none" stroke="#e6e6e6" stroke-width="1.2"/>
<rect x="22.4" y="528" width="12.4" height="26.5" fill="#d6d6d6"/>
<path d="M28.600 538.400l3.800 2.700-3.800 2.700-3.800-2.700z" fill="#333"/>
<rect x="8" y="564" width="27" height="27" fill="none" stroke="#d0dce4" stroke-width="1.2"/>
<rect x="10.5" y="566.5" width="22" height="22" fill="none" stroke="#d0dce4" stroke-width="0.7"/>
<path d="M14.500 569v18M14.500 574.500h4M14.500 580.500h4M14.500 586h4" fill="none" stroke="#d0dce4" stroke-width="0.8"/>
<rect x="12.5" y="567.3" width="3.6" height="3.2" fill="#eef3f6"/>
<rect x="17" y="569" width="8" height="1.2" fill="#d0dce4"/>
<rect x="18.2" y="572.8" width="3.6" height="3.4" fill="#eef3f6"/>
<rect x="22.5" y="573.9" width="8" height="1.3" fill="#d0dce4"/>
<rect x="18.2" y="578.8" width="3.6" height="3.4" fill="#eef3f6"/>
<rect x="22.5" y="579.9" width="8" height="1.3" fill="#d0dce4"/>
<rect x="18.2" y="584.3" width="3.6" height="3.4" fill="#eef3f6"/>
<rect x="22.5" y="585.4" width="8" height="1.3" fill="#d0dce4"/>
<path d="M52.5 184.8l4 1.800-4 1.800zM67 184.800l-4 1.800 4 1.800zM52.500 199.600l4-1.800-4-1.800zM67 199.600l-4-1.800 4-1.800z" fill="#686868"/>
<rect x="55.5" y="187.5" width="8.5" height="9.5" fill="none" stroke="#686868" stroke-width="1"/>
<rect x="55.5" y="187.5" width="8.5" height="9.5" fill="none" stroke="#444" stroke-width="1.3" stroke-dasharray="2 2"/>
<rect x="83.6" y="210.1" width="9" height="7" fill="#cfcfcf"/>
<path d="M93.39999999999999 213.6l4.6-3.4v6.800z" fill="#cfcfcf"/>
<rect x="83.6" y="229.6" width="9" height="7" fill="#cfcfcf"/>
<path d="M93.39999999999999 233.1l4.6-3.4v6.800z" fill="#cfcfcf"/>
<rect x="83.6" y="249.1" width="9" height="7" fill="#cfcfcf"/>
<path d="M93.39999999999999 252.6l4.6-3.4v6.800z" fill="#cfcfcf"/>
<rect x="83.6" y="268.59999999999997" width="9" height="7" fill="#cfcfcf"/>
<path d="M93.39999999999999 272.09999999999997l4.6-3.4v6.800z" fill="#cfcfcf"/>
<path d="M90.6 285.7l3.700 2.500-3.700 2.500-3.700-2.500z" fill="#d8d8d8"/>
<path d="M86.4 288.9l3.700 2.500-3.700 2.500-3.700-2.500z" fill="#d8d8d8"/>
<path d="M94.8 288.9l3.700 2.500-3.700 2.500-3.700-2.500z" fill="#d8d8d8"/>
<path d="M90.6 292.1l3.700 2.500-3.700 2.500-3.700-2.500z" fill="#d8d8d8"/>
<path d="M92.500 303.500c5 3.500 1 6.500-2.500 8.500c-4 2.500-4 5 1 7" fill="none" stroke="#5c9cc4" stroke-width="1.5"/>
<circle cx="90.6" cy="330.5" r="7.2" fill="#3c3c3c" stroke="#dcdcdc" stroke-width="1.2"/>
<rect x="90" y="327.1" width="4.6" height="6.4" fill="#3fa7b0"/>
<circle cx="88.4" cy="332.1" r="2.7" fill="#e4e4e4"/>
<circle cx="90.6" cy="350" r="7.2" fill="#3c3c3c" stroke="#dcdcdc" stroke-width="1.2"/>
<rect x="90" y="346.6" width="4.6" height="6.4" fill="#3fa7b0"/>
<circle cx="88.4" cy="351.6" r="2.7" fill="#e4e4e4"/>
<rect x="312.0" y="164.5" width="1" height="14" fill="#686868"/>
<rect x="311.3" y="167.5" width="2.4" height="8" fill="#8e8e8e" rx="1.2"/>
<rect x="452.5" y="164.5" width="1" height="14" fill="#686868"/>
<rect x="451.8" y="167.5" width="2.4" height="8" fill="#8e8e8e" rx="1.2"/>
<rect x="593.5" y="164.5" width="1" height="14" fill="#686868"/>
<rect x="592.8" y="167.5" width="2.4" height="8" fill="#8e8e8e" rx="1.2"/>
<rect x="733.3" y="164.5" width="1" height="14" fill="#686868"/>
<rect x="732.5999999999999" y="167.5" width="2.4" height="8" fill="#8e8e8e" rx="1.2"/>
<rect x="818.2" y="164.5" width="1" height="14" fill="#686868"/>
<rect x="817.5" y="167.5" width="2.4" height="8" fill="#8e8e8e" rx="1.2"/>
<rect x="847.5" y="164.5" width="1" height="14" fill="#686868"/>
<rect x="846.8" y="167.5" width="2.4" height="8" fill="#8e8e8e" rx="1.2"/>
<rect x="913.9" y="164.5" width="1" height="14" fill="#686868"/>
<rect x="913.1999999999999" y="167.5" width="2.4" height="8" fill="#8e8e8e" rx="1.2"/>
<rect x="321" y="168.4" width="9" height="7" fill="#d0d0d0"/>
<path d="M330.8 171.9l4.6-3.4v6.800z" fill="#d0d0d0"/>
<rect x="339.2" y="166" width="8.7" height="5.7" fill="#c8c8c8"/>
<path d="M349 168.800l4-3v6z" fill="#c8c8c8"/>
<rect x="339.6" y="172" width="6.6" height="5.6" fill="#45a3ad" stroke="#1d5560" stroke-width="0.6"/>
<path d="M341.200 172v-1.600a1.700 1.700 0 0 1 3.400 0v1.600" fill="none" stroke="#45a3ad" stroke-width="1.3"/>
<rect x="342.4" y="173.8" width="1" height="2" fill="#1d4a55"/>
<rect x="358.4" y="166" width="8.7" height="5.7" fill="#c8c8c8"/>
<path d="M368.200 168.800l4-3v6z" fill="#c8c8c8"/>
<circle cx="362.4" cy="174" r="4" fill="#444"/>
<path d="M364.40 174.00L366.20 174.00M363.81 175.41L365.09 176.69M362.40 176.00L362.40 177.80M360.99 175.41L359.71 176.69M360.40 174.00L358.60 174.00M360.99 172.59L359.71 171.31M362.40 172.00L362.40 170.20M363.81 172.59L365.09 171.31" fill="none" stroke="#45a3ad" stroke-width="1.7"/>
<circle cx="362.4" cy="174" r="2.5" fill="#45a3ad"/>
<circle cx="362.4" cy="174" r="1.125" fill="#444"/>
<path d="M380.400 166.200h6.800v10.200l-3.400-3.200-3.400 3.200z" fill="#d0d0d0"/>
<path d="M397.500 176.500l5-9.500 3-1v9.500z" fill="#5ec4c6" stroke="#2b7c88" stroke-width="0.5"/>
<path d="M395.500 178.200l3.500-3.500M402 178.200l6.500-3.500h-3l-6.500 3.500z" fill="none" stroke="#d0d0d0" stroke-width="1"/>
<path d="M406.500 173.500l2.500 1.500-6 3h-3z" fill="#bdbdbd"/>
<circle cx="424" cy="173" r="3.2" fill="none" stroke="#45a3ad" stroke-width="1.3"/>
<path d="M421.800 175.400l-3.600 3.600" fill="none" stroke="#45a3ad" stroke-width="1.4"/>
<path d="M414 169h7M417.500 165.500v7M419 164.500l-1.500-1-1.500 1M414.800 167.500l-1.200 1.500 1.200 1.500" fill="none" stroke="#d0d0d0" stroke-width="1.1"/>
<path d="M434.500 176.500l8.600-9.400 2.200 2-8.800 9.200z" fill="#d0d0d0"/>
<path d="M433 178.800l1.500-2.300 2 1.800z" fill="#45a3ad"/>
<path d="M440 177c1.500 2.500 5 1.500 4.500-1.500" fill="none" stroke="#d0d0d0" stroke-width="1"/>
<rect x="458.8" y="162.8" width="18.2" height="17.2" fill="#5187ae"/>
<rect x="463" y="166.6" width="10.4" height="10.4" fill="#e6e6e6" stroke="#333" stroke-width="0.8"/>
<path d="M466.500 166.600v10.400M470 166.600v10.400M463 170h10.400M463 173.600h10.400" fill="none" stroke="#333" stroke-width="0.9"/>
<rect x="480.4" y="166.4" width="13" height="10.6" fill="none" stroke="#d0d0d0" stroke-width="1.2"/>
<rect x="481.8" y="169" width="10.2" height="5.4" fill="#222"/>
<rect x="481.9" y="167.2" width="1.3" height="1" fill="#444"/>
<rect x="481.9" y="175.4" width="1.3" height="1" fill="#444"/>
<rect x="484.59999999999997" y="167.2" width="1.3" height="1" fill="#444"/>
<rect x="484.59999999999997" y="175.4" width="1.3" height="1" fill="#444"/>
<rect x="487.29999999999995" y="167.2" width="1.3" height="1" fill="#444"/>
<rect x="487.29999999999995" y="175.4" width="1.3" height="1" fill="#444"/>
<rect x="490.0" y="167.2" width="1.3" height="1" fill="#444"/>
<rect x="490.0" y="175.4" width="1.3" height="1" fill="#444"/>
<rect x="499.4" y="166.2" width="13" height="11" fill="#333" stroke="#d0d0d0" stroke-width="1.2"/>
<circle cx="505.9" cy="171.7" r="3.3" fill="#5ec4c6"/>
<rect x="516.5" y="163.5" width="16" height="16" fill="#3c3c3c"/>
<circle cx="524.5" cy="171.5" r="3.4" fill="#555"/>
<rect x="536.4" y="166.2" width="13" height="11" fill="#333" stroke="#d0d0d0" stroke-width="1.2"/>
<rect x="539" y="169" width="7.8" height="5.4" fill="#45a3ad"/>
<path d="M541 169v5.400M544.800 169v5.400M539 171.700h7.800" fill="none" stroke="#222" stroke-width="0.7"/>
<rect x="555.4" y="166.2" width="13" height="11" fill="#333" stroke="#d0d0d0" stroke-width="1.2"/>
<path d="M557 176l3.500-4.500 2.500 2.500 2-2 1.800 4z" fill="#5ec4c6"/>
<circle cx="564.8" cy="169.6" r="1.6" fill="#5ec4c6"/>
<rect x="573.4" y="166.2" width="13" height="11" fill="#333" stroke="#d0d0d0" stroke-width="1.2"/>
<path d="M576.800 169h6.400M580 169v6.400" fill="none" stroke="#5ec4c6" stroke-width="1.5"/>
<path d="M608.6 165.0l6 3.200v6.800l-6 3.300-6-3.300v-6.800z" fill="none" stroke="#d0d0d0" stroke-width="1"/>
<path d="M602.6 168.2l6 3.200 6-3.200M608.6 171.4v6.900" fill="none" stroke="#d0d0d0" stroke-width="1"/>
<rect x="617.9" y="162.8" width="18.4" height="17.2" fill="#5187ae"/>
<path d="M627.1 165.0l6 3.200v6.800l-6 3.300-6-3.300v-6.800z" fill="#5ec4c6" stroke="#12414f" stroke-width="0.9"/>
<path d="M621.1 168.2l6 3.200 6-3.200M627.1 171.4v6.900" fill="none" stroke="#12414f" stroke-width="0.9"/>
<path d="M627.100 165l6 3.200-6 3.200-6-3.200z" fill="#8fe0e2" stroke="#12414f" stroke-width="0.7"/>
<circle cx="646" cy="171.6" r="6" fill="#dcdcdc"/>
<defs><pattern id="chk" width="3" height="3" patternUnits="userSpaceOnUse"><rect width="3" height="3" fill="#e4e4e4"/><rect width="1.5" height="1.5" fill="#222"/><rect x="1.5" y="1.5" width="1.5" height="1.5" fill="#222"/></pattern></defs>
<path d="M646 165.600a6 6 0 0 1 0 12z" fill="url(#chk)"/>
<path d="M664.6 165.0l6 3.200v6.800l-6 3.300-6-3.300v-6.800z" fill="#3b7f8c" stroke="#d0d0d0" stroke-width="0.9"/>
<path d="M658.6 168.2l6 3.200 6-3.200M664.6 171.4v6.900" fill="none" stroke="#d0d0d0" stroke-width="0.9"/>
<circle cx="683" cy="171.6" r="6" fill="url(#chk)"/>
<circle cx="701.6" cy="170.6" r="3.4" fill="#e6e6e6"/>
<rect x="700.2" y="173.6" width="2.8" height="3" fill="#cfcfcf"/>
<path d="M701.600 164v1.600M696 166.500l1.200 1.200M707.200 166.500l-1.200 1.200M694.600 171h1.700M706.800 171h1.700" fill="none" stroke="#e0e0e0" stroke-width="1"/>
<circle cx="722.4" cy="171" r="5" fill="#5ec4c6" stroke="#2b7c88" stroke-width="0.6"/>
<path d="M712.500 176.500l4-3h3l-2.500 3z" fill="#bdbdbd"/>
<path d="M742.500 176l7.500-2.500 7.500 2.500-7.500 2.500z" fill="#45a3ad"/>
<circle cx="750" cy="170" r="4.8" fill="#e2e2e2"/>
<circle cx="765.8" cy="173.5" r="3.6" fill="#6c6c6c"/>
<circle cx="767.6" cy="171.8" r="4" fill="#8e8e8e"/>
<circle cx="770.4" cy="169.6" r="4.4" fill="#dadada"/>
<circle cx="786.6" cy="171.6" r="5.2" fill="none" stroke="#45a3ad" stroke-width="2.4"/>
<path d="M786.600 166.400a5.200 5.200 0 0 1 0 10.400" fill="none" stroke="#e6e6e6" stroke-width="2.4" stroke-dasharray="2 1.400"/>
<rect x="797" y="163.5" width="16.5" height="16" fill="#3c3c3c"/>
<rect x="802" y="168" width="8" height="8" fill="#3f545c"/>
<rect x="829" y="166.6" width="8.6" height="8.6" fill="none" stroke="#45a3ad" stroke-width="1.3"/>
<rect x="829" y="166.600" width="8.600" height="8.600" fill="none" stroke="#444" stroke-width="1.5" stroke-dasharray="1.400 2.200"/>
<path d="M836 168.5v8.924999999999999l2.125 -1.9549999999999998 1.615 3.57 1.7 -0.765 -1.615 -3.4849999999999994 2.8049999999999997 -0.17z" fill="#dcdcdc" stroke="#444" stroke-width="0.7"/>
<rect x="860.5" y="165.8" width="8.4" height="8.4" fill="none" stroke="#d0d0d0" stroke-width="1.7"/>
<rect x="857.2" y="169.2" width="8.4" height="8.4" fill="#444" stroke="#d0d0d0" stroke-width="1.7"/>
<rect x="879.5" y="165.8" width="8.4" height="8.4" fill="none" stroke="#d0d0d0" stroke-width="1.7"/>
<rect x="876.2" y="169.2" width="8.4" height="8.4" fill="#444" stroke="#d0d0d0" stroke-width="1.7"/>
<rect x="882.5" y="168.6" width="2.6" height="2.6" fill="#d0d0d0"/>
<rect x="895" y="166" width="11.6" height="11.6" fill="#333" stroke="#d0d0d0" stroke-width="1.3"/>
<path d="M897.500 168.200l4.800 2-1.400 0.700 3.200 3.600-1.200 1.200-3.400-3.400-0.800 1.200z" fill="#d0d0d0"/>
<circle cx="931" cy="171.6" r="5.9" fill="#dcdcdc"/>
<circle cx="931" cy="171.6" r="2.3" fill="#444"/>
<path d="M933.30 171.60L933.72 176.95M932.15 173.59L927.73 176.63M929.85 173.59L925.01 171.28M928.70 171.60L928.28 166.25M929.85 169.61L934.27 166.57M932.15 169.61L936.99 171.92" fill="none" stroke="#444" stroke-width="0.8"/>
<rect x="942.4" y="165" width="35.6" height="11.7" fill="#2e2e2e" rx="1.5"/>
<text x="946" y="175" font-size="11.5" fill="#ececec" textLength="24" lengthAdjust="spacingAndGlyphs" stroke="#ececec" stroke-width="0.3">0.00</text>
<path d="M991.500 165.500h4v12h-4a6 6 0 0 0 0-12z" fill="#dcdcdc"/>
<path d="M991 165.600a6 6 0 0 0 0 12z" fill="#dcdcdc"/>
<path d="M991 167.500a4 4 0 0 1 0 8.200z" fill="#444"/>
<rect x="1001.7" y="165" width="35.1" height="11.7" fill="#2e2e2e" rx="1.5"/>
<text x="1006" y="175" font-size="11.5" fill="#ececec" textLength="24" lengthAdjust="spacingAndGlyphs" stroke="#ececec" stroke-width="0.3">1.00</text>
<rect x="1041" y="162.8" width="16.5" height="17.2" fill="#5187ae"/>
<circle cx="1049.4" cy="171.6" r="6" fill="#49b4b8" stroke="#12414f" stroke-width="0.8"/>
<text x="1045.5" y="173.8" font-size="5.5" fill="#12414f" textLength="7.8" lengthAdjust="spacingAndGlyphs" font-weight="bold">ON</text>
<path d="M1526 147l2.500 3.500h-5z" fill="#7cc36a"/>
<path d="M1520.500 158l2.500-4 2.500 4z" fill="#5a7fd8"/>
<path d="M1527 158l2.500-4 2.500 4z" fill="#d85a5a"/>
<path d="M1526 150.500v3.500l-2.500 1.500M1526 154l2.500 1.500" fill="none" stroke="#e0e0e0" stroke-width="1.1"/>
<circle cx="1546.3" cy="151" r="6.6" fill="#3fa7b0"/>
<circle cx="1547" cy="152.2" r="2.8" fill="#444"/>
<path d="M1546.500 157.600a6.600 6.600 0 0 0 6-4l-4-1.500z" fill="#666"/>
<path d="M1561.500 146.500v10.500h10.500" fill="none" stroke="#9a9a9a" stroke-width="0.9"/>
<path d="M1563.500 155l7-7" fill="none" stroke="#45a3ad" stroke-width="1.6"/>
<path d="M1566.500 146.500h5.500v5.500z" fill="#45a3ad"/>
<path d="M1480.7 714.6l7.200-4.800 6 3.600-7 6.200z" fill="#dedede"/>
<path d="M1487.7 719.4v-5.400h-2l3.800-4.600 3.800 4.600h-2v5.400z" fill="#45a3ad" stroke="#1d5560" stroke-width="0.7"/>
<path d="M1505 714.6l7.200-4.800 6 3.600-7 6.200z" fill="#dedede"/>
<path d="M1512 709.8v5.400h-2l3.800 4.600 3.800-4.600h-2v-5.400z" fill="#45a3ad" stroke="#1d5560" stroke-width="0.7"/>
<path d="M1531 714.6l7.200-4.800 6 3.600-7 6.200z" fill="#dedede"/>
<path d="M1541 707.8h2.200v2.200h2.200v2.200h-2.200v2.200h-2.200v-2.200h-2.200v-2.200h2.200z" fill="#45a3ad" stroke="#1d5560" stroke-width="0.7"/>
<path d="M1554.5 714.6l7.200-4.800 6 3.600-7 6.200z" fill="#dedede"/>
<circle cx="1564.1" cy="710.6" r="3.3" fill="#45a3ad" stroke="#1d5560" stroke-width="0.8"/>
<rect x="1410" y="885.2" width="2" height="13" fill="#cfcfcf"/>
<path d="M1419.500 885.500v12.500l-6.500-6.250zM1426.200 885.500v12.500l-6.500-6.250z" fill="#cfcfcf"/>
<rect x="1434" y="885.2" width="2.2" height="13" fill="#cfcfcf"/>
<path d="M1446.200 885.500v12.500l-9.200-6.250z" fill="#cfcfcf"/>
<rect x="1455.6" y="883.5" width="3" height="17" fill="#e08a4a" rx="1.2"/>
<path d="M1469 885.500v12.500l-9.200-6.250z" fill="#cfcfcf"/>
<path d="M1492 884v15.500l-13-7.750z" fill="#cfcfcf"/>
<path d="M1501.500 884v15.500l13-7.750z" fill="#cfcfcf"/>
<path d="M1523 885.500v12.500l9.200-6.250z" fill="#cfcfcf"/>
<rect x="1533.2" y="883.5" width="3" height="17" fill="#e08a4a" rx="1.2"/>
<path d="M1546 885.500v12.500l9.200-6.250z" fill="#cfcfcf"/>
<rect x="1556" y="885.2" width="2.2" height="13" fill="#cfcfcf"/>
<path d="M1567 885.500v12.500l6.500-6.250zM1573.600 885.500v12.500l6.500-6.250z" fill="#cfcfcf"/>
<rect x="1581" y="885.2" width="2" height="13" fill="#cfcfcf"/>
<path d="M1499 929.500a3.500 3.500 0 0 1 0-7h9.500M1508 923.500a3.500 3.500 0 0 1 0 7h-9.500" fill="none" stroke="#dcdcdc" stroke-width="1.5"/>
<path d="M1506.500 920l3 2.500-3 2.500zM1500.500 928l-3 2.500 3 2.500z" fill="#dcdcdc"/>
<path d="M1540.500 923.500a7.400 7.400 0 0 1 13-0.500M1553.500 931.500a7.400 7.400 0 0 1-13 0.500" fill="none" stroke="#f4dcdc" stroke-width="1.3"/>
<path d="M1539 921v4h4zM1555 934v-4h-4z" fill="#f4dcdc"/>
<path d="M1546.800 922.500v10M1542.500 927.500h8.600" fill="none" stroke="#f0b060" stroke-width="1.6"/>
<path d="M1544.200 925v5M1549.400 925v5" fill="none" stroke="#f4dcdc" stroke-width="1"/>
<circle cx="1570.4" cy="922.6" r="2.6" fill="none" stroke="#d8d8d8" stroke-width="1.5"/>
<path d="M1573.60 922.60L1575.00 922.60M1572.66 924.86L1573.65 925.85M1570.40 925.80L1570.40 927.20M1568.14 924.86L1567.15 925.85M1567.20 922.60L1565.80 922.60M1568.14 920.34L1567.15 919.35M1570.40 919.40L1570.40 918.00M1572.66 920.34L1573.65 919.35" fill="none" stroke="#d8d8d8" stroke-width="1.4"/>
<circle cx="1580.5" cy="923.8" r="1.6" fill="#e08a4a"/>
<path d="M1575.500 927l3.500-1 3 2 2.500-1M1579 926l-1 4.500 2.500 2v3.500M1578 930.500l-2.500 2.500-3 0.500" fill="none" stroke="#e08a4a" stroke-width="1.4"/>
<rect x="1568.8" y="951.6" width="18.2" height="18.2" fill="#d2d2d2"/>
<rect x="1568.8" y="954.3" width="18.2" height="1" fill="#444"/>
<rect x="1570.5" y="952.5" width="1" height="1" fill="#444"/>
<rect x="1572.5" y="952.5" width="1" height="1" fill="#444"/>
<rect x="1574.5" y="952.5" width="1" height="1" fill="#444"/>
<text x="1571" y="966.5" font-size="10" fill="#333" textLength="13.5" lengthAdjust="spacingAndGlyphs" font-weight="bold">{;}</text>
<path d="M1586 999l9-9M1589.500 999l5.500-5.500M1593 999l2-2" fill="none" stroke="#666" stroke-width="0.8"/>
</svg>
</body></html>
